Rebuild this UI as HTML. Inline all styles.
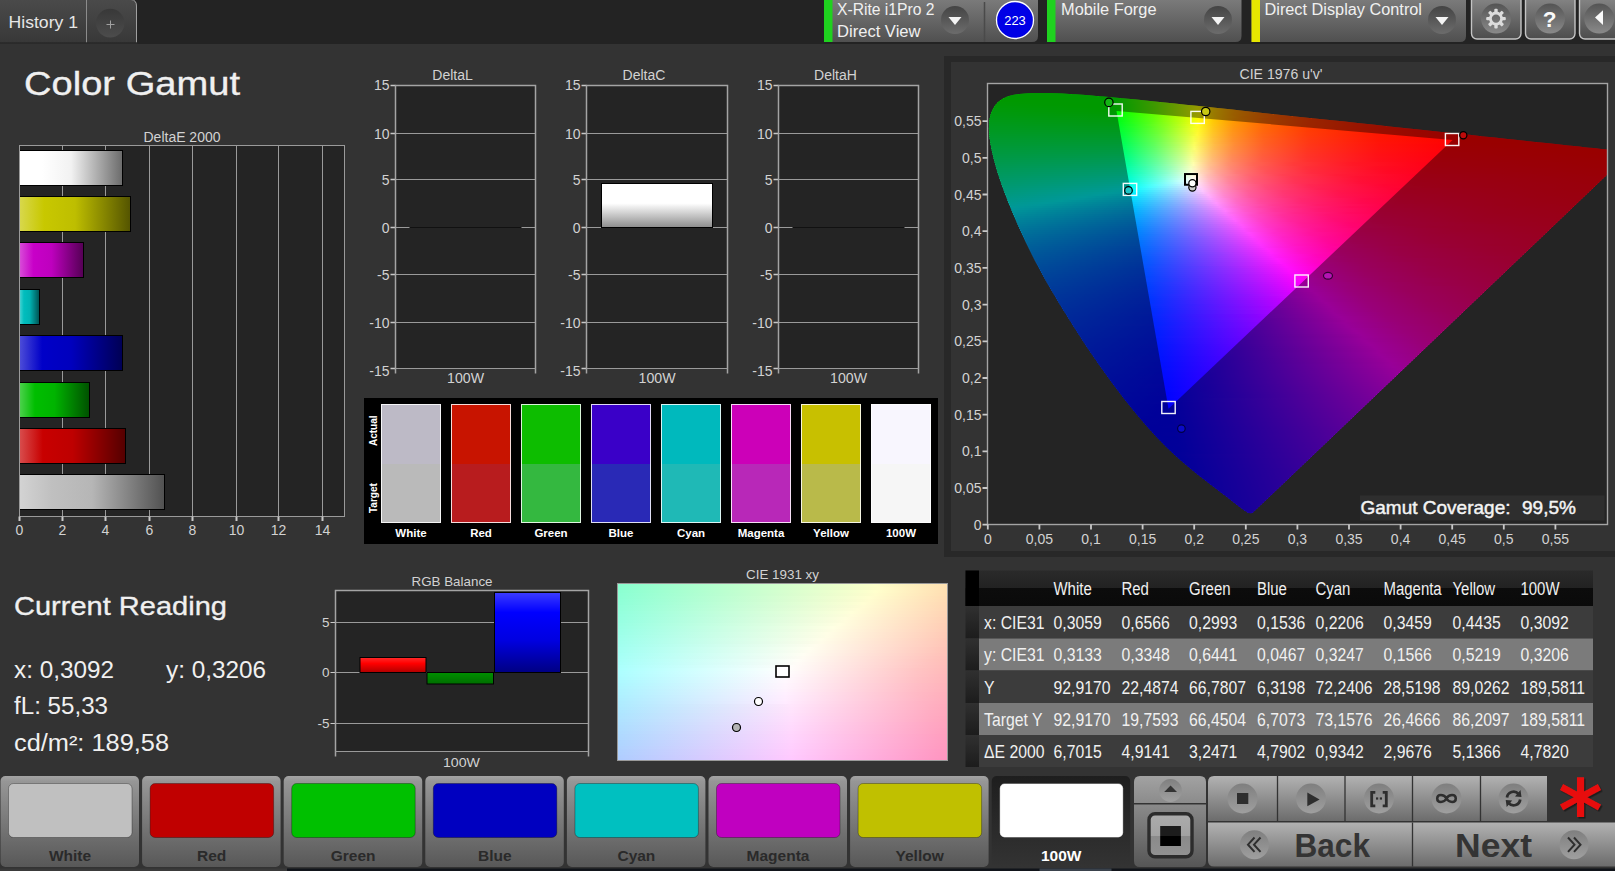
<!DOCTYPE html><html><head><meta charset="utf-8"><title>Color Gamut</title><style>html,body{margin:0;padding:0;background:#333;overflow:hidden}svg{display:block}</style></head><body><svg width="1615" height="871" viewBox="0 0 1615 871" font-family="Liberation Sans, sans-serif"><defs><linearGradient id="tab" x1="0" y1="0" x2="0" y2="1"><stop offset="0" stop-color="#4a4a4a"/><stop offset="1" stop-color="#383838"/></linearGradient><linearGradient id="plus" x1="0" y1="0" x2="0" y2="1"><stop offset="0" stop-color="#383838"/><stop offset="1" stop-color="#4c4c4c"/></linearGradient><linearGradient id="pan" x1="0" y1="0" x2="0" y2="1"><stop offset="0" stop-color="#7a7a7a"/><stop offset="1" stop-color="#505050"/></linearGradient><linearGradient id="btn" x1="0" y1="0" x2="0" y2="1"><stop offset="0" stop-color="#8a8a8a"/><stop offset="1" stop-color="#4c4c4c"/></linearGradient><linearGradient id="dd" x1="0" y1="0" x2="0" y2="1"><stop offset="0" stop-color="#444"/><stop offset="1" stop-color="#6c6c6c"/></linearGradient><linearGradient id="dd2" x1="0" y1="0" x2="0" y2="1"><stop offset="0" stop-color="#545454"/><stop offset="1" stop-color="#8a8a8a"/></linearGradient><linearGradient id="hb0" x1="0" y1="0" x2="1" y2="0"><stop offset="0" stop-color="#ffffff"/><stop offset="0.22" stop-color="#ffffff"/><stop offset="0.5" stop-color="#f2f2f2"/><stop offset="1" stop-color="#6b6b6b"/></linearGradient><linearGradient id="hb1" x1="0" y1="0" x2="1" y2="0"><stop offset="0" stop-color="#d8d84d"/><stop offset="0.22" stop-color="#c8c800"/><stop offset="0.5" stop-color="#bebe00"/><stop offset="1" stop-color="#545400"/></linearGradient><linearGradient id="hb2" x1="0" y1="0" x2="1" y2="0"><stop offset="0" stop-color="#d84dd8"/><stop offset="0.22" stop-color="#c800c8"/><stop offset="0.5" stop-color="#be00be"/><stop offset="1" stop-color="#540054"/></linearGradient><linearGradient id="hb3" x1="0" y1="0" x2="1" y2="0"><stop offset="0" stop-color="#4dd2d2"/><stop offset="0.22" stop-color="#00bebe"/><stop offset="0.5" stop-color="#00b4b4"/><stop offset="1" stop-color="#005050"/></linearGradient><linearGradient id="hb4" x1="0" y1="0" x2="1" y2="0"><stop offset="0" stop-color="#4d4dd8"/><stop offset="0.22" stop-color="#0000c8"/><stop offset="0.5" stop-color="#0000be"/><stop offset="1" stop-color="#000054"/></linearGradient><linearGradient id="hb5" x1="0" y1="0" x2="1" y2="0"><stop offset="0" stop-color="#4dd24d"/><stop offset="0.22" stop-color="#00be00"/><stop offset="0.5" stop-color="#00b400"/><stop offset="1" stop-color="#005000"/></linearGradient><linearGradient id="hb6" x1="0" y1="0" x2="1" y2="0"><stop offset="0" stop-color="#d84d4d"/><stop offset="0.22" stop-color="#c80000"/><stop offset="0.5" stop-color="#be0000"/><stop offset="1" stop-color="#540000"/></linearGradient><linearGradient id="hb7" x1="0" y1="0" x2="1" y2="0"><stop offset="0" stop-color="#d3d3d3"/><stop offset="0.22" stop-color="#c0c0c0"/><stop offset="0.5" stop-color="#b6b6b6"/><stop offset="1" stop-color="#515151"/></linearGradient><linearGradient id="wb" x1="0" y1="0" x2="0" y2="1"><stop offset="0" stop-color="#fff"/><stop offset="0.45" stop-color="#fff"/><stop offset="1" stop-color="#8c8c8c"/></linearGradient><clipPath id="loc"><path d="M1252.6 512.8L1252.5 512.8L1252.4 512.7L1252.3 512.8L1252.2 512.9L1252.1 512.9L1251.9 512.8L1251.7 512.8L1251.6 512.9L1251.6 513.1L1251.4 513.2L1251.3 513.2L1251.1 513.2L1250.8 513.2L1250.4 513.2L1250.1 513.2L1249.8 513.2L1249.5 513.1L1249.1 513.1L1248.5 512.9L1247.8 512.5L1246.8 511.9L1245.7 511.2L1244.5 510.4L1243.1 509.4L1241.5 508.2L1239.6 506.9L1237.5 505.3L1235.1 503.5L1232.6 501.5L1229.8 499.2L1226.7 496.8L1223.3 494.2L1219.4 491.3L1215.2 488.0L1210.5 484.4L1205.5 480.6L1200.2 476.5L1194.3 471.8L1188.0 466.6L1181.2 460.8L1174.0 454.3L1166.1 446.8L1157.3 437.8L1147.3 426.7L1136.2 413.8L1124.5 399.3L1112.2 383.1L1099.4 365.3L1086.2 345.9L1073.0 325.6L1059.9 304.6L1047.3 283.3L1035.7 262.1L1025.5 241.5L1016.6 221.9L1008.8 203.6L1002.4 186.8L997.4 171.9L993.7 158.7L991.1 147.3L989.5 137.4L988.9 128.9L989.2 121.6L990.4 115.3L992.3 109.9L995.0 105.4L998.3 101.8L1002.2 98.9L1006.6 96.8L1011.4 95.3L1016.5 94.3L1021.9 93.7L1027.5 93.3L1033.3 93.1L1039.2 93.1L1045.0 93.1L1050.9 93.1L1056.9 93.3L1063.0 93.6L1069.3 93.9L1075.7 94.3L1082.4 94.7L1089.3 95.3L1096.4 95.9L1103.8 96.5L1111.5 97.2L1119.5 98.0L1127.8 98.8L1136.5 99.6L1145.5 100.5L1154.9 101.5L1164.7 102.5L1174.9 103.6L1185.5 104.7L1196.6 105.8L1208.0 107.1L1219.9 108.3L1232.3 109.6L1245.1 111.0L1258.2 112.4L1271.8 113.9L1285.8 115.4L1300.1 116.9L1314.7 118.4L1329.6 120.0L1344.7 121.6L1359.9 123.2L1374.8 124.8L1389.4 126.4L1403.9 127.9L1418.4 129.5L1432.6 131.0L1446.2 132.5L1459.2 133.8L1471.6 135.1L1483.5 136.4L1494.7 137.6L1505.3 138.7L1515.2 139.8L1524.4 140.8L1532.9 141.7L1540.9 142.5L1548.4 143.3L1555.3 144.1L1561.8 144.8L1568.0 145.4L1573.9 146.0L1579.3 146.6L1584.4 147.2L1589.2 147.7L1593.6 148.1L1597.6 148.6L1601.2 149.0L1604.4 149.3L1607.2 149.6L1609.8 149.9L1612.2 150.1L1614.3 150.4L1616.2 150.6L1617.8 150.7L1619.2 150.9L1620.4 151.0L1621.4 151.1L1622.4 151.2L1623.4 151.3L1624.2 151.4L1625.0 151.5L1625.7 151.6L1626.5 151.7L1627.3 151.7L1628.0 151.8L1628.7 151.9L1629.3 152.0L1629.7 152.0L1630.0 152.0L1630.2 152.1L1630.5 152.1L1630.6 152.1L1630.8 152.1L1630.8 152.1L1630.8 152.1Z"/></clipPath><clipPath id="plotc"><rect x="988" y="84" width="619" height="440"/></clipPath><linearGradient id="c0" gradientUnits="userSpaceOnUse" x1="1018" x2="1072" y1="0" y2="0"><stop offset="0" stop-color="#0f0"/><stop offset="1" stop-color="#0f0"/></linearGradient><linearGradient id="c1" gradientUnits="userSpaceOnUse" x1="1008" x2="1099" y1="0" y2="0"><stop offset="0" stop-color="#0f0"/><stop offset="1" stop-color="#0f0"/></linearGradient><linearGradient id="c2" gradientUnits="userSpaceOnUse" x1="1003" x2="1121" y1="0" y2="0"><stop offset="0" stop-color="#0f0"/><stop offset="0.917" stop-color="#0f0"/><stop offset="0.958" stop-color="#05ff00"/><stop offset="1" stop-color="#10ff00"/></linearGradient><linearGradient id="c3" gradientUnits="userSpaceOnUse" x1="1000" x2="1141" y1="0" y2="0"><stop offset="0" stop-color="#0f0"/><stop offset="0.786" stop-color="#0f0"/><stop offset="0.821" stop-color="#03ff00"/><stop offset="1" stop-color="#42ff00"/></linearGradient><linearGradient id="c4" gradientUnits="userSpaceOnUse" x1="997" x2="1161" y1="0" y2="0"><stop offset="0" stop-color="#00ff01"/><stop offset="0.697" stop-color="#0f0"/><stop offset="0.727" stop-color="#04ff00"/><stop offset="0.97" stop-color="#6cff00"/><stop offset="1" stop-color="#7bff00"/></linearGradient><linearGradient id="c5" gradientUnits="userSpaceOnUse" x1="995" x2="1180" y1="0" y2="0"><stop offset="0" stop-color="#00ff05"/><stop offset="0.459" stop-color="#0f0"/><stop offset="0.649" stop-color="#0f0"/><stop offset="0.838" stop-color="#5aff00"/><stop offset="1" stop-color="#b8ff00"/></linearGradient><linearGradient id="c6" gradientUnits="userSpaceOnUse" x1="994" x2="1199" y1="0" y2="0"><stop offset="0" stop-color="#00ff08"/><stop offset="0.415" stop-color="#0f0"/><stop offset="0.585" stop-color="#0f0"/><stop offset="0.659" stop-color="#21ff00"/><stop offset="0.829" stop-color="#84ff00"/><stop offset="0.976" stop-color="#ebff00"/><stop offset="1" stop-color="#feff00"/></linearGradient><linearGradient id="c7" gradientUnits="userSpaceOnUse" x1="992" x2="1218" y1="0" y2="0"><stop offset="0" stop-color="#00ff0c"/><stop offset="0.467" stop-color="#0f0"/><stop offset="0.533" stop-color="#0f0"/><stop offset="0.556" stop-color="#04ff00"/><stop offset="0.711" stop-color="#61ff00"/><stop offset="0.844" stop-color="#c2ff00"/><stop offset="0.911" stop-color="#faff00"/><stop offset="0.956" stop-color="#ffdf00"/><stop offset="1" stop-color="#ffc200"/></linearGradient><linearGradient id="c8" gradientUnits="userSpaceOnUse" x1="991" x2="1237" y1="0" y2="0"><stop offset="0" stop-color="#00ff10"/><stop offset="0.51" stop-color="#01ff00"/><stop offset="0.653" stop-color="#5eff00"/><stop offset="0.776" stop-color="#bfff00"/><stop offset="0.837" stop-color="#f7ff00"/><stop offset="0.857" stop-color="#fff400"/><stop offset="0.918" stop-color="#ffc400"/><stop offset="1" stop-color="#ff9700"/></linearGradient><linearGradient id="c9" gradientUnits="userSpaceOnUse" x1="990" x2="1255" y1="0" y2="0"><stop offset="0" stop-color="#00ff14"/><stop offset="0.472" stop-color="#00ff01"/><stop offset="0.528" stop-color="#2f0"/><stop offset="0.66" stop-color="#87ff00"/><stop offset="0.774" stop-color="#f0ff00"/><stop offset="0.792" stop-color="#fffa00"/><stop offset="0.849" stop-color="#ffc900"/><stop offset="0.925" stop-color="#ff9a00"/><stop offset="1" stop-color="#ff7900"/></linearGradient><linearGradient id="c10" gradientUnits="userSpaceOnUse" x1="990" x2="1274" y1="0" y2="0"><stop offset="0" stop-color="#00ff18"/><stop offset="0.439" stop-color="#00ff05"/><stop offset="0.474" stop-color="#13ff03"/><stop offset="0.596" stop-color="#75ff00"/><stop offset="0.702" stop-color="#dbff00"/><stop offset="0.737" stop-color="#fffc00"/><stop offset="0.789" stop-color="#ffca00"/><stop offset="0.86" stop-color="#ff9b00"/><stop offset="0.965" stop-color="#ff6d00"/><stop offset="1" stop-color="#ff6100"/></linearGradient><linearGradient id="c11" gradientUnits="userSpaceOnUse" x1="989" x2="1293" y1="0" y2="0"><stop offset="0" stop-color="#00ff1b"/><stop offset="0.41" stop-color="#00ff0b"/><stop offset="0.426" stop-color="#03ff0a"/><stop offset="0.541" stop-color="#62ff02"/><stop offset="0.639" stop-color="#c6ff00"/><stop offset="0.689" stop-color="#ff0"/><stop offset="0.738" stop-color="#fc0"/><stop offset="0.803" stop-color="#ff9c00"/><stop offset="0.902" stop-color="#ff6d00"/><stop offset="1" stop-color="#ff4e00"/></linearGradient><linearGradient id="c12" gradientUnits="userSpaceOnUse" x1="989" x2="1312" y1="0" y2="0"><stop offset="0" stop-color="#00ff1f"/><stop offset="0.4" stop-color="#02ff0f"/><stop offset="0.508" stop-color="#61ff08"/><stop offset="0.6" stop-color="#c4ff01"/><stop offset="0.646" stop-color="#feff00"/><stop offset="0.708" stop-color="#ffbf00"/><stop offset="0.785" stop-color="#ff8a00"/><stop offset="0.892" stop-color="#ff5c00"/><stop offset="1" stop-color="#ff3e00"/></linearGradient><linearGradient id="c13" gradientUnits="userSpaceOnUse" x1="988" x2="1330" y1="0" y2="0"><stop offset="0" stop-color="#00ff23"/><stop offset="0.382" stop-color="#02ff14"/><stop offset="0.485" stop-color="#63ff0d"/><stop offset="0.574" stop-color="#c9ff07"/><stop offset="0.603" stop-color="#f0ff04"/><stop offset="0.618" stop-color="#fff903"/><stop offset="0.662" stop-color="#ffc700"/><stop offset="0.721" stop-color="#ff9800"/><stop offset="0.809" stop-color="#ff6900"/><stop offset="0.941" stop-color="#ff3f00"/><stop offset="1" stop-color="#ff3200"/></linearGradient><linearGradient id="c14" gradientUnits="userSpaceOnUse" x1="988" x2="1349" y1="0" y2="0"><stop offset="0" stop-color="#00ff27"/><stop offset="0.361" stop-color="#00ff19"/><stop offset="0.458" stop-color="#61ff13"/><stop offset="0.542" stop-color="#c7ff0d"/><stop offset="0.583" stop-color="#fffb0a"/><stop offset="0.625" stop-color="#ffc805"/><stop offset="0.681" stop-color="#ff9800"/><stop offset="0.764" stop-color="#ff6a00"/><stop offset="0.889" stop-color="#ff3f00"/><stop offset="1" stop-color="#ff2700"/></linearGradient><linearGradient id="c15" gradientUnits="userSpaceOnUse" x1="988" x2="1368" y1="0" y2="0"><stop offset="0" stop-color="#00ff2b"/><stop offset="0.342" stop-color="#00ff1e"/><stop offset="0.421" stop-color="#50ff1a"/><stop offset="0.5" stop-color="#b3ff15"/><stop offset="0.553" stop-color="#fffd10"/><stop offset="0.592" stop-color="#ffc90a"/><stop offset="0.645" stop-color="#ff9904"/><stop offset="0.724" stop-color="#ff6a00"/><stop offset="0.842" stop-color="#ff3f00"/><stop offset="1" stop-color="#ff1e00"/></linearGradient><linearGradient id="c16" gradientUnits="userSpaceOnUse" x1="988" x2="1387" y1="0" y2="0"><stop offset="0" stop-color="#00ff2f"/><stop offset="0.325" stop-color="#00ff23"/><stop offset="0.363" stop-color="#24ff22"/><stop offset="0.45" stop-color="#8fff1d"/><stop offset="0.525" stop-color="#fffe17"/><stop offset="0.562" stop-color="#ffca10"/><stop offset="0.613" stop-color="#ff9909"/><stop offset="0.688" stop-color="#ff6a03"/><stop offset="0.8" stop-color="#ff3f00"/><stop offset="0.975" stop-color="#ff1a00"/><stop offset="1" stop-color="#ff1600"/></linearGradient><linearGradient id="c17" gradientUnits="userSpaceOnUse" x1="988" x2="1405" y1="0" y2="0"><stop offset="0" stop-color="#0f3"/><stop offset="0.313" stop-color="#00ff29"/><stop offset="0.386" stop-color="#52ff25"/><stop offset="0.458" stop-color="#b7ff21"/><stop offset="0.494" stop-color="#f2ff1f"/><stop offset="0.506" stop-color="#fff71d"/><stop offset="0.542" stop-color="#ffc415"/><stop offset="0.59" stop-color="#ff950d"/><stop offset="0.663" stop-color="#ff6706"/><stop offset="0.771" stop-color="#ff3d00"/><stop offset="0.94" stop-color="#ff1800"/><stop offset="1" stop-color="#ff1000"/></linearGradient><linearGradient id="c18" gradientUnits="userSpaceOnUse" x1="988" x2="1424" y1="0" y2="0"><stop offset="0" stop-color="#00ff36"/><stop offset="0.299" stop-color="#00ff2e"/><stop offset="0.333" stop-color="#24ff2d"/><stop offset="0.402" stop-color="#80ff29"/><stop offset="0.471" stop-color="#f1ff25"/><stop offset="0.483" stop-color="#fff824"/><stop offset="0.517" stop-color="#ffc51a"/><stop offset="0.563" stop-color="#ff9512"/><stop offset="0.632" stop-color="#ff6709"/><stop offset="0.736" stop-color="#ff3d02"/><stop offset="0.897" stop-color="#ff1800"/><stop offset="1" stop-color="#ff0a00"/></linearGradient><linearGradient id="c19" gradientUnits="userSpaceOnUse" x1="988" x2="1443" y1="0" y2="0"><stop offset="0" stop-color="#00ff3a"/><stop offset="0.286" stop-color="#0f3"/><stop offset="0.308" stop-color="#15ff33"/><stop offset="0.385" stop-color="#7fff30"/><stop offset="0.451" stop-color="#f0ff2c"/><stop offset="0.462" stop-color="#fff92b"/><stop offset="0.495" stop-color="#ffc520"/><stop offset="0.538" stop-color="#ff9517"/><stop offset="0.604" stop-color="#ff670d"/><stop offset="0.703" stop-color="#ff3c05"/><stop offset="0.857" stop-color="#ff1800"/><stop offset="1" stop-color="#ff0400"/></linearGradient><linearGradient id="c20" gradientUnits="userSpaceOnUse" x1="988" x2="1462" y1="0" y2="0"><stop offset="0" stop-color="#00ff3e"/><stop offset="0.274" stop-color="#00ff39"/><stop offset="0.284" stop-color="#06ff39"/><stop offset="0.358" stop-color="#6dff36"/><stop offset="0.421" stop-color="#daff34"/><stop offset="0.442" stop-color="#fffa32"/><stop offset="0.474" stop-color="#ffc626"/><stop offset="0.516" stop-color="#ff951c"/><stop offset="0.579" stop-color="#f61"/><stop offset="0.674" stop-color="#ff3c08"/><stop offset="0.821" stop-color="#ff1800"/><stop offset="1" stop-color="#f00"/></linearGradient><linearGradient id="c21" gradientUnits="userSpaceOnUse" x1="988" x2="1481" y1="0" y2="0"><stop offset="0" stop-color="#00ff43"/><stop offset="0.263" stop-color="#00ff3f"/><stop offset="0.273" stop-color="#05ff3e"/><stop offset="0.343" stop-color="#6cff3d"/><stop offset="0.404" stop-color="#d9ff3b"/><stop offset="0.424" stop-color="#fffb39"/><stop offset="0.455" stop-color="#ffc62c"/><stop offset="0.495" stop-color="#ff9520"/><stop offset="0.556" stop-color="#ff6615"/><stop offset="0.646" stop-color="#ff3c0a"/><stop offset="0.788" stop-color="#ff1702"/><stop offset="0.97" stop-color="#f00"/><stop offset="1" stop-color="#f00"/></linearGradient><linearGradient id="c22" gradientUnits="userSpaceOnUse" x1="988" x2="1499" y1="0" y2="0"><stop offset="0" stop-color="#00ff47"/><stop offset="0.255" stop-color="#0f4"/><stop offset="0.265" stop-color="#06ff44"/><stop offset="0.333" stop-color="#6fff43"/><stop offset="0.392" stop-color="#deff42"/><stop offset="0.402" stop-color="#f4ff42"/><stop offset="0.412" stop-color="#fff53f"/><stop offset="0.441" stop-color="#ffc131"/><stop offset="0.48" stop-color="#ff9224"/><stop offset="0.539" stop-color="#ff6318"/><stop offset="0.627" stop-color="#ff3a0d"/><stop offset="0.765" stop-color="#ff1603"/><stop offset="0.931" stop-color="#f00"/><stop offset="1" stop-color="#f00"/></linearGradient><linearGradient id="c23" gradientUnits="userSpaceOnUse" x1="989" x2="1518" y1="0" y2="0"><stop offset="0" stop-color="#00ff4b"/><stop offset="0.245" stop-color="#00ff4a"/><stop offset="0.255" stop-color="#06ff4a"/><stop offset="0.321" stop-color="#70ff4a"/><stop offset="0.368" stop-color="#ccff49"/><stop offset="0.387" stop-color="#f5ff49"/><stop offset="0.396" stop-color="#fff346"/><stop offset="0.425" stop-color="#ffc037"/><stop offset="0.462" stop-color="#ff9129"/><stop offset="0.519" stop-color="#ff631c"/><stop offset="0.604" stop-color="#ff3910"/><stop offset="0.736" stop-color="#ff1605"/><stop offset="0.896" stop-color="#f00"/><stop offset="1" stop-color="#f00"/></linearGradient><linearGradient id="c24" gradientUnits="userSpaceOnUse" x1="989" x2="1537" y1="0" y2="0"><stop offset="0" stop-color="#00ff4f"/><stop offset="0.236" stop-color="#00ff50"/><stop offset="0.245" stop-color="#05ff50"/><stop offset="0.309" stop-color="#6eff50"/><stop offset="0.355" stop-color="#cbff50"/><stop offset="0.373" stop-color="#f4ff51"/><stop offset="0.382" stop-color="#fff44d"/><stop offset="0.409" stop-color="#ffc03d"/><stop offset="0.445" stop-color="#ff902e"/><stop offset="0.5" stop-color="#ff6220"/><stop offset="0.582" stop-color="#ff3913"/><stop offset="0.709" stop-color="#ff1507"/><stop offset="0.864" stop-color="#f00"/><stop offset="1" stop-color="#f00"/></linearGradient><linearGradient id="c25" gradientUnits="userSpaceOnUse" x1="989" x2="1556" y1="0" y2="0"><stop offset="0" stop-color="#00ff53"/><stop offset="0.23" stop-color="#00ff56"/><stop offset="0.239" stop-color="#06ff56"/><stop offset="0.292" stop-color="#61ff57"/><stop offset="0.345" stop-color="#d1ff58"/><stop offset="0.363" stop-color="#fcff58"/><stop offset="0.398" stop-color="#ffba41"/><stop offset="0.434" stop-color="#ff8c32"/><stop offset="0.487" stop-color="#ff5f22"/><stop offset="0.566" stop-color="#ff3715"/><stop offset="0.69" stop-color="#ff1409"/><stop offset="0.832" stop-color="#ff0002"/><stop offset="1" stop-color="#f00"/></linearGradient><linearGradient id="c26" gradientUnits="userSpaceOnUse" x1="989" x2="1575" y1="0" y2="0"><stop offset="0" stop-color="#00ff57"/><stop offset="0.222" stop-color="#00ff5c"/><stop offset="0.231" stop-color="#05ff5c"/><stop offset="0.282" stop-color="#60ff5d"/><stop offset="0.325" stop-color="#bbff5f"/><stop offset="0.35" stop-color="#fbff60"/><stop offset="0.385" stop-color="#ffbb47"/><stop offset="0.419" stop-color="#ff8c37"/><stop offset="0.47" stop-color="#ff5f26"/><stop offset="0.547" stop-color="#ff3618"/><stop offset="0.667" stop-color="#ff130b"/><stop offset="0.795" stop-color="#ff0004"/><stop offset="1" stop-color="#f00"/></linearGradient><linearGradient id="c27" gradientUnits="userSpaceOnUse" x1="990" x2="1593" y1="0" y2="0"><stop offset="0" stop-color="#00ff5c"/><stop offset="0.215" stop-color="#00ff62"/><stop offset="0.223" stop-color="#05ff62"/><stop offset="0.273" stop-color="#60ff64"/><stop offset="0.314" stop-color="#bcff66"/><stop offset="0.339" stop-color="#fcff68"/><stop offset="0.372" stop-color="#ffba4d"/><stop offset="0.405" stop-color="#ff8b3c"/><stop offset="0.455" stop-color="#ff5e2a"/><stop offset="0.529" stop-color="#ff361b"/><stop offset="0.645" stop-color="#ff130d"/><stop offset="0.769" stop-color="#ff0005"/><stop offset="1" stop-color="#f00"/></linearGradient><linearGradient id="c28" gradientUnits="userSpaceOnUse" x1="990" x2="1607.5" y1="0" y2="0"><stop offset="0" stop-color="#00ff60"/><stop offset="0.21" stop-color="#00ff68"/><stop offset="0.218" stop-color="#04ff68"/><stop offset="0.266" stop-color="#5fff6b"/><stop offset="0.306" stop-color="#bcff6e"/><stop offset="0.331" stop-color="#fcff70"/><stop offset="0.363" stop-color="#ffb953"/><stop offset="0.395" stop-color="#ff8b40"/><stop offset="0.444" stop-color="#ff5e2e"/><stop offset="0.516" stop-color="#ff351e"/><stop offset="0.629" stop-color="#ff130f"/><stop offset="0.75" stop-color="#ff0007"/><stop offset="1" stop-color="#f00"/></linearGradient><linearGradient id="c29" gradientUnits="userSpaceOnUse" x1="991" x2="1607.5" y1="0" y2="0"><stop offset="0" stop-color="#00ff65"/><stop offset="0.211" stop-color="#00ff6e"/><stop offset="0.22" stop-color="#08ff6f"/><stop offset="0.268" stop-color="#66ff72"/><stop offset="0.309" stop-color="#c5ff76"/><stop offset="0.325" stop-color="#f1ff77"/><stop offset="0.333" stop-color="#fff774"/><stop offset="0.358" stop-color="#ffc05d"/><stop offset="0.39" stop-color="#ff8f47"/><stop offset="0.439" stop-color="#ff6033"/><stop offset="0.512" stop-color="#ff3621"/><stop offset="0.626" stop-color="#ff1312"/><stop offset="0.748" stop-color="#ff0009"/><stop offset="1" stop-color="#f00"/></linearGradient><linearGradient id="c30" gradientUnits="userSpaceOnUse" x1="991" x2="1607.5" y1="0" y2="0"><stop offset="0" stop-color="#00ff69"/><stop offset="0.211" stop-color="#00ff74"/><stop offset="0.22" stop-color="#07ff75"/><stop offset="0.268" stop-color="#66ff79"/><stop offset="0.309" stop-color="#c6ff7e"/><stop offset="0.325" stop-color="#f1ff80"/><stop offset="0.333" stop-color="#fff67c"/><stop offset="0.358" stop-color="#ffbf63"/><stop offset="0.39" stop-color="#ff8e4c"/><stop offset="0.439" stop-color="#ff5f37"/><stop offset="0.512" stop-color="#ff3524"/><stop offset="0.626" stop-color="#ff1214"/><stop offset="0.74" stop-color="#ff000b"/><stop offset="1" stop-color="#f00"/></linearGradient><linearGradient id="c31" gradientUnits="userSpaceOnUse" x1="992" x2="1607.5" y1="0" y2="0"><stop offset="0" stop-color="#00ff6e"/><stop offset="0.211" stop-color="#00ff7b"/><stop offset="0.22" stop-color="#08ff7c"/><stop offset="0.268" stop-color="#68ff81"/><stop offset="0.309" stop-color="#c9ff86"/><stop offset="0.325" stop-color="#f5ff88"/><stop offset="0.333" stop-color="#fff282"/><stop offset="0.358" stop-color="#ffbc68"/><stop offset="0.39" stop-color="#ff8b51"/><stop offset="0.439" stop-color="#ff5d3a"/><stop offset="0.512" stop-color="#ff3427"/><stop offset="0.626" stop-color="#ff1116"/><stop offset="0.74" stop-color="#ff000c"/><stop offset="1" stop-color="#ff0001"/></linearGradient><linearGradient id="c32" gradientUnits="userSpaceOnUse" x1="992" x2="1607.5" y1="0" y2="0"><stop offset="0" stop-color="#00ff72"/><stop offset="0.211" stop-color="#00ff81"/><stop offset="0.22" stop-color="#07ff82"/><stop offset="0.268" stop-color="#68ff88"/><stop offset="0.309" stop-color="#caff8e"/><stop offset="0.325" stop-color="#f6ff91"/><stop offset="0.333" stop-color="#fff18a"/><stop offset="0.358" stop-color="#ffbb6e"/><stop offset="0.39" stop-color="#ff8a56"/><stop offset="0.439" stop-color="#ff5c3e"/><stop offset="0.512" stop-color="#ff3329"/><stop offset="0.626" stop-color="#ff1118"/><stop offset="0.732" stop-color="#ff000e"/><stop offset="1" stop-color="#ff0002"/></linearGradient><linearGradient id="c33" gradientUnits="userSpaceOnUse" x1="992" x2="1607.5" y1="0" y2="0"><stop offset="0" stop-color="#0f7"/><stop offset="0.211" stop-color="#0f8"/><stop offset="0.22" stop-color="#06ff89"/><stop offset="0.268" stop-color="#67ff90"/><stop offset="0.309" stop-color="#caff96"/><stop offset="0.325" stop-color="#f7ff99"/><stop offset="0.333" stop-color="#fff092"/><stop offset="0.358" stop-color="#ffba75"/><stop offset="0.39" stop-color="#ff895b"/><stop offset="0.439" stop-color="#ff5b42"/><stop offset="0.512" stop-color="#ff332c"/><stop offset="0.626" stop-color="#ff101a"/><stop offset="0.732" stop-color="#ff0010"/><stop offset="1" stop-color="#ff0003"/></linearGradient><linearGradient id="c34" gradientUnits="userSpaceOnUse" x1="993" x2="1607.5" y1="0" y2="0"><stop offset="0" stop-color="#00ff7b"/><stop offset="0.211" stop-color="#00ff8f"/><stop offset="0.22" stop-color="#08ff90"/><stop offset="0.268" stop-color="#6aff97"/><stop offset="0.309" stop-color="#cdff9f"/><stop offset="0.325" stop-color="#fbffa2"/><stop offset="0.358" stop-color="#ffb77a"/><stop offset="0.39" stop-color="#ff875f"/><stop offset="0.439" stop-color="#ff5a46"/><stop offset="0.512" stop-color="#ff312f"/><stop offset="0.626" stop-color="#ff0f1c"/><stop offset="0.732" stop-color="#ff0012"/><stop offset="1" stop-color="#ff0004"/></linearGradient><linearGradient id="c35" gradientUnits="userSpaceOnUse" x1="994" x2="1607.5" y1="0" y2="0"><stop offset="0" stop-color="#00ff80"/><stop offset="0.211" stop-color="#00ff96"/><stop offset="0.22" stop-color="#09ff97"/><stop offset="0.268" stop-color="#6cff9f"/><stop offset="0.309" stop-color="#d1ffa8"/><stop offset="0.325" stop-color="#ffffab"/><stop offset="0.35" stop-color="#ffc388"/><stop offset="0.382" stop-color="#ff8f6a"/><stop offset="0.423" stop-color="#ff6551"/><stop offset="0.488" stop-color="#ff3b38"/><stop offset="0.585" stop-color="#ff1824"/><stop offset="0.715" stop-color="#ff0015"/><stop offset="1" stop-color="#ff0005"/></linearGradient><linearGradient id="c36" gradientUnits="userSpaceOnUse" x1="994" x2="1607.5" y1="0" y2="0"><stop offset="0" stop-color="#00ff85"/><stop offset="0.211" stop-color="#00ff9d"/><stop offset="0.22" stop-color="#08ff9e"/><stop offset="0.268" stop-color="#6cffa7"/><stop offset="0.309" stop-color="#d2ffb1"/><stop offset="0.325" stop-color="#fffeb4"/><stop offset="0.35" stop-color="#ffc28f"/><stop offset="0.382" stop-color="#ff8e6f"/><stop offset="0.423" stop-color="#ff6455"/><stop offset="0.488" stop-color="#ff3a3b"/><stop offset="0.585" stop-color="#ff1826"/><stop offset="0.715" stop-color="#ff0016"/><stop offset="1" stop-color="#ff0006"/></linearGradient><linearGradient id="c37" gradientUnits="userSpaceOnUse" x1="995" x2="1607.5" y1="0" y2="0"><stop offset="0" stop-color="#00ff8a"/><stop offset="0.213" stop-color="#00ffa4"/><stop offset="0.246" stop-color="#3dffab"/><stop offset="0.287" stop-color="#9bffb4"/><stop offset="0.32" stop-color="#f4ffbd"/><stop offset="0.328" stop-color="#fff2b5"/><stop offset="0.352" stop-color="#ffba91"/><stop offset="0.385" stop-color="#ff8871"/><stop offset="0.434" stop-color="#ff5953"/><stop offset="0.508" stop-color="#ff3038"/><stop offset="0.623" stop-color="#ff0e22"/><stop offset="0.721" stop-color="#ff0017"/><stop offset="1" stop-color="#ff0007"/></linearGradient><linearGradient id="c38" gradientUnits="userSpaceOnUse" x1="995" x2="1607.5" y1="0" y2="0"><stop offset="0" stop-color="#00ff8f"/><stop offset="0.213" stop-color="#00ffac"/><stop offset="0.238" stop-color="#2cffb1"/><stop offset="0.279" stop-color="#87ffba"/><stop offset="0.32" stop-color="#f5ffc6"/><stop offset="0.328" stop-color="#fff1be"/><stop offset="0.352" stop-color="#ffb898"/><stop offset="0.385" stop-color="#ff8776"/><stop offset="0.434" stop-color="#ff5857"/><stop offset="0.508" stop-color="#ff2f3b"/><stop offset="0.623" stop-color="#ff0d24"/><stop offset="0.713" stop-color="#ff001a"/><stop offset="1" stop-color="#ff0008"/></linearGradient><linearGradient id="c39" gradientUnits="userSpaceOnUse" x1="996" x2="1607.5" y1="0" y2="0"><stop offset="0" stop-color="#00ff94"/><stop offset="0.213" stop-color="#00ffb3"/><stop offset="0.254" stop-color="#50ffbd"/><stop offset="0.295" stop-color="#b3ffc8"/><stop offset="0.32" stop-color="#f9ffd0"/><stop offset="0.336" stop-color="#ffd8b5"/><stop offset="0.361" stop-color="#ffa793"/><stop offset="0.393" stop-color="#ff7b74"/><stop offset="0.443" stop-color="#ff5156"/><stop offset="0.516" stop-color="#ff2b3c"/><stop offset="0.639" stop-color="#ff0924"/><stop offset="0.713" stop-color="#ff001b"/><stop offset="1" stop-color="#ff0009"/></linearGradient><linearGradient id="c40" gradientUnits="userSpaceOnUse" x1="996" x2="1607.5" y1="0" y2="0"><stop offset="0" stop-color="#0f9"/><stop offset="0.205" stop-color="#00ffb9"/><stop offset="0.213" stop-color="#00ffba"/><stop offset="0.238" stop-color="#2dffc0"/><stop offset="0.279" stop-color="#89ffcc"/><stop offset="0.32" stop-color="#faffda"/><stop offset="0.336" stop-color="#ffd7bd"/><stop offset="0.361" stop-color="#ffa699"/><stop offset="0.393" stop-color="#ff7a79"/><stop offset="0.443" stop-color="#ff505a"/><stop offset="0.516" stop-color="#ff2a3f"/><stop offset="0.639" stop-color="#ff0926"/><stop offset="0.713" stop-color="#ff001d"/><stop offset="1" stop-color="#ff000a"/></linearGradient><linearGradient id="c41" gradientUnits="userSpaceOnUse" x1="997" x2="1607.5" y1="0" y2="0"><stop offset="0" stop-color="#00ff9e"/><stop offset="0.197" stop-color="#00ffbe"/><stop offset="0.213" stop-color="#00ffc2"/><stop offset="0.254" stop-color="#52ffcd"/><stop offset="0.295" stop-color="#b7ffdb"/><stop offset="0.32" stop-color="#ffffe4"/><stop offset="0.344" stop-color="#ffc1b5"/><stop offset="0.369" stop-color="#ff9795"/><stop offset="0.41" stop-color="#ff6871"/><stop offset="0.467" stop-color="#ff4052"/><stop offset="0.557" stop-color="#ff1c37"/><stop offset="0.689" stop-color="#f02"/><stop offset="1" stop-color="#ff000b"/></linearGradient><linearGradient id="c42" gradientUnits="userSpaceOnUse" x1="998" x2="1607" y1="0" y2="0"><stop offset="0" stop-color="#00ffa3"/><stop offset="0.197" stop-color="#00ffc6"/><stop offset="0.213" stop-color="#00ffca"/><stop offset="0.254" stop-color="#54ffd6"/><stop offset="0.295" stop-color="#baffe5"/><stop offset="0.32" stop-color="#fffcec"/><stop offset="0.344" stop-color="#ffbebb"/><stop offset="0.377" stop-color="#ff8991"/><stop offset="0.418" stop-color="#ff5f70"/><stop offset="0.484" stop-color="#ff364f"/><stop offset="0.59" stop-color="#ff1232"/><stop offset="0.697" stop-color="#f02"/><stop offset="1" stop-color="#ff000d"/></linearGradient><linearGradient id="c43" gradientUnits="userSpaceOnUse" x1="998" x2="1605" y1="0" y2="0"><stop offset="0" stop-color="#00ffa8"/><stop offset="0.19" stop-color="#0fc"/><stop offset="0.215" stop-color="#00ffd2"/><stop offset="0.264" stop-color="#69ffe2"/><stop offset="0.306" stop-color="#d6fff3"/><stop offset="0.314" stop-color="#effff6"/><stop offset="0.322" stop-color="#fff6f1"/><stop offset="0.347" stop-color="#ffbac0"/><stop offset="0.38" stop-color="#ff8695"/><stop offset="0.421" stop-color="#ff5c73"/><stop offset="0.488" stop-color="#ff3452"/><stop offset="0.595" stop-color="#ff1134"/><stop offset="0.694" stop-color="#ff0025"/><stop offset="1" stop-color="#ff000e"/></linearGradient><linearGradient id="c44" gradientUnits="userSpaceOnUse" x1="999" x2="1603" y1="0" y2="0"><stop offset="0" stop-color="#00ffae"/><stop offset="0.182" stop-color="#00ffd1"/><stop offset="0.215" stop-color="#00ffda"/><stop offset="0.264" stop-color="#6affeb"/><stop offset="0.306" stop-color="#d7fffd"/><stop offset="0.314" stop-color="#eefdff"/><stop offset="0.322" stop-color="#fff4fa"/><stop offset="0.347" stop-color="#ffb9c7"/><stop offset="0.38" stop-color="#ff859b"/><stop offset="0.421" stop-color="#ff5c77"/><stop offset="0.488" stop-color="#ff3455"/><stop offset="0.595" stop-color="#ff1037"/><stop offset="0.694" stop-color="#ff0027"/><stop offset="1" stop-color="#ff000f"/></linearGradient><linearGradient id="c45" gradientUnits="userSpaceOnUse" x1="1000" x2="1600" y1="0" y2="0"><stop offset="0" stop-color="#00ffb3"/><stop offset="0.183" stop-color="#00ffd9"/><stop offset="0.217" stop-color="#03ffe3"/><stop offset="0.258" stop-color="#5bfff2"/><stop offset="0.3" stop-color="#c2faff"/><stop offset="0.325" stop-color="#ffedfe"/><stop offset="0.35" stop-color="#ffb3cb"/><stop offset="0.383" stop-color="#ff819e"/><stop offset="0.425" stop-color="#ff597a"/><stop offset="0.492" stop-color="#ff3257"/><stop offset="0.6" stop-color="#ff0f39"/><stop offset="0.692" stop-color="#ff0029"/><stop offset="0.992" stop-color="#f01"/><stop offset="1" stop-color="#ff0010"/></linearGradient><linearGradient id="c46" gradientUnits="userSpaceOnUse" x1="1000" x2="1598" y1="0" y2="0"><stop offset="0" stop-color="#00ffb8"/><stop offset="0.175" stop-color="#00ffde"/><stop offset="0.217" stop-color="#00ffeb"/><stop offset="0.258" stop-color="#58fffb"/><stop offset="0.3" stop-color="#b9f1ff"/><stop offset="0.325" stop-color="#f5e5ff"/><stop offset="0.333" stop-color="#ffd9f5"/><stop offset="0.358" stop-color="#ffa6c6"/><stop offset="0.392" stop-color="#ff789c"/><stop offset="0.442" stop-color="#ff4d75"/><stop offset="0.517" stop-color="#ff2752"/><stop offset="0.642" stop-color="#ff0633"/><stop offset="0.708" stop-color="#ff0029"/><stop offset="1" stop-color="#ff0012"/></linearGradient><linearGradient id="c47" gradientUnits="userSpaceOnUse" x1="1001" x2="1596" y1="0" y2="0"><stop offset="0" stop-color="#00ffbe"/><stop offset="0.168" stop-color="#00ffe4"/><stop offset="0.21" stop-color="#00fff1"/><stop offset="0.218" stop-color="#04fff4"/><stop offset="0.252" stop-color="#4afdff"/><stop offset="0.328" stop-color="#f3dbff"/><stop offset="0.336" stop-color="#ffd1f7"/><stop offset="0.361" stop-color="#ffa0c8"/><stop offset="0.395" stop-color="#ff749f"/><stop offset="0.445" stop-color="#ff4a77"/><stop offset="0.521" stop-color="#ff2554"/><stop offset="0.647" stop-color="#ff0535"/><stop offset="0.731" stop-color="#ff0028"/><stop offset="1" stop-color="#ff0013"/></linearGradient><linearGradient id="c48" gradientUnits="userSpaceOnUse" x1="1002" x2="1594" y1="0" y2="0"><stop offset="0" stop-color="#00ffc4"/><stop offset="0.169" stop-color="#00ffec"/><stop offset="0.212" stop-color="#00fffa"/><stop offset="0.22" stop-color="#08fffe"/><stop offset="0.305" stop-color="#b8ddff"/><stop offset="0.331" stop-color="#f1d2ff"/><stop offset="0.339" stop-color="#ffc9f9"/><stop offset="0.364" stop-color="#ff9acb"/><stop offset="0.398" stop-color="#ff6fa1"/><stop offset="0.449" stop-color="#ff4779"/><stop offset="0.534" stop-color="#ff2053"/><stop offset="0.669" stop-color="#ff0133"/><stop offset="0.924" stop-color="#ff0019"/><stop offset="1" stop-color="#ff0014"/></linearGradient><linearGradient id="c49" gradientUnits="userSpaceOnUse" x1="1003" x2="1592" y1="0" y2="0"><stop offset="0" stop-color="#00ffca"/><stop offset="0.161" stop-color="#00fff1"/><stop offset="0.212" stop-color="#00fbff"/><stop offset="0.22" stop-color="#07f8ff"/><stop offset="0.314" stop-color="#c4d1ff"/><stop offset="0.339" stop-color="#fcc6ff"/><stop offset="0.373" stop-color="#ff8dc5"/><stop offset="0.415" stop-color="#ff5f96"/><stop offset="0.475" stop-color="#ff386f"/><stop offset="0.568" stop-color="#ff164b"/><stop offset="0.686" stop-color="#f03"/><stop offset="0.949" stop-color="#ff0019"/><stop offset="1" stop-color="#ff0016"/></linearGradient><linearGradient id="c50" gradientUnits="userSpaceOnUse" x1="1003" x2="1590" y1="0" y2="0"><stop offset="0" stop-color="#00ffcf"/><stop offset="0.162" stop-color="#00fff9"/><stop offset="0.188" stop-color="#00fcff"/><stop offset="0.214" stop-color="#00f2ff"/><stop offset="0.222" stop-color="#08efff"/><stop offset="0.316" stop-color="#c1c9ff"/><stop offset="0.342" stop-color="#f8beff"/><stop offset="0.35" stop-color="#ffb2f4"/><stop offset="0.376" stop-color="#ff89c9"/><stop offset="0.419" stop-color="#ff5c99"/><stop offset="0.479" stop-color="#ff3671"/><stop offset="0.573" stop-color="#ff144d"/><stop offset="0.684" stop-color="#ff0035"/><stop offset="0.94" stop-color="#ff001b"/><stop offset="1" stop-color="#ff0017"/></linearGradient><linearGradient id="c51" gradientUnits="userSpaceOnUse" x1="1004" x2="1588" y1="0" y2="0"><stop offset="0" stop-color="#00ffd5"/><stop offset="0.162" stop-color="#00fdff"/><stop offset="0.214" stop-color="#00eaff"/><stop offset="0.222" stop-color="#08e7ff"/><stop offset="0.316" stop-color="#bcc2ff"/><stop offset="0.35" stop-color="#ffb1fc"/><stop offset="0.376" stop-color="#ff88cf"/><stop offset="0.419" stop-color="#ff5b9e"/><stop offset="0.479" stop-color="#ff3675"/><stop offset="0.573" stop-color="#ff1450"/><stop offset="0.684" stop-color="#ff0038"/><stop offset="0.932" stop-color="#ff001d"/><stop offset="1" stop-color="#ff0018"/></linearGradient><linearGradient id="c52" gradientUnits="userSpaceOnUse" x1="1005" x2="1586" y1="0" y2="0"><stop offset="0" stop-color="#00ffdb"/><stop offset="0.138" stop-color="#00fdff"/><stop offset="0.216" stop-color="#00e2ff"/><stop offset="0.241" stop-color="#2ad9ff"/><stop offset="0.336" stop-color="#deb3ff"/><stop offset="0.353" stop-color="#ffaafd"/><stop offset="0.379" stop-color="#ff83d1"/><stop offset="0.422" stop-color="#ff58a0"/><stop offset="0.483" stop-color="#f37"/><stop offset="0.578" stop-color="#ff1252"/><stop offset="0.681" stop-color="#ff003a"/><stop offset="0.922" stop-color="#ff001f"/><stop offset="1" stop-color="#ff001a"/></linearGradient><linearGradient id="c53" gradientUnits="userSpaceOnUse" x1="1006" x2="1584" y1="0" y2="0"><stop offset="0" stop-color="#00ffe2"/><stop offset="0.121" stop-color="#00fcff"/><stop offset="0.216" stop-color="#00dbff"/><stop offset="0.241" stop-color="#28d2ff"/><stop offset="0.345" stop-color="#e8a9ff"/><stop offset="0.353" stop-color="#f9a5ff"/><stop offset="0.362" stop-color="#ff9af4"/><stop offset="0.397" stop-color="#ff6ec1"/><stop offset="0.44" stop-color="#ff4b97"/><stop offset="0.509" stop-color="#ff286e"/><stop offset="0.621" stop-color="#ff0849"/><stop offset="0.69" stop-color="#ff003b"/><stop offset="0.94" stop-color="#ff001f"/><stop offset="1" stop-color="#ff001b"/></linearGradient><linearGradient id="c54" gradientUnits="userSpaceOnUse" x1="1006" x2="1582" y1="0" y2="0"><stop offset="0" stop-color="#00ffe7"/><stop offset="0.096" stop-color="#00fdff"/><stop offset="0.217" stop-color="#00d4ff"/><stop offset="0.278" stop-color="#65beff"/><stop offset="0.357" stop-color="#f59eff"/><stop offset="0.365" stop-color="#ff96f8"/><stop offset="0.4" stop-color="#ff6bc4"/><stop offset="0.443" stop-color="#ff489a"/><stop offset="0.513" stop-color="#ff2670"/><stop offset="0.617" stop-color="#ff094d"/><stop offset="0.687" stop-color="#ff003e"/><stop offset="0.922" stop-color="#f02"/><stop offset="1" stop-color="#ff001c"/></linearGradient><linearGradient id="c55" gradientUnits="userSpaceOnUse" x1="1007" x2="1580" y1="0" y2="0"><stop offset="0" stop-color="#0fe"/><stop offset="0.07" stop-color="#00fdff"/><stop offset="0.217" stop-color="#00cdff"/><stop offset="0.278" stop-color="#62b7ff"/><stop offset="0.365" stop-color="#ff95ff"/><stop offset="0.4" stop-color="#ff6aca"/><stop offset="0.443" stop-color="#ff489f"/><stop offset="0.513" stop-color="#ff2574"/><stop offset="0.617" stop-color="#ff0850"/><stop offset="0.687" stop-color="#ff0040"/><stop offset="0.922" stop-color="#ff0023"/><stop offset="1" stop-color="#ff001e"/></linearGradient><linearGradient id="c56" gradientUnits="userSpaceOnUse" x1="1008" x2="1577" y1="0" y2="0"><stop offset="0" stop-color="#00fff4"/><stop offset="0.053" stop-color="#00fbff"/><stop offset="0.219" stop-color="#00c7ff"/><stop offset="0.325" stop-color="#ada0ff"/><stop offset="0.368" stop-color="#fc8fff"/><stop offset="0.412" stop-color="#ff5fc2"/><stop offset="0.465" stop-color="#ff3b94"/><stop offset="0.544" stop-color="#ff1b6a"/><stop offset="0.667" stop-color="#ff0047"/><stop offset="0.877" stop-color="#ff0029"/><stop offset="1" stop-color="#ff001f"/></linearGradient><linearGradient id="c57" gradientUnits="userSpaceOnUse" x1="1009" x2="1575" y1="0" y2="0"><stop offset="0" stop-color="#00fffb"/><stop offset="0.053" stop-color="#00f4ff"/><stop offset="0.221" stop-color="#02c0ff"/><stop offset="0.336" stop-color="#bd96ff"/><stop offset="0.372" stop-color="#fb89ff"/><stop offset="0.398" stop-color="#ff6bda"/><stop offset="0.442" stop-color="#ff47aa"/><stop offset="0.504" stop-color="#ff2880"/><stop offset="0.602" stop-color="#ff0b5a"/><stop offset="0.673" stop-color="#ff0048"/><stop offset="0.885" stop-color="#ff002a"/><stop offset="1" stop-color="#ff0021"/></linearGradient><linearGradient id="c58" gradientUnits="userSpaceOnUse" x1="1010" x2="1573" y1="0" y2="0"><stop offset="0" stop-color="#00fcff"/><stop offset="0.221" stop-color="#02baff"/><stop offset="0.336" stop-color="#b791ff"/><stop offset="0.372" stop-color="#f484ff"/><stop offset="0.381" stop-color="#ff7efb"/><stop offset="0.416" stop-color="#ff5aca"/><stop offset="0.469" stop-color="#ff379a"/><stop offset="0.549" stop-color="#ff186f"/><stop offset="0.664" stop-color="#ff004d"/><stop offset="0.867" stop-color="#ff002e"/><stop offset="1" stop-color="#f02"/></linearGradient><linearGradient id="c59" gradientUnits="userSpaceOnUse" x1="1010" x2="1571" y1="0" y2="0"><stop offset="0" stop-color="#00f6ff"/><stop offset="0.214" stop-color="#00b7ff"/><stop offset="0.223" stop-color="#03b4ff"/><stop offset="0.339" stop-color="#b58cff"/><stop offset="0.384" stop-color="#ff7bfe"/><stop offset="0.42" stop-color="#ff57cc"/><stop offset="0.473" stop-color="#ff359c"/><stop offset="0.554" stop-color="#ff1771"/><stop offset="0.661" stop-color="#ff0050"/><stop offset="0.857" stop-color="#ff0031"/><stop offset="1" stop-color="#ff0024"/></linearGradient><linearGradient id="c60" gradientUnits="userSpaceOnUse" x1="1011" x2="1569" y1="0" y2="0"><stop offset="0" stop-color="#00f0ff"/><stop offset="0.223" stop-color="#03afff"/><stop offset="0.348" stop-color="#bf84ff"/><stop offset="0.384" stop-color="#f977ff"/><stop offset="0.402" stop-color="#ff66e9"/><stop offset="0.446" stop-color="#ff44b7"/><stop offset="0.509" stop-color="#ff258a"/><stop offset="0.607" stop-color="#ff0961"/><stop offset="0.67" stop-color="#ff0051"/><stop offset="0.866" stop-color="#ff0031"/><stop offset="1" stop-color="#ff0025"/></linearGradient><linearGradient id="c61" gradientUnits="userSpaceOnUse" x1="1012" x2="1567" y1="0" y2="0"><stop offset="0" stop-color="#00eaff"/><stop offset="0.216" stop-color="#00acff"/><stop offset="0.225" stop-color="#06a9ff"/><stop offset="0.351" stop-color="#bf7fff"/><stop offset="0.387" stop-color="#f871ff"/><stop offset="0.396" stop-color="#ff6bf8"/><stop offset="0.432" stop-color="#ff4cca"/><stop offset="0.486" stop-color="#ff2e9c"/><stop offset="0.568" stop-color="#ff1272"/><stop offset="0.667" stop-color="#ff0054"/><stop offset="0.865" stop-color="#f03"/><stop offset="1" stop-color="#ff0027"/></linearGradient><linearGradient id="c62" gradientUnits="userSpaceOnUse" x1="1013" x2="1565" y1="0" y2="0"><stop offset="0" stop-color="#00e4ff"/><stop offset="0.218" stop-color="#00a7ff"/><stop offset="0.245" stop-color="#219eff"/><stop offset="0.373" stop-color="#db73ff"/><stop offset="0.391" stop-color="#f76cff"/><stop offset="0.4" stop-color="#ff66f9"/><stop offset="0.436" stop-color="#ff49cb"/><stop offset="0.491" stop-color="#ff2b9d"/><stop offset="0.573" stop-color="#ff1074"/><stop offset="0.664" stop-color="#ff0057"/><stop offset="0.855" stop-color="#ff0036"/><stop offset="1" stop-color="#ff0028"/></linearGradient><linearGradient id="c63" gradientUnits="userSpaceOnUse" x1="1014" x2="1563" y1="0" y2="0"><stop offset="0" stop-color="#00deff"/><stop offset="0.218" stop-color="#00a2ff"/><stop offset="0.245" stop-color="#2099ff"/><stop offset="0.373" stop-color="#d56fff"/><stop offset="0.4" stop-color="#ff65ff"/><stop offset="0.445" stop-color="#ff42c7"/><stop offset="0.5" stop-color="#ff279c"/><stop offset="0.582" stop-color="#ff0d73"/><stop offset="0.664" stop-color="#ff005a"/><stop offset="0.845" stop-color="#ff0039"/><stop offset="1" stop-color="#ff002a"/></linearGradient><linearGradient id="c64" gradientUnits="userSpaceOnUse" x1="1015" x2="1561" y1="0" y2="0"><stop offset="0" stop-color="#00d9ff"/><stop offset="0.22" stop-color="#009dff"/><stop offset="0.339" stop-color="#9f77ff"/><stop offset="0.404" stop-color="#fe61ff"/><stop offset="0.45" stop-color="#ff3fc8"/><stop offset="0.505" stop-color="#ff249d"/><stop offset="0.587" stop-color="#ff0c75"/><stop offset="0.661" stop-color="#ff005e"/><stop offset="0.844" stop-color="#ff003b"/><stop offset="1" stop-color="#ff002b"/></linearGradient><linearGradient id="c65" gradientUnits="userSpaceOnUse" x1="1016" x2="1559" y1="0" y2="0"><stop offset="0" stop-color="#00d4ff"/><stop offset="0.22" stop-color="#0098ff"/><stop offset="0.339" stop-color="#9c73ff"/><stop offset="0.404" stop-color="#f75dff"/><stop offset="0.413" stop-color="#ff58f9"/><stop offset="0.459" stop-color="#ff39c5"/><stop offset="0.523" stop-color="#ff1d96"/><stop offset="0.615" stop-color="#ff056e"/><stop offset="0.679" stop-color="#ff005c"/><stop offset="0.872" stop-color="#ff003a"/><stop offset="1" stop-color="#ff002d"/></linearGradient><linearGradient id="c66" gradientUnits="userSpaceOnUse" x1="1016" x2="1556" y1="0" y2="0"><stop offset="0" stop-color="#00cfff"/><stop offset="0.222" stop-color="#0094ff"/><stop offset="0.352" stop-color="#a66cff"/><stop offset="0.417" stop-color="#ff56fd"/><stop offset="0.463" stop-color="#ff37c8"/><stop offset="0.528" stop-color="#ff1c99"/><stop offset="0.62" stop-color="#ff0470"/><stop offset="0.722" stop-color="#f05"/><stop offset="0.935" stop-color="#ff0035"/><stop offset="1" stop-color="#ff002e"/></linearGradient><linearGradient id="c67" gradientUnits="userSpaceOnUse" x1="1017" x2="1554" y1="0" y2="0"><stop offset="0" stop-color="#00caff"/><stop offset="0.224" stop-color="#018fff"/><stop offset="0.374" stop-color="#c062ff"/><stop offset="0.421" stop-color="#ff52fe"/><stop offset="0.467" stop-color="#ff34c9"/><stop offset="0.533" stop-color="#ff1a9a"/><stop offset="0.626" stop-color="#ff0371"/><stop offset="0.776" stop-color="#ff004c"/><stop offset="1" stop-color="#ff0030"/></linearGradient><linearGradient id="c68" gradientUnits="userSpaceOnUse" x1="1018" x2="1552" y1="0" y2="0"><stop offset="0" stop-color="#00c5ff"/><stop offset="0.224" stop-color="#018bff"/><stop offset="0.374" stop-color="#bb5eff"/><stop offset="0.421" stop-color="#fa4fff"/><stop offset="0.439" stop-color="#ff44ec"/><stop offset="0.486" stop-color="#ff2abe"/><stop offset="0.561" stop-color="#ff118f"/><stop offset="0.654" stop-color="#ff006b"/><stop offset="0.822" stop-color="#ff0047"/><stop offset="1" stop-color="#ff0032"/></linearGradient><linearGradient id="c69" gradientUnits="userSpaceOnUse" x1="1019" x2="1550" y1="0" y2="0"><stop offset="0" stop-color="#00c0ff"/><stop offset="0.217" stop-color="#0089ff"/><stop offset="0.226" stop-color="#0487ff"/><stop offset="0.377" stop-color="#bb5aff"/><stop offset="0.425" stop-color="#f94bff"/><stop offset="0.443" stop-color="#ff40ed"/><stop offset="0.491" stop-color="#ff28bf"/><stop offset="0.566" stop-color="#ff0f90"/><stop offset="0.651" stop-color="#ff006f"/><stop offset="0.811" stop-color="#ff004b"/><stop offset="1" stop-color="#f03"/></linearGradient><linearGradient id="c70" gradientUnits="userSpaceOnUse" x1="1020" x2="1548" y1="0" y2="0"><stop offset="0" stop-color="#00bcff"/><stop offset="0.217" stop-color="#0086ff"/><stop offset="0.226" stop-color="#0483ff"/><stop offset="0.377" stop-color="#b757ff"/><stop offset="0.434" stop-color="#ff46ff"/><stop offset="0.481" stop-color="#ff2bcc"/><stop offset="0.547" stop-color="#ff149e"/><stop offset="0.642" stop-color="#ff0075"/><stop offset="0.792" stop-color="#ff0050"/><stop offset="1" stop-color="#ff0035"/></linearGradient><linearGradient id="c71" gradientUnits="userSpaceOnUse" x1="1021" x2="1546" y1="0" y2="0"><stop offset="0" stop-color="#00b7ff"/><stop offset="0.219" stop-color="#0081ff"/><stop offset="0.238" stop-color="#107cff"/><stop offset="0.4" stop-color="#ce4eff"/><stop offset="0.438" stop-color="#ff42ff"/><stop offset="0.486" stop-color="#ff29cd"/><stop offset="0.552" stop-color="#ff129f"/><stop offset="0.638" stop-color="#ff0079"/><stop offset="0.781" stop-color="#f05"/><stop offset="1" stop-color="#ff0037"/></linearGradient><linearGradient id="c72" gradientUnits="userSpaceOnUse" x1="1022" x2="1544" y1="0" y2="0"><stop offset="0" stop-color="#00b3ff"/><stop offset="0.221" stop-color="#007dff"/><stop offset="0.346" stop-color="#895bff"/><stop offset="0.442" stop-color="#fe3eff"/><stop offset="0.5" stop-color="#ff22c6"/><stop offset="0.577" stop-color="#ff0b96"/><stop offset="0.644" stop-color="#ff007b"/><stop offset="0.788" stop-color="#ff0056"/><stop offset="1" stop-color="#ff0038"/></linearGradient><linearGradient id="c73" gradientUnits="userSpaceOnUse" x1="1023" x2="1542" y1="0" y2="0"><stop offset="0" stop-color="#00afff"/><stop offset="0.221" stop-color="#007aff"/><stop offset="0.346" stop-color="#8658ff"/><stop offset="0.442" stop-color="#f83cff"/><stop offset="0.452" stop-color="#ff38fa"/><stop offset="0.5" stop-color="#ff22cb"/><stop offset="0.577" stop-color="#ff0a9a"/><stop offset="0.644" stop-color="#ff007e"/><stop offset="0.788" stop-color="#ff0058"/><stop offset="1" stop-color="#ff003a"/></linearGradient><linearGradient id="c74" gradientUnits="userSpaceOnUse" x1="1024" x2="1540" y1="0" y2="0"><stop offset="0" stop-color="#00abff"/><stop offset="0.223" stop-color="#0076ff"/><stop offset="0.388" stop-color="#b34aff"/><stop offset="0.447" stop-color="#f839ff"/><stop offset="0.456" stop-color="#ff35fb"/><stop offset="0.505" stop-color="#ff1fcc"/><stop offset="0.583" stop-color="#ff089b"/><stop offset="0.641" stop-color="#ff0082"/><stop offset="0.786" stop-color="#ff005b"/><stop offset="1" stop-color="#ff003c"/></linearGradient><linearGradient id="c75" gradientUnits="userSpaceOnUse" x1="1025" x2="1538" y1="0" y2="0"><stop offset="0" stop-color="#00a7ff"/><stop offset="0.223" stop-color="#0073ff"/><stop offset="0.398" stop-color="#ba45ff"/><stop offset="0.456" stop-color="#fd34ff"/><stop offset="0.515" stop-color="#ff1bc9"/><stop offset="0.592" stop-color="#ff069a"/><stop offset="0.65" stop-color="#ff0082"/><stop offset="0.796" stop-color="#ff005b"/><stop offset="1" stop-color="#ff003d"/></linearGradient><linearGradient id="c76" gradientUnits="userSpaceOnUse" x1="1026" x2="1535" y1="0" y2="0"><stop offset="0" stop-color="#00a3ff"/><stop offset="0.225" stop-color="#0270ff"/><stop offset="0.402" stop-color="#b942ff"/><stop offset="0.461" stop-color="#fc31ff"/><stop offset="0.529" stop-color="#ff16c3"/><stop offset="0.608" stop-color="#ff0297"/><stop offset="0.725" stop-color="#ff006e"/><stop offset="0.912" stop-color="#ff004a"/><stop offset="1" stop-color="#ff003f"/></linearGradient><linearGradient id="c77" gradientUnits="userSpaceOnUse" x1="1027" x2="1533" y1="0" y2="0"><stop offset="0" stop-color="#009fff"/><stop offset="0.218" stop-color="#006eff"/><stop offset="0.238" stop-color="#0d6aff"/><stop offset="0.416" stop-color="#c43cff"/><stop offset="0.465" stop-color="#fb2eff"/><stop offset="0.515" stop-color="#ff1ad3"/><stop offset="0.594" stop-color="#ff05a1"/><stop offset="0.673" stop-color="#ff0081"/><stop offset="0.832" stop-color="#ff0059"/><stop offset="1" stop-color="#ff0041"/></linearGradient><linearGradient id="c78" gradientUnits="userSpaceOnUse" x1="1028" x2="1531" y1="0" y2="0"><stop offset="0" stop-color="#009cff"/><stop offset="0.218" stop-color="#006bff"/><stop offset="0.238" stop-color="#0d67ff"/><stop offset="0.426" stop-color="#cb37ff"/><stop offset="0.475" stop-color="#ff29fd"/><stop offset="0.535" stop-color="#ff13c9"/><stop offset="0.614" stop-color="#ff009b"/><stop offset="0.733" stop-color="#ff0072"/><stop offset="0.921" stop-color="#ff004d"/><stop offset="1" stop-color="#ff0043"/></linearGradient><linearGradient id="c79" gradientUnits="userSpaceOnUse" x1="1029" x2="1529" y1="0" y2="0"><stop offset="0" stop-color="#0098ff"/><stop offset="0.22" stop-color="#0068ff"/><stop offset="0.26" stop-color="#225fff"/><stop offset="0.45" stop-color="#e02eff"/><stop offset="0.48" stop-color="#ff26fe"/><stop offset="0.54" stop-color="#ff11c9"/><stop offset="0.62" stop-color="#ff009c"/><stop offset="0.74" stop-color="#ff0073"/><stop offset="0.93" stop-color="#ff004e"/><stop offset="1" stop-color="#ff0045"/></linearGradient><linearGradient id="c80" gradientUnits="userSpaceOnUse" x1="1030" x2="1527" y1="0" y2="0"><stop offset="0" stop-color="#0094ff"/><stop offset="0.222" stop-color="#0065ff"/><stop offset="0.384" stop-color="#983eff"/><stop offset="0.485" stop-color="#ff23fe"/><stop offset="0.545" stop-color="#ff0fca"/><stop offset="0.626" stop-color="#ff009d"/><stop offset="0.747" stop-color="#ff0074"/><stop offset="0.939" stop-color="#ff004f"/><stop offset="1" stop-color="#ff0047"/></linearGradient><linearGradient id="c81" gradientUnits="userSpaceOnUse" x1="1031" x2="1525" y1="0" y2="0"><stop offset="0" stop-color="#0091ff"/><stop offset="0.222" stop-color="#0062ff"/><stop offset="0.384" stop-color="#943cff"/><stop offset="0.485" stop-color="#fa22ff"/><stop offset="0.505" stop-color="#ff1bf0"/><stop offset="0.576" stop-color="#ff07bb"/><stop offset="0.626" stop-color="#ff00a1"/><stop offset="0.747" stop-color="#ff0076"/><stop offset="0.939" stop-color="#ff0051"/><stop offset="1" stop-color="#ff0049"/></linearGradient><linearGradient id="c82" gradientUnits="userSpaceOnUse" x1="1032" x2="1523" y1="0" y2="0"><stop offset="0" stop-color="#008eff"/><stop offset="0.224" stop-color="#005fff"/><stop offset="0.429" stop-color="#bd2fff"/><stop offset="0.49" stop-color="#fa1fff"/><stop offset="0.51" stop-color="#ff18f0"/><stop offset="0.582" stop-color="#ff05bc"/><stop offset="0.653" stop-color="#f09"/><stop offset="0.786" stop-color="#ff006f"/><stop offset="1" stop-color="#ff004b"/></linearGradient><linearGradient id="c83" gradientUnits="userSpaceOnUse" x1="1033" x2="1521" y1="0" y2="0"><stop offset="0" stop-color="#008bff"/><stop offset="0.224" stop-color="#005dff"/><stop offset="0.429" stop-color="#b92dff"/><stop offset="0.5" stop-color="#ff1bff"/><stop offset="0.561" stop-color="#ff09cd"/><stop offset="0.622" stop-color="#f0a"/><stop offset="0.735" stop-color="#ff0080"/><stop offset="0.908" stop-color="#ff005a"/><stop offset="1" stop-color="#ff004c"/></linearGradient><linearGradient id="c84" gradientUnits="userSpaceOnUse" x1="1034" x2="1519" y1="0" y2="0"><stop offset="0" stop-color="#0087ff"/><stop offset="0.227" stop-color="#025aff"/><stop offset="0.433" stop-color="#b92bff"/><stop offset="0.505" stop-color="#fe19ff"/><stop offset="0.577" stop-color="#ff05c7"/><stop offset="0.649" stop-color="#ff00a1"/><stop offset="0.773" stop-color="#ff0078"/><stop offset="0.969" stop-color="#ff0053"/><stop offset="1" stop-color="#ff004e"/></linearGradient><linearGradient id="c85" gradientUnits="userSpaceOnUse" x1="1035" x2="1517" y1="0" y2="0"><stop offset="0" stop-color="#0084ff"/><stop offset="0.219" stop-color="#0059ff"/><stop offset="0.24" stop-color="#0d55ff"/><stop offset="0.448" stop-color="#c325ff"/><stop offset="0.51" stop-color="#fe16ff"/><stop offset="0.583" stop-color="#ff03c7"/><stop offset="0.677" stop-color="#ff009a"/><stop offset="0.823" stop-color="#ff006f"/><stop offset="1" stop-color="#ff0050"/></linearGradient><linearGradient id="c86" gradientUnits="userSpaceOnUse" x1="1036" x2="1514" y1="0" y2="0"><stop offset="0" stop-color="#0081ff"/><stop offset="0.219" stop-color="#0057ff"/><stop offset="0.24" stop-color="#0c52ff"/><stop offset="0.458" stop-color="#c822ff"/><stop offset="0.521" stop-color="#ff12fc"/><stop offset="0.594" stop-color="#ff00c6"/><stop offset="0.688" stop-color="#ff009a"/><stop offset="0.833" stop-color="#ff006f"/><stop offset="1" stop-color="#ff0053"/></linearGradient><linearGradient id="c87" gradientUnits="userSpaceOnUse" x1="1037" x2="1512" y1="0" y2="0"><stop offset="0" stop-color="#007eff"/><stop offset="0.221" stop-color="#0054ff"/><stop offset="0.347" stop-color="#6339ff"/><stop offset="0.526" stop-color="#ff10fd"/><stop offset="0.6" stop-color="#ff00c7"/><stop offset="0.705" stop-color="#ff0096"/><stop offset="0.853" stop-color="#ff006e"/><stop offset="1" stop-color="#f05"/></linearGradient><linearGradient id="c88" gradientUnits="userSpaceOnUse" x1="1038" x2="1510" y1="0" y2="0"><stop offset="0" stop-color="#007cff"/><stop offset="0.223" stop-color="#0051ff"/><stop offset="0.426" stop-color="#a326ff"/><stop offset="0.532" stop-color="#ff0efd"/><stop offset="0.596" stop-color="#ff00ce"/><stop offset="0.691" stop-color="#ff009f"/><stop offset="0.83" stop-color="#ff0075"/><stop offset="1" stop-color="#ff0057"/></linearGradient><linearGradient id="c89" gradientUnits="userSpaceOnUse" x1="1039" x2="1508" y1="0" y2="0"><stop offset="0" stop-color="#0079ff"/><stop offset="0.223" stop-color="#004fff"/><stop offset="0.436" stop-color="#a923ff"/><stop offset="0.532" stop-color="#fc0dff"/><stop offset="0.596" stop-color="#ff00d2"/><stop offset="0.691" stop-color="#ff00a2"/><stop offset="0.83" stop-color="#ff0078"/><stop offset="1" stop-color="#ff0059"/></linearGradient><linearGradient id="c90" gradientUnits="userSpaceOnUse" x1="1040" x2="1506" y1="0" y2="0"><stop offset="0" stop-color="#0076ff"/><stop offset="0.226" stop-color="#014dff"/><stop offset="0.462" stop-color="#bb1cff"/><stop offset="0.538" stop-color="#fc0bff"/><stop offset="0.602" stop-color="#ff00d2"/><stop offset="0.699" stop-color="#ff00a3"/><stop offset="0.839" stop-color="#ff0079"/><stop offset="1" stop-color="#ff005b"/></linearGradient><linearGradient id="c91" gradientUnits="userSpaceOnUse" x1="1041" x2="1504" y1="0" y2="0"><stop offset="0" stop-color="#0073ff"/><stop offset="0.226" stop-color="#014bff"/><stop offset="0.462" stop-color="#b71aff"/><stop offset="0.548" stop-color="#ff07fe"/><stop offset="0.602" stop-color="#ff00d7"/><stop offset="0.699" stop-color="#ff00a6"/><stop offset="0.839" stop-color="#ff007b"/><stop offset="1" stop-color="#ff005d"/></linearGradient><linearGradient id="c92" gradientUnits="userSpaceOnUse" x1="1042" x2="1502" y1="0" y2="0"><stop offset="0" stop-color="#0071ff"/><stop offset="0.228" stop-color="#0248ff"/><stop offset="0.478" stop-color="#c116ff"/><stop offset="0.554" stop-color="#ff05fe"/><stop offset="0.609" stop-color="#ff00d7"/><stop offset="0.707" stop-color="#ff00a7"/><stop offset="0.848" stop-color="#ff007c"/><stop offset="1" stop-color="#ff005f"/></linearGradient><linearGradient id="c93" gradientUnits="userSpaceOnUse" x1="1043" x2="1500" y1="0" y2="0"><stop offset="0" stop-color="#006eff"/><stop offset="0.22" stop-color="#0048ff"/><stop offset="0.264" stop-color="#1b40ff"/><stop offset="0.505" stop-color="#d30fff"/><stop offset="0.56" stop-color="#ff03fe"/><stop offset="0.637" stop-color="#ff00cb"/><stop offset="0.747" stop-color="#ff009b"/><stop offset="0.912" stop-color="#ff0071"/><stop offset="1" stop-color="#ff0062"/></linearGradient><linearGradient id="c94" gradientUnits="userSpaceOnUse" x1="1044" x2="1498" y1="0" y2="0"><stop offset="0" stop-color="#006cff"/><stop offset="0.22" stop-color="#0046ff"/><stop offset="0.264" stop-color="#1b3eff"/><stop offset="0.516" stop-color="#d70cff"/><stop offset="0.56" stop-color="#fa02ff"/><stop offset="0.582" stop-color="#ff00f2"/><stop offset="0.67" stop-color="#ff00be"/><stop offset="0.791" stop-color="#ff0091"/><stop offset="0.978" stop-color="#ff0067"/><stop offset="1" stop-color="#ff0064"/></linearGradient><linearGradient id="c95" gradientUnits="userSpaceOnUse" x1="1046" x2="1496" y1="0" y2="0"><stop offset="0" stop-color="#0069ff"/><stop offset="0.222" stop-color="#0043ff"/><stop offset="0.467" stop-color="#ae15ff"/><stop offset="0.567" stop-color="#fb00ff"/><stop offset="0.611" stop-color="#ff00e3"/><stop offset="0.711" stop-color="#ff00b0"/><stop offset="0.856" stop-color="#ff0082"/><stop offset="1" stop-color="#f06"/></linearGradient><linearGradient id="c96" gradientUnits="userSpaceOnUse" x1="1047" x2="1494" y1="0" y2="0"><stop offset="0" stop-color="#0067ff"/><stop offset="0.225" stop-color="#0141ff"/><stop offset="0.494" stop-color="#bf0eff"/><stop offset="0.573" stop-color="#fb00ff"/><stop offset="0.618" stop-color="#ff00e3"/><stop offset="0.719" stop-color="#ff00b0"/><stop offset="0.865" stop-color="#ff0083"/><stop offset="1" stop-color="#ff0068"/></linearGradient><linearGradient id="c97" gradientUnits="userSpaceOnUse" x1="1048" x2="1491" y1="0" y2="0"><stop offset="0" stop-color="#0064ff"/><stop offset="0.225" stop-color="#003fff"/><stop offset="0.494" stop-color="#ba0eff"/><stop offset="0.573" stop-color="#f500ff"/><stop offset="0.584" stop-color="#fe00ff"/><stop offset="0.674" stop-color="#ff00c9"/><stop offset="0.798" stop-color="#f09"/><stop offset="0.978" stop-color="#ff006f"/><stop offset="1" stop-color="#ff006b"/></linearGradient><linearGradient id="c98" gradientUnits="userSpaceOnUse" x1="1049" x2="1489" y1="0" y2="0"><stop offset="0" stop-color="#0062ff"/><stop offset="0.227" stop-color="#023dff"/><stop offset="0.5" stop-color="#bb0cff"/><stop offset="0.58" stop-color="#f500ff"/><stop offset="0.591" stop-color="#fe00ff"/><stop offset="0.682" stop-color="#ff00c9"/><stop offset="0.807" stop-color="#f09"/><stop offset="0.989" stop-color="#ff006f"/><stop offset="1" stop-color="#ff006d"/></linearGradient><linearGradient id="c99" gradientUnits="userSpaceOnUse" x1="1050" x2="1487" y1="0" y2="0"><stop offset="0" stop-color="#0060ff"/><stop offset="0.218" stop-color="#003dff"/><stop offset="0.276" stop-color="#2133ff"/><stop offset="0.552" stop-color="#dc01ff"/><stop offset="0.598" stop-color="#fe00ff"/><stop offset="0.69" stop-color="#ff00c9"/><stop offset="0.816" stop-color="#f09"/><stop offset="1" stop-color="#ff0070"/></linearGradient><linearGradient id="c100" gradientUnits="userSpaceOnUse" x1="1051" x2="1485" y1="0" y2="0"><stop offset="0" stop-color="#005eff"/><stop offset="0.218" stop-color="#003bff"/><stop offset="0.276" stop-color="#2032ff"/><stop offset="0.552" stop-color="#d800ff"/><stop offset="0.609" stop-color="#ff00fd"/><stop offset="0.701" stop-color="#ff00c8"/><stop offset="0.828" stop-color="#f09"/><stop offset="1" stop-color="#ff0072"/></linearGradient><linearGradient id="c101" gradientUnits="userSpaceOnUse" x1="1052" x2="1483" y1="0" y2="0"><stop offset="0" stop-color="#005bff"/><stop offset="0.221" stop-color="#0039ff"/><stop offset="0.453" stop-color="#9112ff"/><stop offset="0.57" stop-color="#e000ff"/><stop offset="0.616" stop-color="#ff00fd"/><stop offset="0.709" stop-color="#ff00c8"/><stop offset="0.837" stop-color="#ff009a"/><stop offset="1" stop-color="#ff0075"/></linearGradient><linearGradient id="c102" gradientUnits="userSpaceOnUse" x1="1054" x2="1481" y1="0" y2="0"><stop offset="0" stop-color="#0059ff"/><stop offset="0.224" stop-color="#0137ff"/><stop offset="0.518" stop-color="#ba05ff"/><stop offset="0.6" stop-color="#f200ff"/><stop offset="0.624" stop-color="#ff00fc"/><stop offset="0.718" stop-color="#ff00c8"/><stop offset="0.847" stop-color="#ff009a"/><stop offset="1" stop-color="#f07"/></linearGradient><linearGradient id="c103" gradientUnits="userSpaceOnUse" x1="1055" x2="1479" y1="0" y2="0"><stop offset="0" stop-color="#0057ff"/><stop offset="0.224" stop-color="#0135ff"/><stop offset="0.529" stop-color="#be02ff"/><stop offset="0.624" stop-color="#fd00ff"/><stop offset="0.729" stop-color="#ff00c7"/><stop offset="0.871" stop-color="#ff0096"/><stop offset="1" stop-color="#ff007a"/></linearGradient><linearGradient id="c104" gradientUnits="userSpaceOnUse" x1="1056" x2="1477" y1="0" y2="0"><stop offset="0" stop-color="#05f"/><stop offset="0.226" stop-color="#0233ff"/><stop offset="0.536" stop-color="#be00ff"/><stop offset="0.631" stop-color="#fd00ff"/><stop offset="0.738" stop-color="#ff00c7"/><stop offset="0.881" stop-color="#ff0097"/><stop offset="1" stop-color="#ff007c"/></linearGradient><linearGradient id="c105" gradientUnits="userSpaceOnUse" x1="1057" x2="1475" y1="0" y2="0"><stop offset="0" stop-color="#0053ff"/><stop offset="0.226" stop-color="#0232ff"/><stop offset="0.536" stop-color="#b0f"/><stop offset="0.643" stop-color="#ff00fe"/><stop offset="0.738" stop-color="#ff00cb"/><stop offset="0.881" stop-color="#ff009a"/><stop offset="1" stop-color="#ff007f"/></linearGradient><linearGradient id="c106" gradientUnits="userSpaceOnUse" x1="1058" x2="1473" y1="0" y2="0"><stop offset="0" stop-color="#0051ff"/><stop offset="0.217" stop-color="#0032ff"/><stop offset="0.325" stop-color="#3a21ff"/><stop offset="0.542" stop-color="#b0f"/><stop offset="0.651" stop-color="#ff00fd"/><stop offset="0.747" stop-color="#ff00cb"/><stop offset="0.892" stop-color="#ff009a"/><stop offset="1" stop-color="#ff0082"/></linearGradient><linearGradient id="c107" gradientUnits="userSpaceOnUse" x1="1060" x2="1470" y1="0" y2="0"><stop offset="0" stop-color="#004fff"/><stop offset="0.22" stop-color="#0030ff"/><stop offset="0.512" stop-color="#a602ff"/><stop offset="0.659" stop-color="#ff00fe"/><stop offset="0.756" stop-color="#ff00cb"/><stop offset="0.902" stop-color="#ff009b"/><stop offset="1" stop-color="#ff0085"/></linearGradient><linearGradient id="c108" gradientUnits="userSpaceOnUse" x1="1061" x2="1468" y1="0" y2="0"><stop offset="0" stop-color="#004dff"/><stop offset="0.222" stop-color="#002eff"/><stop offset="0.543" stop-color="#b500ff"/><stop offset="0.667" stop-color="#ff00fe"/><stop offset="0.765" stop-color="#ff00cb"/><stop offset="0.914" stop-color="#ff009b"/><stop offset="1" stop-color="#ff0087"/></linearGradient><linearGradient id="c109" gradientUnits="userSpaceOnUse" x1="1062" x2="1466" y1="0" y2="0"><stop offset="0" stop-color="#004bff"/><stop offset="0.222" stop-color="#002dff"/><stop offset="0.531" stop-color="#a0f"/><stop offset="0.667" stop-color="#fc00ff"/><stop offset="0.778" stop-color="#ff00ca"/><stop offset="0.926" stop-color="#ff009b"/><stop offset="1" stop-color="#ff008a"/></linearGradient><linearGradient id="c110" gradientUnits="userSpaceOnUse" x1="1063" x2="1464" y1="0" y2="0"><stop offset="0" stop-color="#0049ff"/><stop offset="0.225" stop-color="#022bff"/><stop offset="0.537" stop-color="#ab00ff"/><stop offset="0.675" stop-color="#fc00ff"/><stop offset="0.812" stop-color="#ff00c1"/><stop offset="0.975" stop-color="#ff0092"/><stop offset="1" stop-color="#ff008d"/></linearGradient><linearGradient id="c111" gradientUnits="userSpaceOnUse" x1="1065" x2="1462" y1="0" y2="0"><stop offset="0" stop-color="#0047ff"/><stop offset="0.215" stop-color="#002bff"/><stop offset="0.481" stop-color="#8904ff"/><stop offset="0.595" stop-color="#c900ff"/><stop offset="0.684" stop-color="#fd00ff"/><stop offset="0.81" stop-color="#ff00c5"/><stop offset="0.975" stop-color="#ff0096"/><stop offset="1" stop-color="#ff0090"/></linearGradient><linearGradient id="c112" gradientUnits="userSpaceOnUse" x1="1066" x2="1460" y1="0" y2="0"><stop offset="0" stop-color="#0045ff"/><stop offset="0.215" stop-color="#0029ff"/><stop offset="0.494" stop-color="#8e02ff"/><stop offset="0.696" stop-color="#f0f"/><stop offset="0.81" stop-color="#ff00c9"/><stop offset="0.975" stop-color="#f09"/><stop offset="1" stop-color="#ff0093"/></linearGradient><linearGradient id="c113" gradientUnits="userSpaceOnUse" x1="1067" x2="1458" y1="0" y2="0"><stop offset="0" stop-color="#04f"/><stop offset="0.218" stop-color="#0028ff"/><stop offset="0.526" stop-color="#9c00ff"/><stop offset="0.705" stop-color="#ff00fe"/><stop offset="0.821" stop-color="#ff00c9"/><stop offset="0.987" stop-color="#f09"/><stop offset="1" stop-color="#ff0096"/></linearGradient><linearGradient id="c114" gradientUnits="userSpaceOnUse" x1="1068" x2="1456" y1="0" y2="0"><stop offset="0" stop-color="#0042ff"/><stop offset="0.218" stop-color="#0026ff"/><stop offset="0.513" stop-color="#9300ff"/><stop offset="0.718" stop-color="#ff00fc"/><stop offset="0.833" stop-color="#ff00c8"/><stop offset="1" stop-color="#f09"/></linearGradient><linearGradient id="c115" gradientUnits="userSpaceOnUse" x1="1070" x2="1454" y1="0" y2="0"><stop offset="0" stop-color="#0040ff"/><stop offset="0.221" stop-color="#0125ff"/><stop offset="0.506" stop-color="#8d00ff"/><stop offset="0.714" stop-color="#fc00ff"/><stop offset="0.87" stop-color="#ff00bf"/><stop offset="1" stop-color="#ff009c"/></linearGradient><linearGradient id="c116" gradientUnits="userSpaceOnUse" x1="1071" x2="1452" y1="0" y2="0"><stop offset="0" stop-color="#003fff"/><stop offset="0.224" stop-color="#0323ff"/><stop offset="0.513" stop-color="#8e00ff"/><stop offset="0.724" stop-color="#fc00ff"/><stop offset="0.868" stop-color="#ff00c4"/><stop offset="1" stop-color="#ff009f"/></linearGradient><linearGradient id="c117" gradientUnits="userSpaceOnUse" x1="1072" x2="1449" y1="0" y2="0"><stop offset="0" stop-color="#003dff"/><stop offset="0.213" stop-color="#0023ff"/><stop offset="0.507" stop-color="#80f"/><stop offset="0.733" stop-color="#fc00ff"/><stop offset="0.84" stop-color="#ff00d2"/><stop offset="1" stop-color="#ff00a3"/></linearGradient><linearGradient id="c118" gradientUnits="userSpaceOnUse" x1="1074" x2="1447" y1="0" y2="0"><stop offset="0" stop-color="#003bff"/><stop offset="0.213" stop-color="#02f"/><stop offset="0.493" stop-color="#8000ff"/><stop offset="0.747" stop-color="#fe00ff"/><stop offset="0.88" stop-color="#ff00c8"/><stop offset="1" stop-color="#ff00a6"/></linearGradient><linearGradient id="c119" gradientUnits="userSpaceOnUse" x1="1075" x2="1445" y1="0" y2="0"><stop offset="0" stop-color="#003aff"/><stop offset="0.216" stop-color="#0020ff"/><stop offset="0.5" stop-color="#8000ff"/><stop offset="0.757" stop-color="#f0f"/><stop offset="0.892" stop-color="#ff00c8"/><stop offset="1" stop-color="#ff00a9"/></linearGradient><linearGradient id="c120" gradientUnits="userSpaceOnUse" x1="1076" x2="1443" y1="0" y2="0"><stop offset="0" stop-color="#0038ff"/><stop offset="0.219" stop-color="#011fff"/><stop offset="0.493" stop-color="#7b00ff"/><stop offset="0.767" stop-color="#f0f"/><stop offset="0.89" stop-color="#f0c"/><stop offset="1" stop-color="#ff00ad"/></linearGradient><linearGradient id="c121" gradientUnits="userSpaceOnUse" x1="1077" x2="1441" y1="0" y2="0"><stop offset="0" stop-color="#0037ff"/><stop offset="0.219" stop-color="#011eff"/><stop offset="0.493" stop-color="#7900ff"/><stop offset="0.781" stop-color="#ff00fd"/><stop offset="0.918" stop-color="#ff00c7"/><stop offset="1" stop-color="#ff00b0"/></linearGradient><linearGradient id="c122" gradientUnits="userSpaceOnUse" x1="1079" x2="1439" y1="0" y2="0"><stop offset="0" stop-color="#0035ff"/><stop offset="0.208" stop-color="#001eff"/><stop offset="0.486" stop-color="#7400ff"/><stop offset="0.792" stop-color="#ff00fc"/><stop offset="0.931" stop-color="#ff00c7"/><stop offset="1" stop-color="#ff00b3"/></linearGradient><linearGradient id="c123" gradientUnits="userSpaceOnUse" x1="1080" x2="1437" y1="0" y2="0"><stop offset="0" stop-color="#03f"/><stop offset="0.211" stop-color="#001cff"/><stop offset="0.479" stop-color="#6f00ff"/><stop offset="0.789" stop-color="#fc00ff"/><stop offset="0.958" stop-color="#ff00c2"/><stop offset="1" stop-color="#ff00b7"/></linearGradient><linearGradient id="c124" gradientUnits="userSpaceOnUse" x1="1081" x2="1435" y1="0" y2="0"><stop offset="0" stop-color="#0032ff"/><stop offset="0.211" stop-color="#001bff"/><stop offset="0.479" stop-color="#6d00ff"/><stop offset="0.803" stop-color="#fe00ff"/><stop offset="0.958" stop-color="#ff00c6"/><stop offset="1" stop-color="#ff00ba"/></linearGradient><linearGradient id="c125" gradientUnits="userSpaceOnUse" x1="1083" x2="1433" y1="0" y2="0"><stop offset="0" stop-color="#0030ff"/><stop offset="0.214" stop-color="#011aff"/><stop offset="0.471" stop-color="#6900ff"/><stop offset="0.814" stop-color="#f0f"/><stop offset="0.957" stop-color="#ff00ca"/><stop offset="1" stop-color="#ff00be"/></linearGradient><linearGradient id="c126" gradientUnits="userSpaceOnUse" x1="1084" x2="1431" y1="0" y2="0"><stop offset="0" stop-color="#002fff"/><stop offset="0.217" stop-color="#0218ff"/><stop offset="0.464" stop-color="#6400ff"/><stop offset="0.826" stop-color="#f0f"/><stop offset="0.971" stop-color="#ff00ca"/><stop offset="1" stop-color="#ff00c2"/></linearGradient><linearGradient id="c127" gradientUnits="userSpaceOnUse" x1="1085" x2="1428" y1="0" y2="0"><stop offset="0" stop-color="#002eff"/><stop offset="0.217" stop-color="#0217ff"/><stop offset="0.464" stop-color="#6100ff"/><stop offset="0.841" stop-color="#ff00fe"/><stop offset="0.986" stop-color="#ff00ca"/><stop offset="1" stop-color="#ff00c6"/></linearGradient><linearGradient id="c128" gradientUnits="userSpaceOnUse" x1="1087" x2="1426" y1="0" y2="0"><stop offset="0" stop-color="#002cff"/><stop offset="0.206" stop-color="#0017ff"/><stop offset="0.456" stop-color="#5d00ff"/><stop offset="0.853" stop-color="#ff00fd"/><stop offset="1" stop-color="#ff00ca"/></linearGradient><linearGradient id="c129" gradientUnits="userSpaceOnUse" x1="1088" x2="1424" y1="0" y2="0"><stop offset="0" stop-color="#002bff"/><stop offset="0.209" stop-color="#0016ff"/><stop offset="0.448" stop-color="#5800ff"/><stop offset="0.866" stop-color="#ff00fd"/><stop offset="1" stop-color="#ff00ce"/></linearGradient><linearGradient id="c130" gradientUnits="userSpaceOnUse" x1="1089" x2="1422" y1="0" y2="0"><stop offset="0" stop-color="#0029ff"/><stop offset="0.209" stop-color="#0015ff"/><stop offset="0.448" stop-color="#5700ff"/><stop offset="0.866" stop-color="#fd00ff"/><stop offset="1" stop-color="#ff00d2"/></linearGradient><linearGradient id="c131" gradientUnits="userSpaceOnUse" x1="1091" x2="1420" y1="0" y2="0"><stop offset="0" stop-color="#0028ff"/><stop offset="0.212" stop-color="#0214ff"/><stop offset="0.439" stop-color="#5300ff"/><stop offset="0.879" stop-color="#fe00ff"/><stop offset="1" stop-color="#ff00d6"/></linearGradient><linearGradient id="c132" gradientUnits="userSpaceOnUse" x1="1092" x2="1418" y1="0" y2="0"><stop offset="0" stop-color="#0027ff"/><stop offset="0.215" stop-color="#0312ff"/><stop offset="0.431" stop-color="#4e00ff"/><stop offset="0.892" stop-color="#fe00ff"/><stop offset="1" stop-color="#ff00da"/></linearGradient><linearGradient id="c133" gradientUnits="userSpaceOnUse" x1="1093" x2="1416" y1="0" y2="0"><stop offset="0" stop-color="#0026ff"/><stop offset="0.215" stop-color="#0312ff"/><stop offset="0.431" stop-color="#4d00ff"/><stop offset="0.908" stop-color="#ff00fe"/><stop offset="1" stop-color="#ff00de"/></linearGradient><linearGradient id="c134" gradientUnits="userSpaceOnUse" x1="1095" x2="1414" y1="0" y2="0"><stop offset="0" stop-color="#0024ff"/><stop offset="0.203" stop-color="#0012ff"/><stop offset="0.422" stop-color="#4900ff"/><stop offset="0.922" stop-color="#ff00fd"/><stop offset="1" stop-color="#ff00e2"/></linearGradient><linearGradient id="c135" gradientUnits="userSpaceOnUse" x1="1096" x2="1412" y1="0" y2="0"><stop offset="0" stop-color="#0023ff"/><stop offset="0.206" stop-color="#0110ff"/><stop offset="0.413" stop-color="#4500ff"/><stop offset="0.937" stop-color="#ff00fd"/><stop offset="1" stop-color="#ff00e7"/></linearGradient><linearGradient id="c136" gradientUnits="userSpaceOnUse" x1="1097" x2="1410" y1="0" y2="0"><stop offset="0" stop-color="#02f"/><stop offset="0.206" stop-color="#0110ff"/><stop offset="0.413" stop-color="#40f"/><stop offset="0.937" stop-color="#fd00ff"/><stop offset="1" stop-color="#ff00eb"/></linearGradient><linearGradient id="c137" gradientUnits="userSpaceOnUse" x1="1099" x2="1408" y1="0" y2="0"><stop offset="0" stop-color="#0020ff"/><stop offset="0.21" stop-color="#030eff"/><stop offset="0.403" stop-color="#4000ff"/><stop offset="0.952" stop-color="#fe00ff"/><stop offset="1" stop-color="#ff00f0"/></linearGradient><linearGradient id="c138" gradientUnits="userSpaceOnUse" x1="1100" x2="1405" y1="0" y2="0"><stop offset="0" stop-color="#001fff"/><stop offset="0.197" stop-color="#000fff"/><stop offset="0.393" stop-color="#3c00ff"/><stop offset="0.951" stop-color="#f700ff"/><stop offset="0.984" stop-color="#ff00fb"/><stop offset="1" stop-color="#ff00f5"/></linearGradient><linearGradient id="c139" gradientUnits="userSpaceOnUse" x1="1102" x2="1403" y1="0" y2="0"><stop offset="0" stop-color="#001eff"/><stop offset="0.2" stop-color="#000dff"/><stop offset="0.4" stop-color="#3d00ff"/><stop offset="0.967" stop-color="#f800ff"/><stop offset="1" stop-color="#ff00fa"/></linearGradient><linearGradient id="c140" gradientUnits="userSpaceOnUse" x1="1103" x2="1401" y1="0" y2="0"><stop offset="0" stop-color="#001dff"/><stop offset="0.2" stop-color="#000cff"/><stop offset="0.383" stop-color="#3700ff"/><stop offset="0.967" stop-color="#f400ff"/><stop offset="1" stop-color="#f0f"/></linearGradient><linearGradient id="c141" gradientUnits="userSpaceOnUse" x1="1105" x2="1399" y1="0" y2="0"><stop offset="0" stop-color="#001bff"/><stop offset="0.203" stop-color="#020bff"/><stop offset="0.373" stop-color="#3400ff"/><stop offset="0.966" stop-color="#ef00ff"/><stop offset="1" stop-color="#fa00ff"/></linearGradient><linearGradient id="c142" gradientUnits="userSpaceOnUse" x1="1106" x2="1397" y1="0" y2="0"><stop offset="0" stop-color="#001aff"/><stop offset="0.207" stop-color="#030aff"/><stop offset="0.379" stop-color="#3500ff"/><stop offset="0.983" stop-color="#f000ff"/><stop offset="1" stop-color="#f600ff"/></linearGradient><linearGradient id="c143" gradientUnits="userSpaceOnUse" x1="1107" x2="1395" y1="0" y2="0"><stop offset="0" stop-color="#0019ff"/><stop offset="0.207" stop-color="#0309ff"/><stop offset="0.379" stop-color="#3400ff"/><stop offset="1" stop-color="#f100ff"/></linearGradient><linearGradient id="c144" gradientUnits="userSpaceOnUse" x1="1109" x2="1393" y1="0" y2="0"><stop offset="0" stop-color="#0018ff"/><stop offset="0.193" stop-color="#0009ff"/><stop offset="0.368" stop-color="#3000ff"/><stop offset="1" stop-color="#ed00ff"/></linearGradient><linearGradient id="c145" gradientUnits="userSpaceOnUse" x1="1110" x2="1391" y1="0" y2="0"><stop offset="0" stop-color="#0017ff"/><stop offset="0.196" stop-color="#0108ff"/><stop offset="0.357" stop-color="#2d00ff"/><stop offset="1" stop-color="#e800ff"/></linearGradient><linearGradient id="c146" gradientUnits="userSpaceOnUse" x1="1112" x2="1389" y1="0" y2="0"><stop offset="0" stop-color="#0016ff"/><stop offset="0.2" stop-color="#0307ff"/><stop offset="0.364" stop-color="#2e00ff"/><stop offset="1" stop-color="#e400ff"/></linearGradient><linearGradient id="c147" gradientUnits="userSpaceOnUse" x1="1113" x2="1387" y1="0" y2="0"><stop offset="0" stop-color="#0015ff"/><stop offset="0.2" stop-color="#0306ff"/><stop offset="0.364" stop-color="#2d00ff"/><stop offset="1" stop-color="#df00ff"/></linearGradient><linearGradient id="c148" gradientUnits="userSpaceOnUse" x1="1115" x2="1384" y1="0" y2="0"><stop offset="0" stop-color="#0014ff"/><stop offset="0.185" stop-color="#0007ff"/><stop offset="0.352" stop-color="#2a00ff"/><stop offset="1" stop-color="#da00ff"/></linearGradient><linearGradient id="c149" gradientUnits="userSpaceOnUse" x1="1116" x2="1382" y1="0" y2="0"><stop offset="0" stop-color="#0013ff"/><stop offset="0.189" stop-color="#0106ff"/><stop offset="0.358" stop-color="#2b00ff"/><stop offset="1" stop-color="#d600ff"/></linearGradient><linearGradient id="c150" gradientUnits="userSpaceOnUse" x1="1118" x2="1380" y1="0" y2="0"><stop offset="0" stop-color="#01f"/><stop offset="0.192" stop-color="#0204ff"/><stop offset="0.423" stop-color="#3b00ff"/><stop offset="1" stop-color="#d200ff"/></linearGradient><linearGradient id="c151" gradientUnits="userSpaceOnUse" x1="1119" x2="1378" y1="0" y2="0"><stop offset="0" stop-color="#01f"/><stop offset="0.192" stop-color="#0204ff"/><stop offset="0.481" stop-color="#4800ff"/><stop offset="1" stop-color="#ce00ff"/></linearGradient><linearGradient id="c152" gradientUnits="userSpaceOnUse" x1="1121" x2="1376" y1="0" y2="0"><stop offset="0" stop-color="#000fff"/><stop offset="0.176" stop-color="#0004ff"/><stop offset="0.431" stop-color="#3b00ff"/><stop offset="1" stop-color="#ca00ff"/></linearGradient><linearGradient id="c153" gradientUnits="userSpaceOnUse" x1="1123" x2="1374" y1="0" y2="0"><stop offset="0" stop-color="#000eff"/><stop offset="0.18" stop-color="#0103ff"/><stop offset="0.96" stop-color="#bc00ff"/><stop offset="1" stop-color="#c600ff"/></linearGradient><linearGradient id="c154" gradientUnits="userSpaceOnUse" x1="1124" x2="1372" y1="0" y2="0"><stop offset="0" stop-color="#000dff"/><stop offset="0.18" stop-color="#0102ff"/><stop offset="0.98" stop-color="#bd00ff"/><stop offset="1" stop-color="#c200ff"/></linearGradient><linearGradient id="c155" gradientUnits="userSpaceOnUse" x1="1126" x2="1370" y1="0" y2="0"><stop offset="0" stop-color="#000cff"/><stop offset="0.184" stop-color="#0301ff"/><stop offset="1" stop-color="#be00ff"/></linearGradient><linearGradient id="c156" gradientUnits="userSpaceOnUse" x1="1127" x2="1368" y1="0" y2="0"><stop offset="0" stop-color="#000bff"/><stop offset="0.167" stop-color="#0001ff"/><stop offset="0.958" stop-color="#b100ff"/><stop offset="1" stop-color="#b0f"/></linearGradient><linearGradient id="c157" gradientUnits="userSpaceOnUse" x1="1129" x2="1366" y1="0" y2="0"><stop offset="0" stop-color="#000aff"/><stop offset="0.17" stop-color="#0100ff"/><stop offset="1" stop-color="#b700ff"/></linearGradient><linearGradient id="c158" gradientUnits="userSpaceOnUse" x1="1130" x2="1363" y1="0" y2="0"><stop offset="0" stop-color="#0009ff"/><stop offset="0.17" stop-color="#0100ff"/><stop offset="1" stop-color="#b200ff"/></linearGradient><linearGradient id="c159" gradientUnits="userSpaceOnUse" x1="1132" x2="1361" y1="0" y2="0"><stop offset="0" stop-color="#0008ff"/><stop offset="0.174" stop-color="#0200ff"/><stop offset="1" stop-color="#af00ff"/></linearGradient><linearGradient id="c160" gradientUnits="userSpaceOnUse" x1="1134" x2="1359" y1="0" y2="0"><stop offset="0" stop-color="#0007ff"/><stop offset="0.156" stop-color="#00f"/><stop offset="1" stop-color="#ab00ff"/></linearGradient><linearGradient id="c161" gradientUnits="userSpaceOnUse" x1="1135" x2="1357" y1="0" y2="0"><stop offset="0" stop-color="#0007ff"/><stop offset="0.159" stop-color="#0100ff"/><stop offset="1" stop-color="#a800ff"/></linearGradient><linearGradient id="c162" gradientUnits="userSpaceOnUse" x1="1137" x2="1355" y1="0" y2="0"><stop offset="0" stop-color="#0005ff"/><stop offset="0.159" stop-color="#0100ff"/><stop offset="1" stop-color="#a500ff"/></linearGradient><linearGradient id="c163" gradientUnits="userSpaceOnUse" x1="1139" x2="1353" y1="0" y2="0"><stop offset="0" stop-color="#0004ff"/><stop offset="0.163" stop-color="#0300ff"/><stop offset="1" stop-color="#a100ff"/></linearGradient><linearGradient id="c164" gradientUnits="userSpaceOnUse" x1="1140" x2="1351" y1="0" y2="0"><stop offset="0" stop-color="#0004ff"/><stop offset="0.143" stop-color="#00f"/><stop offset="1" stop-color="#9e00ff"/></linearGradient><linearGradient id="c165" gradientUnits="userSpaceOnUse" x1="1142" x2="1349" y1="0" y2="0"><stop offset="0" stop-color="#0003ff"/><stop offset="0.146" stop-color="#0100ff"/><stop offset="1" stop-color="#9b00ff"/></linearGradient><linearGradient id="c166" gradientUnits="userSpaceOnUse" x1="1144" x2="1347" y1="0" y2="0"><stop offset="0" stop-color="#0002ff"/><stop offset="0.146" stop-color="#0200ff"/><stop offset="1" stop-color="#9800ff"/></linearGradient><linearGradient id="c167" gradientUnits="userSpaceOnUse" x1="1146" x2="1345" y1="0" y2="0"><stop offset="0" stop-color="#0001ff"/><stop offset="0.15" stop-color="#0300ff"/><stop offset="1" stop-color="#9400ff"/></linearGradient><linearGradient id="c168" gradientUnits="userSpaceOnUse" x1="1147" x2="1342" y1="0" y2="0"><stop offset="0" stop-color="#00f"/><stop offset="0.128" stop-color="#00f"/><stop offset="1" stop-color="#9000ff"/></linearGradient><linearGradient id="c169" gradientUnits="userSpaceOnUse" x1="1149" x2="1340" y1="0" y2="0"><stop offset="0" stop-color="#00f"/><stop offset="0.132" stop-color="#0100ff"/><stop offset="1" stop-color="#8d00ff"/></linearGradient><linearGradient id="c170" gradientUnits="userSpaceOnUse" x1="1151" x2="1338" y1="0" y2="0"><stop offset="0" stop-color="#00f"/><stop offset="0.135" stop-color="#0300ff"/><stop offset="1" stop-color="#8a00ff"/></linearGradient><linearGradient id="c171" gradientUnits="userSpaceOnUse" x1="1153" x2="1336" y1="0" y2="0"><stop offset="0" stop-color="#00f"/><stop offset="0.135" stop-color="#0400ff"/><stop offset="1" stop-color="#80f"/></linearGradient><linearGradient id="c172" gradientUnits="userSpaceOnUse" x1="1155" x2="1334" y1="0" y2="0"><stop offset="0" stop-color="#00f"/><stop offset="0.111" stop-color="#0100ff"/><stop offset="1" stop-color="#8500ff"/></linearGradient><linearGradient id="c173" gradientUnits="userSpaceOnUse" x1="1157" x2="1332" y1="0" y2="0"><stop offset="0" stop-color="#00f"/><stop offset="0.114" stop-color="#0200ff"/><stop offset="1" stop-color="#8200ff"/></linearGradient><linearGradient id="c174" gradientUnits="userSpaceOnUse" x1="1158" x2="1330" y1="0" y2="0"><stop offset="0" stop-color="#00f"/><stop offset="0.118" stop-color="#0300ff"/><stop offset="1" stop-color="#7f00ff"/></linearGradient><linearGradient id="c175" gradientUnits="userSpaceOnUse" x1="1160" x2="1328" y1="0" y2="0"><stop offset="0" stop-color="#00f"/><stop offset="0.118" stop-color="#0400ff"/><stop offset="1" stop-color="#7c00ff"/></linearGradient><linearGradient id="c176" gradientUnits="userSpaceOnUse" x1="1162" x2="1326" y1="0" y2="0"><stop offset="0" stop-color="#00f"/><stop offset="0.121" stop-color="#0500ff"/><stop offset="1" stop-color="#7900ff"/></linearGradient><linearGradient id="c177" gradientUnits="userSpaceOnUse" x1="1164" x2="1324" y1="0" y2="0"><stop offset="0" stop-color="#00f"/><stop offset="0.094" stop-color="#0300ff"/><stop offset="1" stop-color="#70f"/></linearGradient><linearGradient id="c178" gradientUnits="userSpaceOnUse" x1="1166" x2="1322" y1="0" y2="0"><stop offset="0" stop-color="#00f"/><stop offset="0.097" stop-color="#0400ff"/><stop offset="1" stop-color="#7400ff"/></linearGradient><linearGradient id="c179" gradientUnits="userSpaceOnUse" x1="1168" x2="1319" y1="0" y2="0"><stop offset="0" stop-color="#00f"/><stop offset="0.1" stop-color="#0500ff"/><stop offset="1" stop-color="#7100ff"/></linearGradient><linearGradient id="c180" gradientUnits="userSpaceOnUse" x1="1170" x2="1317" y1="0" y2="0"><stop offset="0" stop-color="#00f"/><stop offset="0.172" stop-color="#0e00ff"/><stop offset="1" stop-color="#6e00ff"/></linearGradient><linearGradient id="c181" gradientUnits="userSpaceOnUse" x1="1173" x2="1315" y1="0" y2="0"><stop offset="0" stop-color="#00f"/><stop offset="1" stop-color="#6b00ff"/></linearGradient><linearGradient id="c182" gradientUnits="userSpaceOnUse" x1="1175" x2="1313" y1="0" y2="0"><stop offset="0" stop-color="#00f"/><stop offset="1" stop-color="#6900ff"/></linearGradient><linearGradient id="c183" gradientUnits="userSpaceOnUse" x1="1177" x2="1311" y1="0" y2="0"><stop offset="0" stop-color="#00f"/><stop offset="1" stop-color="#60f"/></linearGradient><linearGradient id="c184" gradientUnits="userSpaceOnUse" x1="1179" x2="1309" y1="0" y2="0"><stop offset="0" stop-color="#0100ff"/><stop offset="1" stop-color="#6400ff"/></linearGradient><linearGradient id="c185" gradientUnits="userSpaceOnUse" x1="1182" x2="1307" y1="0" y2="0"><stop offset="0" stop-color="#0300ff"/><stop offset="1" stop-color="#6200ff"/></linearGradient><linearGradient id="c186" gradientUnits="userSpaceOnUse" x1="1184" x2="1305" y1="0" y2="0"><stop offset="0" stop-color="#0400ff"/><stop offset="1" stop-color="#5f00ff"/></linearGradient><linearGradient id="c187" gradientUnits="userSpaceOnUse" x1="1186" x2="1303" y1="0" y2="0"><stop offset="0" stop-color="#0500ff"/><stop offset="1" stop-color="#5d00ff"/></linearGradient><linearGradient id="c188" gradientUnits="userSpaceOnUse" x1="1189" x2="1301" y1="0" y2="0"><stop offset="0" stop-color="#0700ff"/><stop offset="1" stop-color="#5a00ff"/></linearGradient><linearGradient id="c189" gradientUnits="userSpaceOnUse" x1="1191" x2="1298" y1="0" y2="0"><stop offset="0" stop-color="#0800ff"/><stop offset="1" stop-color="#5700ff"/></linearGradient><linearGradient id="c190" gradientUnits="userSpaceOnUse" x1="1194" x2="1296" y1="0" y2="0"><stop offset="0" stop-color="#0a00ff"/><stop offset="1" stop-color="#50f"/></linearGradient><linearGradient id="c191" gradientUnits="userSpaceOnUse" x1="1196" x2="1294" y1="0" y2="0"><stop offset="0" stop-color="#0b00ff"/><stop offset="1" stop-color="#5300ff"/></linearGradient><linearGradient id="c192" gradientUnits="userSpaceOnUse" x1="1199" x2="1292" y1="0" y2="0"><stop offset="0" stop-color="#0d00ff"/><stop offset="1" stop-color="#5100ff"/></linearGradient><linearGradient id="c193" gradientUnits="userSpaceOnUse" x1="1201" x2="1290" y1="0" y2="0"><stop offset="0" stop-color="#0e00ff"/><stop offset="1" stop-color="#4f00ff"/></linearGradient><linearGradient id="c194" gradientUnits="userSpaceOnUse" x1="1204" x2="1288" y1="0" y2="0"><stop offset="0" stop-color="#1000ff"/><stop offset="1" stop-color="#4c00ff"/></linearGradient><linearGradient id="c195" gradientUnits="userSpaceOnUse" x1="1206" x2="1286" y1="0" y2="0"><stop offset="0" stop-color="#10f"/><stop offset="1" stop-color="#4a00ff"/></linearGradient><linearGradient id="c196" gradientUnits="userSpaceOnUse" x1="1209" x2="1284" y1="0" y2="0"><stop offset="0" stop-color="#1300ff"/><stop offset="1" stop-color="#4800ff"/></linearGradient><linearGradient id="c197" gradientUnits="userSpaceOnUse" x1="1212" x2="1282" y1="0" y2="0"><stop offset="0" stop-color="#1500ff"/><stop offset="1" stop-color="#4600ff"/></linearGradient><linearGradient id="c198" gradientUnits="userSpaceOnUse" x1="1214" x2="1280" y1="0" y2="0"><stop offset="0" stop-color="#1600ff"/><stop offset="1" stop-color="#40f"/></linearGradient><linearGradient id="c199" gradientUnits="userSpaceOnUse" x1="1217" x2="1277" y1="0" y2="0"><stop offset="0" stop-color="#1700ff"/><stop offset="1" stop-color="#4100ff"/></linearGradient><linearGradient id="c200" gradientUnits="userSpaceOnUse" x1="1219" x2="1275" y1="0" y2="0"><stop offset="0" stop-color="#1800ff"/><stop offset="1" stop-color="#3f00ff"/></linearGradient><linearGradient id="c201" gradientUnits="userSpaceOnUse" x1="1222" x2="1273" y1="0" y2="0"><stop offset="0" stop-color="#1a00ff"/><stop offset="1" stop-color="#3d00ff"/></linearGradient><linearGradient id="c202" gradientUnits="userSpaceOnUse" x1="1225" x2="1271" y1="0" y2="0"><stop offset="0" stop-color="#1c00ff"/><stop offset="1" stop-color="#3b00ff"/></linearGradient><linearGradient id="c203" gradientUnits="userSpaceOnUse" x1="1227" x2="1269" y1="0" y2="0"><stop offset="0" stop-color="#1d00ff"/><stop offset="1" stop-color="#3900ff"/></linearGradient><linearGradient id="c204" gradientUnits="userSpaceOnUse" x1="1230" x2="1267" y1="0" y2="0"><stop offset="0" stop-color="#1e00ff"/><stop offset="1" stop-color="#3700ff"/></linearGradient><linearGradient id="c205" gradientUnits="userSpaceOnUse" x1="1232" x2="1265" y1="0" y2="0"><stop offset="0" stop-color="#1f00ff"/><stop offset="1" stop-color="#3600ff"/></linearGradient><linearGradient id="c206" gradientUnits="userSpaceOnUse" x1="1235" x2="1263" y1="0" y2="0"><stop offset="0" stop-color="#2100ff"/><stop offset="1" stop-color="#3400ff"/></linearGradient><linearGradient id="c207" gradientUnits="userSpaceOnUse" x1="1237" x2="1261" y1="0" y2="0"><stop offset="0" stop-color="#20f"/><stop offset="1" stop-color="#3200ff"/></linearGradient><linearGradient id="c208" gradientUnits="userSpaceOnUse" x1="1240" x2="1259" y1="0" y2="0"><stop offset="0" stop-color="#2300ff"/><stop offset="1" stop-color="#3000ff"/></linearGradient><linearGradient id="c209" gradientUnits="userSpaceOnUse" x1="1243" x2="1256" y1="0" y2="0"><stop offset="0" stop-color="#2500ff"/><stop offset="1" stop-color="#2e00ff"/></linearGradient><linearGradient id="c210" gradientUnits="userSpaceOnUse" x1="1246" x2="1254" y1="0" y2="0"><stop offset="0" stop-color="#2600ff"/><stop offset="1" stop-color="#2c00ff"/></linearGradient><linearGradient id="rb" x1="0" y1="0" x2="0" y2="1"><stop offset="0" stop-color="#ff2a2a"/><stop offset="0.4" stop-color="#ff0000"/><stop offset="1" stop-color="#b00000"/></linearGradient><linearGradient id="gb" x1="0" y1="0" x2="0" y2="1"><stop offset="0" stop-color="#009000"/><stop offset="1" stop-color="#006e00"/></linearGradient><linearGradient id="bb" x1="0" y1="0" x2="0" y2="1"><stop offset="0" stop-color="#3c3cff"/><stop offset="0.25" stop-color="#0000ff"/><stop offset="0.6" stop-color="#0000e0"/><stop offset="1" stop-color="#000082"/></linearGradient><linearGradient id="m0" gradientUnits="userSpaceOnUse" x1="617.5" x2="947.5" y1="0" y2="0"><stop offset="0" stop-color="#89ffcf"/><stop offset="0.782" stop-color="#fcffca"/><stop offset="1" stop-color="#ffe1b1"/></linearGradient><linearGradient id="m1" gradientUnits="userSpaceOnUse" x1="617.5" x2="947.5" y1="0" y2="0"><stop offset="0" stop-color="#8affd1"/><stop offset="0.8" stop-color="#fffdca"/><stop offset="1" stop-color="#ffe0b2"/></linearGradient><linearGradient id="m2" gradientUnits="userSpaceOnUse" x1="617.5" x2="947.5" y1="0" y2="0"><stop offset="0" stop-color="#8bffd2"/><stop offset="0.782" stop-color="#ffffcd"/><stop offset="1" stop-color="#ffdeb2"/></linearGradient><linearGradient id="m3" gradientUnits="userSpaceOnUse" x1="617.5" x2="947.5" y1="0" y2="0"><stop offset="0" stop-color="#8cffd4"/><stop offset="0.782" stop-color="#fffdcd"/><stop offset="1" stop-color="#ffddb2"/></linearGradient><linearGradient id="m4" gradientUnits="userSpaceOnUse" x1="617.5" x2="947.5" y1="0" y2="0"><stop offset="0" stop-color="#8dffd5"/><stop offset="0.764" stop-color="#fffed0"/><stop offset="1" stop-color="#ffdbb2"/></linearGradient><linearGradient id="m5" gradientUnits="userSpaceOnUse" x1="617.5" x2="947.5" y1="0" y2="0"><stop offset="0" stop-color="#8effd7"/><stop offset="0.764" stop-color="#fffcd0"/><stop offset="1" stop-color="#ffdab3"/></linearGradient><linearGradient id="m6" gradientUnits="userSpaceOnUse" x1="617.5" x2="947.5" y1="0" y2="0"><stop offset="0" stop-color="#8fffd8"/><stop offset="0.745" stop-color="#fffed3"/><stop offset="1" stop-color="#ffd8b3"/></linearGradient><linearGradient id="m7" gradientUnits="userSpaceOnUse" x1="617.5" x2="947.5" y1="0" y2="0"><stop offset="0" stop-color="#91ffda"/><stop offset="0.745" stop-color="#fffcd4"/><stop offset="1" stop-color="#ffd7b3"/></linearGradient><linearGradient id="m8" gradientUnits="userSpaceOnUse" x1="617.5" x2="947.5" y1="0" y2="0"><stop offset="0" stop-color="#92ffdb"/><stop offset="0.727" stop-color="#fffdd6"/><stop offset="1" stop-color="#ffd6b4"/></linearGradient><linearGradient id="m9" gradientUnits="userSpaceOnUse" x1="617.5" x2="947.5" y1="0" y2="0"><stop offset="0" stop-color="#93ffdd"/><stop offset="0.709" stop-color="#ffffd9"/><stop offset="1" stop-color="#ffd4b4"/></linearGradient><linearGradient id="m10" gradientUnits="userSpaceOnUse" x1="617.5" x2="947.5" y1="0" y2="0"><stop offset="0" stop-color="#94ffdf"/><stop offset="0.709" stop-color="#fffdda"/><stop offset="1" stop-color="#ffd3b4"/></linearGradient><linearGradient id="m11" gradientUnits="userSpaceOnUse" x1="617.5" x2="947.5" y1="0" y2="0"><stop offset="0" stop-color="#95ffe0"/><stop offset="0.691" stop-color="#fffedd"/><stop offset="1" stop-color="#ffd1b4"/></linearGradient><linearGradient id="m12" gradientUnits="userSpaceOnUse" x1="617.5" x2="947.5" y1="0" y2="0"><stop offset="0" stop-color="#96ffe2"/><stop offset="0.691" stop-color="#fffcdd"/><stop offset="1" stop-color="#ffd0b5"/></linearGradient><linearGradient id="m13" gradientUnits="userSpaceOnUse" x1="617.5" x2="947.5" y1="0" y2="0"><stop offset="0" stop-color="#98ffe3"/><stop offset="0.673" stop-color="#fffee0"/><stop offset="1" stop-color="#ffceb5"/></linearGradient><linearGradient id="m14" gradientUnits="userSpaceOnUse" x1="617.5" x2="947.5" y1="0" y2="0"><stop offset="0" stop-color="#99ffe5"/><stop offset="0.655" stop-color="#ffffe3"/><stop offset="1" stop-color="#ffcdb5"/></linearGradient><linearGradient id="m15" gradientUnits="userSpaceOnUse" x1="617.5" x2="947.5" y1="0" y2="0"><stop offset="0" stop-color="#9affe7"/><stop offset="0.655" stop-color="#fffde3"/><stop offset="1" stop-color="#ffccb6"/></linearGradient><linearGradient id="m16" gradientUnits="userSpaceOnUse" x1="617.5" x2="947.5" y1="0" y2="0"><stop offset="0" stop-color="#9bffe8"/><stop offset="0.636" stop-color="#fffee6"/><stop offset="1" stop-color="#ffcab6"/></linearGradient><linearGradient id="m17" gradientUnits="userSpaceOnUse" x1="617.5" x2="947.5" y1="0" y2="0"><stop offset="0" stop-color="#9dffea"/><stop offset="0.636" stop-color="#fffde6"/><stop offset="1" stop-color="#ffc9b6"/></linearGradient><linearGradient id="m18" gradientUnits="userSpaceOnUse" x1="617.5" x2="947.5" y1="0" y2="0"><stop offset="0" stop-color="#9effec"/><stop offset="0.618" stop-color="#fffee9"/><stop offset="1" stop-color="#ffc7b6"/></linearGradient><linearGradient id="m19" gradientUnits="userSpaceOnUse" x1="617.5" x2="947.5" y1="0" y2="0"><stop offset="0" stop-color="#9fffed"/><stop offset="0.618" stop-color="#fffce9"/><stop offset="1" stop-color="#ffc6b7"/></linearGradient><linearGradient id="m20" gradientUnits="userSpaceOnUse" x1="617.5" x2="947.5" y1="0" y2="0"><stop offset="0" stop-color="#a0ffef"/><stop offset="0.6" stop-color="#fffded"/><stop offset="1" stop-color="#ffc5b7"/></linearGradient><linearGradient id="m21" gradientUnits="userSpaceOnUse" x1="617.5" x2="947.5" y1="0" y2="0"><stop offset="0" stop-color="#a2fff1"/><stop offset="0.582" stop-color="#fffff0"/><stop offset="0.982" stop-color="#ffc5b9"/><stop offset="1" stop-color="#ffc3b7"/></linearGradient><linearGradient id="m22" gradientUnits="userSpaceOnUse" x1="617.5" x2="947.5" y1="0" y2="0"><stop offset="0" stop-color="#a3fff3"/><stop offset="0.582" stop-color="#fffdf0"/><stop offset="1" stop-color="#ffc2b7"/></linearGradient><linearGradient id="m23" gradientUnits="userSpaceOnUse" x1="617.5" x2="947.5" y1="0" y2="0"><stop offset="0" stop-color="#a4fff5"/><stop offset="0.564" stop-color="#fffef3"/><stop offset="0.964" stop-color="#ffc5bc"/><stop offset="1" stop-color="#ffc1b8"/></linearGradient><linearGradient id="m24" gradientUnits="userSpaceOnUse" x1="617.5" x2="947.5" y1="0" y2="0"><stop offset="0" stop-color="#a6fff6"/><stop offset="0.564" stop-color="#fffcf3"/><stop offset="0.964" stop-color="#ffc3bc"/><stop offset="1" stop-color="#ffbfb8"/></linearGradient><linearGradient id="m25" gradientUnits="userSpaceOnUse" x1="617.5" x2="947.5" y1="0" y2="0"><stop offset="0" stop-color="#a7fff8"/><stop offset="0.545" stop-color="#fffef7"/><stop offset="0.945" stop-color="#ffc4be"/><stop offset="1" stop-color="#ffbeb8"/></linearGradient><linearGradient id="m26" gradientUnits="userSpaceOnUse" x1="617.5" x2="947.5" y1="0" y2="0"><stop offset="0" stop-color="#a8fffa"/><stop offset="0.545" stop-color="#fffcf7"/><stop offset="0.945" stop-color="#ffc3bf"/><stop offset="1" stop-color="#ffbdb8"/></linearGradient><linearGradient id="m27" gradientUnits="userSpaceOnUse" x1="617.5" x2="947.5" y1="0" y2="0"><stop offset="0" stop-color="#aafffc"/><stop offset="0.527" stop-color="#fffdfa"/><stop offset="0.927" stop-color="#ffc4c1"/><stop offset="1" stop-color="#ffbbb9"/></linearGradient><linearGradient id="m28" gradientUnits="userSpaceOnUse" x1="617.5" x2="947.5" y1="0" y2="0"><stop offset="0" stop-color="#abfffe"/><stop offset="0.509" stop-color="#fffffd"/><stop offset="0.909" stop-color="#ffc4c3"/><stop offset="1" stop-color="#ffbab9"/></linearGradient><linearGradient id="m29" gradientUnits="userSpaceOnUse" x1="617.5" x2="947.5" y1="0" y2="0"><stop offset="0" stop-color="#acfeff"/><stop offset="0.509" stop-color="#fffdfe"/><stop offset="0.909" stop-color="#ffc3c4"/><stop offset="1" stop-color="#ffb9b9"/></linearGradient><linearGradient id="m30" gradientUnits="userSpaceOnUse" x1="617.5" x2="947.5" y1="0" y2="0"><stop offset="0" stop-color="#acfdff"/><stop offset="0.509" stop-color="#fffbfe"/><stop offset="0.909" stop-color="#ffc2c4"/><stop offset="1" stop-color="#ffb7ba"/></linearGradient><linearGradient id="m31" gradientUnits="userSpaceOnUse" x1="617.5" x2="947.5" y1="0" y2="0"><stop offset="0" stop-color="#acfbff"/><stop offset="0.509" stop-color="#fff9fe"/><stop offset="0.909" stop-color="#ffc0c4"/><stop offset="1" stop-color="#ffb6ba"/></linearGradient><linearGradient id="m32" gradientUnits="userSpaceOnUse" x1="617.5" x2="947.5" y1="0" y2="0"><stop offset="0" stop-color="#acf9ff"/><stop offset="0.509" stop-color="#fff7fe"/><stop offset="0.909" stop-color="#ffbfc4"/><stop offset="1" stop-color="#ffb5ba"/></linearGradient><linearGradient id="m33" gradientUnits="userSpaceOnUse" x1="617.5" x2="947.5" y1="0" y2="0"><stop offset="0" stop-color="#acf7ff"/><stop offset="0.509" stop-color="#fff5fe"/><stop offset="0.909" stop-color="#ffbdc5"/><stop offset="1" stop-color="#ffb3ba"/></linearGradient><linearGradient id="m34" gradientUnits="userSpaceOnUse" x1="617.5" x2="947.5" y1="0" y2="0"><stop offset="0" stop-color="#adf5ff"/><stop offset="0.509" stop-color="#fff4fe"/><stop offset="0.909" stop-color="#ffbcc5"/><stop offset="1" stop-color="#ffb2bb"/></linearGradient><linearGradient id="m35" gradientUnits="userSpaceOnUse" x1="617.5" x2="947.5" y1="0" y2="0"><stop offset="0" stop-color="#adf3ff"/><stop offset="0.509" stop-color="#fff2fe"/><stop offset="0.909" stop-color="#ffbbc5"/><stop offset="1" stop-color="#ffb1bb"/></linearGradient><linearGradient id="m36" gradientUnits="userSpaceOnUse" x1="617.5" x2="947.5" y1="0" y2="0"><stop offset="0" stop-color="#adf2ff"/><stop offset="0.509" stop-color="#fff0ff"/><stop offset="0.909" stop-color="#ffb9c5"/><stop offset="1" stop-color="#ffafbb"/></linearGradient><linearGradient id="m37" gradientUnits="userSpaceOnUse" x1="617.5" x2="947.5" y1="0" y2="0"><stop offset="0" stop-color="#adf0ff"/><stop offset="0.509" stop-color="#fef"/><stop offset="0.927" stop-color="#ffb6c3"/><stop offset="1" stop-color="#ffaebb"/></linearGradient><linearGradient id="m38" gradientUnits="userSpaceOnUse" x1="617.5" x2="947.5" y1="0" y2="0"><stop offset="0" stop-color="#adeeff"/><stop offset="0.509" stop-color="#ffedff"/><stop offset="0.927" stop-color="#ffb5c4"/><stop offset="1" stop-color="#ffadbc"/></linearGradient><linearGradient id="m39" gradientUnits="userSpaceOnUse" x1="617.5" x2="947.5" y1="0" y2="0"><stop offset="0" stop-color="#adecff"/><stop offset="0.509" stop-color="#ffebff"/><stop offset="0.927" stop-color="#ffb3c4"/><stop offset="1" stop-color="#ffacbc"/></linearGradient><linearGradient id="m40" gradientUnits="userSpaceOnUse" x1="617.5" x2="947.5" y1="0" y2="0"><stop offset="0" stop-color="#adebff"/><stop offset="0.527" stop-color="#ffe6fc"/><stop offset="0.945" stop-color="#ffb0c2"/><stop offset="1" stop-color="#ffaabc"/></linearGradient><linearGradient id="m41" gradientUnits="userSpaceOnUse" x1="617.5" x2="947.5" y1="0" y2="0"><stop offset="0" stop-color="#ade9ff"/><stop offset="0.527" stop-color="#ffe4fc"/><stop offset="0.945" stop-color="#ffafc2"/><stop offset="1" stop-color="#ffa9bc"/></linearGradient><linearGradient id="m42" gradientUnits="userSpaceOnUse" x1="617.5" x2="947.5" y1="0" y2="0"><stop offset="0" stop-color="#ade7ff"/><stop offset="0.527" stop-color="#ffe3fc"/><stop offset="0.945" stop-color="#ffadc3"/><stop offset="1" stop-color="#ffa8bd"/></linearGradient><linearGradient id="m43" gradientUnits="userSpaceOnUse" x1="617.5" x2="947.5" y1="0" y2="0"><stop offset="0" stop-color="#ade5ff"/><stop offset="0.527" stop-color="#ffe1fc"/><stop offset="0.945" stop-color="#ffacc3"/><stop offset="1" stop-color="#ffa7bd"/></linearGradient><linearGradient id="m44" gradientUnits="userSpaceOnUse" x1="617.5" x2="947.5" y1="0" y2="0"><stop offset="0" stop-color="#aee4ff"/><stop offset="0.527" stop-color="#ffdffd"/><stop offset="0.945" stop-color="#ffabc3"/><stop offset="1" stop-color="#ffa5bd"/></linearGradient><linearGradient id="m45" gradientUnits="userSpaceOnUse" x1="617.5" x2="947.5" y1="0" y2="0"><stop offset="0" stop-color="#aee2ff"/><stop offset="0.527" stop-color="#ffdefd"/><stop offset="0.945" stop-color="#ffaac3"/><stop offset="1" stop-color="#ffa4bd"/></linearGradient><linearGradient id="m46" gradientUnits="userSpaceOnUse" x1="617.5" x2="947.5" y1="0" y2="0"><stop offset="0" stop-color="#aee0ff"/><stop offset="0.527" stop-color="#ffdcfd"/><stop offset="0.945" stop-color="#ffa8c4"/><stop offset="1" stop-color="#ffa3be"/></linearGradient><linearGradient id="m47" gradientUnits="userSpaceOnUse" x1="617.5" x2="947.5" y1="0" y2="0"><stop offset="0" stop-color="#aedeff"/><stop offset="0.527" stop-color="#ffdafd"/><stop offset="0.945" stop-color="#ffa7c4"/><stop offset="1" stop-color="#ffa2be"/></linearGradient><linearGradient id="m48" gradientUnits="userSpaceOnUse" x1="617.5" x2="947.5" y1="0" y2="0"><stop offset="0" stop-color="#aeddff"/><stop offset="0.527" stop-color="#ffd9fd"/><stop offset="0.945" stop-color="#ffa6c4"/><stop offset="1" stop-color="#ffa0be"/></linearGradient><linearGradient id="m49" gradientUnits="userSpaceOnUse" x1="617.5" x2="947.5" y1="0" y2="0"><stop offset="0" stop-color="#aedbff"/><stop offset="0.527" stop-color="#ffd7fd"/><stop offset="0.964" stop-color="#ffa3c2"/><stop offset="1" stop-color="#ff9fbe"/></linearGradient><linearGradient id="m50" gradientUnits="userSpaceOnUse" x1="617.5" x2="947.5" y1="0" y2="0"><stop offset="0" stop-color="#aed9ff"/><stop offset="0.527" stop-color="#ffd5fd"/><stop offset="0.964" stop-color="#ffa1c2"/><stop offset="1" stop-color="#ff9ebe"/></linearGradient><linearGradient id="m51" gradientUnits="userSpaceOnUse" x1="617.5" x2="947.5" y1="0" y2="0"><stop offset="0" stop-color="#aed8ff"/><stop offset="0.527" stop-color="#ffd4fe"/><stop offset="0.964" stop-color="#ffa0c3"/><stop offset="1" stop-color="#ff9dbf"/></linearGradient><linearGradient id="m52" gradientUnits="userSpaceOnUse" x1="617.5" x2="947.5" y1="0" y2="0"><stop offset="0" stop-color="#aed6ff"/><stop offset="0.527" stop-color="#ffd2fe"/><stop offset="0.964" stop-color="#ff9fc3"/><stop offset="1" stop-color="#ff9cbf"/></linearGradient><linearGradient id="m53" gradientUnits="userSpaceOnUse" x1="617.5" x2="947.5" y1="0" y2="0"><stop offset="0" stop-color="#aed5ff"/><stop offset="0.527" stop-color="#ffd0fe"/><stop offset="0.964" stop-color="#ff9ec3"/><stop offset="1" stop-color="#ff9abf"/></linearGradient><linearGradient id="m54" gradientUnits="userSpaceOnUse" x1="617.5" x2="947.5" y1="0" y2="0"><stop offset="0" stop-color="#afd3ff"/><stop offset="0.527" stop-color="#ffcffe"/><stop offset="0.964" stop-color="#ff9dc3"/><stop offset="1" stop-color="#ff99bf"/></linearGradient><linearGradient id="m55" gradientUnits="userSpaceOnUse" x1="617.5" x2="947.5" y1="0" y2="0"><stop offset="0" stop-color="#afd1ff"/><stop offset="0.527" stop-color="#ffcdfe"/><stop offset="0.964" stop-color="#ff9bc4"/><stop offset="1" stop-color="#ff98c0"/></linearGradient><linearGradient id="m56" gradientUnits="userSpaceOnUse" x1="617.5" x2="947.5" y1="0" y2="0"><stop offset="0" stop-color="#afd0ff"/><stop offset="0.527" stop-color="#ffccfe"/><stop offset="0.964" stop-color="#ff9ac4"/><stop offset="1" stop-color="#ff97c0"/></linearGradient><linearGradient id="m57" gradientUnits="userSpaceOnUse" x1="617.5" x2="947.5" y1="0" y2="0"><stop offset="0" stop-color="#afceff"/><stop offset="0.527" stop-color="#ffcafe"/><stop offset="0.964" stop-color="#ff99c4"/><stop offset="1" stop-color="#ff96c0"/></linearGradient><linearGradient id="m58" gradientUnits="userSpaceOnUse" x1="617.5" x2="947.5" y1="0" y2="0"><stop offset="0" stop-color="#afcdff"/><stop offset="0.527" stop-color="#ffc9ff"/><stop offset="0.964" stop-color="#ff98c4"/><stop offset="1" stop-color="#ff95c0"/></linearGradient><linearGradient id="th" x1="0" y1="0" x2="0" y2="1"><stop offset="0" stop-color="#2a2a2a"/><stop offset="0.5" stop-color="#222"/><stop offset="0.5" stop-color="#0c0c0c"/><stop offset="1" stop-color="#0a0a0a"/></linearGradient><linearGradient id="rh" x1="0" y1="0" x2="0" y2="1"><stop offset="0" stop-color="#303030"/><stop offset="1" stop-color="#1c1c1c"/></linearGradient><linearGradient id="bb1" x1="0" y1="0" x2="0" y2="1"><stop offset="0" stop-color="#a4a4a4"/><stop offset="0.06" stop-color="#969696"/><stop offset="1" stop-color="#585858"/></linearGradient><linearGradient id="bbs" x1="0" y1="0" x2="0" y2="1"><stop offset="0" stop-color="#1e1e1e"/><stop offset="1" stop-color="#333"/></linearGradient><linearGradient id="cb" x1="0" y1="0" x2="0" y2="1"><stop offset="0" stop-color="#b2b2b2"/><stop offset="1" stop-color="#6c6c6c"/></linearGradient><linearGradient id="ic" x1="0" y1="0" x2="0" y2="1"><stop offset="0" stop-color="#787878"/><stop offset="1" stop-color="#a6a6a6"/></linearGradient><linearGradient id="colg" gradientUnits="userSpaceOnUse" x1="0" y1="776" x2="0" y2="867"><stop offset="0" stop-color="#a2a2a2"/><stop offset="1" stop-color="#565656"/></linearGradient><linearGradient id="stp" x1="0" y1="0" x2="0" y2="1"><stop offset="0" stop-color="#acacac"/><stop offset="0.52" stop-color="#a2a2a2"/><stop offset="0.52" stop-color="#8a8a8a"/><stop offset="1" stop-color="#929292"/></linearGradient><filter id="ds" x="-20%" y="-20%" width="150%" height="150%"><feDropShadow dx="1.5" dy="1.5" stdDeviation="0.7" flood-color="#000" flood-opacity="0.45"/></filter></defs><rect width="1615" height="871" fill="#333"/>
<rect width="1615" height="44" fill="#232323"/>
<path d="M0 0H131Q137 0 137 6V42.5H0Z" fill="url(#tab)"/>
<path d="M86.5 0V42.5" stroke="#8c8c8c" stroke-width="1"/>
<path d="M131 -0.5Q136.5 0 136.5 6V42.5" stroke="#a0a0a0" stroke-width="1" fill="none"/>
<rect x="0" y="42.5" width="137.5" height="1.5" fill="#2a2a2a"/>
<circle cx="110.2" cy="23.1" r="14.3" fill="url(#plus)"/>
<path d="M106.5 24.5H114.5M110.5 20.5V28.5" stroke="#a0a0a0" stroke-width="1"/>
<text x="8.5" y="27.5" font-size="17" fill="#e6e6e6" textLength="69.5" lengthAdjust="spacingAndGlyphs" >History 1</text>
<path d="M824 0H1038 V36Q1038 42 1032 42H824Z" fill="url(#pan)"/>
<rect x="824" y="0" width="8.5" height="42" fill="#1fd21f"/>
<path d="M984.5 2V42" stroke="#4a4a4a" stroke-width="1.5"/>
<circle cx="955" cy="20" r="14" fill="url(#dd)"/>
<path d="M948.5 17h13l-6.5 8z" fill="#f4f4f4"/>
<circle cx="1015" cy="20" r="18.5" fill="#0000e6" stroke="#fff" stroke-width="1.3"/>
<text x="1015" y="25" font-size="13.5" fill="#fff" text-anchor="middle" textLength="21.5" lengthAdjust="spacingAndGlyphs" >223</text>
<text x="837" y="14.6" font-size="16" fill="#f0f0f0" textLength="97.5" lengthAdjust="spacingAndGlyphs" >X-Rite i1Pro 2</text>
<text x="837" y="37" font-size="16" fill="#f0f0f0" textLength="83.5" lengthAdjust="spacingAndGlyphs" >Direct View</text>
<path d="M1047 0H1241.5 V36Q1241.5 42 1235.5 42H1047Z" fill="url(#pan)"/>
<rect x="1047" y="0" width="8.5" height="42" fill="#1fd21f"/>
<circle cx="1218" cy="20" r="14" fill="url(#dd)"/>
<path d="M1211.5 17h13l-6.5 8z" fill="#f4f4f4"/>
<text x="1061" y="14.6" font-size="16" fill="#f0f0f0" textLength="95.5" lengthAdjust="spacingAndGlyphs" >Mobile Forge</text>
<path d="M1251.5 0H1466 V36Q1466 42 1460 42H1251.5Z" fill="url(#pan)"/>
<rect x="1251.5" y="0" width="8.5" height="42" fill="#e6e600"/>
<circle cx="1442" cy="20" r="14" fill="url(#dd)"/>
<path d="M1435.5 17h13l-6.5 8z" fill="#f4f4f4"/>
<text x="1264.5" y="14.6" font-size="16" fill="#f0f0f0" textLength="157.5" lengthAdjust="spacingAndGlyphs" >Direct Display Control</text>
<rect x="1471.5" y="-6" width="49.5" height="45" rx="5.5" fill="url(#btn)" stroke="#c4c4c4" stroke-width="1.4"/>
<circle cx="1496" cy="18.6" r="15" fill="url(#dd2)"/>
<rect x="1525.5" y="-6" width="49.5" height="45" rx="5.5" fill="url(#btn)" stroke="#c4c4c4" stroke-width="1.4"/>
<circle cx="1550" cy="18.6" r="15" fill="url(#dd2)"/>
<rect x="1579.5" y="-6" width="49.5" height="45" rx="5.5" fill="url(#btn)" stroke="#c4c4c4" stroke-width="1.4"/>
<circle cx="1599.2" cy="18.6" r="15" fill="url(#dd2)"/>
<g transform="translate(1496 18.6)" fill="#dcdcdc"><rect x="-1.7" y="-9.8" width="3.4" height="4.5" rx="1" transform="rotate(0)"/><rect x="-1.7" y="-9.8" width="3.4" height="4.5" rx="1" transform="rotate(45)"/><rect x="-1.7" y="-9.8" width="3.4" height="4.5" rx="1" transform="rotate(90)"/><rect x="-1.7" y="-9.8" width="3.4" height="4.5" rx="1" transform="rotate(135)"/><rect x="-1.7" y="-9.8" width="3.4" height="4.5" rx="1" transform="rotate(180)"/><rect x="-1.7" y="-9.8" width="3.4" height="4.5" rx="1" transform="rotate(225)"/><rect x="-1.7" y="-9.8" width="3.4" height="4.5" rx="1" transform="rotate(270)"/><rect x="-1.7" y="-9.8" width="3.4" height="4.5" rx="1" transform="rotate(315)"/><circle r="5.6" fill="none" stroke="#dcdcdc" stroke-width="2.8"/></g>
<text x="1549.7" y="27.3" font-size="22.5" fill="#fafafa" text-anchor="middle" font-weight="bold" >?</text>
<path d="M1603 10.2v14.8l-8-7.4z" fill="#fafafa"/>
<text x="24" y="95" font-size="33" fill="#f0f0f0" textLength="216" lengthAdjust="spacingAndGlyphs" stroke="#f0f0f0" stroke-width="0.35">Color Gamut</text>
<text x="14" y="614.5" font-size="25.5" fill="#f0f0f0" textLength="213" lengthAdjust="spacingAndGlyphs" stroke="#f0f0f0" stroke-width="0.3">Current Reading</text>
<text x="14" y="678" font-size="23" fill="#f0f0f0" textLength="100" lengthAdjust="spacingAndGlyphs" >x: 0,3092</text>
<text x="166" y="678" font-size="23" fill="#f0f0f0" textLength="100" lengthAdjust="spacingAndGlyphs" >y: 0,3206</text>
<text x="14" y="714" font-size="23" fill="#f0f0f0" textLength="94" lengthAdjust="spacingAndGlyphs" >fL: 55,33</text>
<text x="14" y="751" font-size="23" fill="#f0f0f0" textLength="155" lengthAdjust="spacingAndGlyphs" >cd/m²: 189,58</text>
<rect x="19.5" y="145.5" width="325" height="371" fill="#242424"/>
<path d="M62.5 145.5V516.5M105.5 145.5V516.5M149.5 145.5V516.5M192.5 145.5V516.5M236.5 145.5V516.5M278.5 145.5V516.5M322.5 145.5V516.5" stroke="#9a9a9a" stroke-width="1" fill="none"/>
<text x="182" y="141.5" font-size="14" fill="#d2d2d2" text-anchor="middle" textLength="77" lengthAdjust="spacingAndGlyphs" >DeltaE 2000</text>
<rect x="19.5" y="150.5" width="103" height="35" fill="url(#hb0)" stroke="#000" stroke-width="1"/>
<rect x="19.5" y="196.5" width="111" height="35" fill="url(#hb1)" stroke="#000" stroke-width="1"/>
<rect x="19.5" y="242.5" width="64" height="35" fill="url(#hb2)" stroke="#000" stroke-width="1"/>
<rect x="19.5" y="289.5" width="20" height="35" fill="url(#hb3)" stroke="#000" stroke-width="1"/>
<rect x="19.5" y="335.5" width="103" height="35" fill="url(#hb4)" stroke="#000" stroke-width="1"/>
<rect x="19.5" y="382.5" width="70" height="35" fill="url(#hb5)" stroke="#000" stroke-width="1"/>
<rect x="19.5" y="428.5" width="106" height="35" fill="url(#hb6)" stroke="#000" stroke-width="1"/>
<rect x="19.5" y="474.5" width="145" height="35" fill="url(#hb7)" stroke="#000" stroke-width="1"/>
<rect x="19.5" y="145.5" width="325" height="371" fill="none" stroke="#9a9a9a"/>
<text x="19.5" y="534.5" font-size="14" fill="#d2d2d2" text-anchor="middle" >0</text>
<text x="62.5" y="534.5" font-size="14" fill="#d2d2d2" text-anchor="middle" >2</text>
<text x="105.5" y="534.5" font-size="14" fill="#d2d2d2" text-anchor="middle" >4</text>
<text x="149.5" y="534.5" font-size="14" fill="#d2d2d2" text-anchor="middle" >6</text>
<text x="192.5" y="534.5" font-size="14" fill="#d2d2d2" text-anchor="middle" >8</text>
<text x="236.5" y="534.5" font-size="14" fill="#d2d2d2" text-anchor="middle" >10</text>
<text x="278.5" y="534.5" font-size="14" fill="#d2d2d2" text-anchor="middle" >12</text>
<text x="322.5" y="534.5" font-size="14" fill="#d2d2d2" text-anchor="middle" >14</text>
<path d="M19.5 516.5v4.5M62.5 516.5v4.5M105.5 516.5v4.5M149.5 516.5v4.5M192.5 516.5v4.5M236.5 516.5v4.5M278.5 516.5v4.5M322.5 516.5v4.5" stroke="#c8c8c8" stroke-width="2" fill="none"/>
<rect x="395.5" y="85.5" width="140" height="283" fill="#242424"/>
<text x="389.5" y="89.8" font-size="14" fill="#d2d2d2" text-anchor="end" >15</text>
<text x="389.5" y="138.5" font-size="14" fill="#d2d2d2" text-anchor="end" >10</text>
<text x="389.5" y="184.5" font-size="14" fill="#d2d2d2" text-anchor="end" >5</text>
<text x="389.5" y="232.5" font-size="14" fill="#d2d2d2" text-anchor="end" >0</text>
<text x="389.5" y="279.5" font-size="14" fill="#d2d2d2" text-anchor="end" >-5</text>
<text x="389.5" y="327.5" font-size="14" fill="#d2d2d2" text-anchor="end" >-10</text>
<text x="389.5" y="375.7" font-size="14" fill="#d2d2d2" text-anchor="end" >-15</text>
<path d="M395.5 133.5H535.5M395.5 179.5H535.5M395.5 227.5H535.5M395.5 274.5H535.5M395.5 322.5H535.5" stroke="#9a9a9a" fill="none"/>
<path d="M395.5 85.5h-5M395.5 133.5h-5M395.5 179.5h-5M395.5 227.5h-5M395.5 274.5h-5M395.5 322.5h-5M395.5 368.5h-5" stroke="#c8c8c8" stroke-width="1.6" fill="none"/>
<path d="M395.5 373.5V85.5H535.5V373.5" stroke="#a4a4a4" stroke-width="1.5" fill="none"/>
<path d="M395.5 368.5H535.5" stroke="#9a9a9a" fill="none"/>
<text x="452.5" y="79.5" font-size="14" fill="#d2d2d2" text-anchor="middle" >DeltaL</text>
<text x="465.5" y="382.5" font-size="14" fill="#d2d2d2" text-anchor="middle" textLength="37" lengthAdjust="spacingAndGlyphs" >100W</text>
<path d="M409.5 227.5H521.5" stroke="#111" fill="none"/>
<rect x="586.5" y="85.5" width="141" height="283" fill="#242424"/>
<text x="580.5" y="89.8" font-size="14" fill="#d2d2d2" text-anchor="end" >15</text>
<text x="580.5" y="138.5" font-size="14" fill="#d2d2d2" text-anchor="end" >10</text>
<text x="580.5" y="184.5" font-size="14" fill="#d2d2d2" text-anchor="end" >5</text>
<text x="580.5" y="232.5" font-size="14" fill="#d2d2d2" text-anchor="end" >0</text>
<text x="580.5" y="279.5" font-size="14" fill="#d2d2d2" text-anchor="end" >-5</text>
<text x="580.5" y="327.5" font-size="14" fill="#d2d2d2" text-anchor="end" >-10</text>
<text x="580.5" y="375.7" font-size="14" fill="#d2d2d2" text-anchor="end" >-15</text>
<path d="M586.5 133.5H727.5M586.5 179.5H727.5M586.5 227.5H727.5M586.5 274.5H727.5M586.5 322.5H727.5" stroke="#9a9a9a" fill="none"/>
<path d="M586.5 85.5h-5M586.5 133.5h-5M586.5 179.5h-5M586.5 227.5h-5M586.5 274.5h-5M586.5 322.5h-5M586.5 368.5h-5" stroke="#c8c8c8" stroke-width="1.6" fill="none"/>
<path d="M586.5 373.5V85.5H727.5V373.5" stroke="#a4a4a4" stroke-width="1.5" fill="none"/>
<path d="M586.5 368.5H727.5" stroke="#9a9a9a" fill="none"/>
<text x="644" y="79.5" font-size="14" fill="#d2d2d2" text-anchor="middle" >DeltaC</text>
<text x="657" y="382.5" font-size="14" fill="#d2d2d2" text-anchor="middle" textLength="37" lengthAdjust="spacingAndGlyphs" >100W</text>
<rect x="601.5" y="183.5" width="111" height="44" fill="url(#wb)" stroke="#000"/>
<rect x="778.5" y="85.5" width="140" height="283" fill="#242424"/>
<text x="772.5" y="89.8" font-size="14" fill="#d2d2d2" text-anchor="end" >15</text>
<text x="772.5" y="138.5" font-size="14" fill="#d2d2d2" text-anchor="end" >10</text>
<text x="772.5" y="184.5" font-size="14" fill="#d2d2d2" text-anchor="end" >5</text>
<text x="772.5" y="232.5" font-size="14" fill="#d2d2d2" text-anchor="end" >0</text>
<text x="772.5" y="279.5" font-size="14" fill="#d2d2d2" text-anchor="end" >-5</text>
<text x="772.5" y="327.5" font-size="14" fill="#d2d2d2" text-anchor="end" >-10</text>
<text x="772.5" y="375.7" font-size="14" fill="#d2d2d2" text-anchor="end" >-15</text>
<path d="M778.5 133.5H918.5M778.5 179.5H918.5M778.5 227.5H918.5M778.5 274.5H918.5M778.5 322.5H918.5" stroke="#9a9a9a" fill="none"/>
<path d="M778.5 85.5h-5M778.5 133.5h-5M778.5 179.5h-5M778.5 227.5h-5M778.5 274.5h-5M778.5 322.5h-5M778.5 368.5h-5" stroke="#c8c8c8" stroke-width="1.6" fill="none"/>
<path d="M778.5 373.5V85.5H918.5V373.5" stroke="#a4a4a4" stroke-width="1.5" fill="none"/>
<path d="M778.5 368.5H918.5" stroke="#9a9a9a" fill="none"/>
<text x="835.5" y="79.5" font-size="14" fill="#d2d2d2" text-anchor="middle" >DeltaH</text>
<text x="848.5" y="382.5" font-size="14" fill="#d2d2d2" text-anchor="middle" textLength="37" lengthAdjust="spacingAndGlyphs" >100W</text>
<path d="M792.5 227.5H904.5" stroke="#111" fill="none"/>
<rect x="364" y="398" width="574" height="146" fill="#000"/>
<rect x="381" y="404" width="60" height="60" fill="#bdbac6"/>
<rect x="381" y="464" width="60" height="59" fill="#bababa"/>
<rect x="381.5" y="404.5" width="59" height="118" fill="none" stroke="#fff" stroke-opacity="0.85"/>
<text x="411" y="537" font-size="11.5" fill="#fff" text-anchor="middle" font-weight="bold" >White</text>
<rect x="451" y="404" width="60" height="60" fill="#c81400"/>
<rect x="451" y="464" width="60" height="59" fill="#b81c1e"/>
<rect x="451.5" y="404.5" width="59" height="118" fill="none" stroke="#fff" stroke-opacity="0.85"/>
<text x="481" y="537" font-size="11.5" fill="#fff" text-anchor="middle" font-weight="bold" >Red</text>
<rect x="521" y="404" width="60" height="60" fill="#0dbd00"/>
<rect x="521" y="464" width="60" height="59" fill="#34b840"/>
<rect x="521.5" y="404.5" width="59" height="118" fill="none" stroke="#fff" stroke-opacity="0.85"/>
<text x="551" y="537" font-size="11.5" fill="#fff" text-anchor="middle" font-weight="bold" >Green</text>
<rect x="591" y="404" width="60" height="60" fill="#3a00c8"/>
<rect x="591" y="464" width="60" height="59" fill="#2929b6"/>
<rect x="591.5" y="404.5" width="59" height="118" fill="none" stroke="#fff" stroke-opacity="0.85"/>
<text x="621" y="537" font-size="11.5" fill="#fff" text-anchor="middle" font-weight="bold" >Blue</text>
<rect x="661" y="404" width="60" height="60" fill="#00b9bd"/>
<rect x="661" y="464" width="60" height="59" fill="#1fb9b6"/>
<rect x="661.5" y="404.5" width="59" height="118" fill="none" stroke="#fff" stroke-opacity="0.85"/>
<text x="691" y="537" font-size="11.5" fill="#fff" text-anchor="middle" font-weight="bold" >Cyan</text>
<rect x="731" y="404" width="60" height="60" fill="#cc00b8"/>
<rect x="731" y="464" width="60" height="59" fill="#b828b8"/>
<rect x="731.5" y="404.5" width="59" height="118" fill="none" stroke="#fff" stroke-opacity="0.85"/>
<text x="761" y="537" font-size="11.5" fill="#fff" text-anchor="middle" font-weight="bold" >Magenta</text>
<rect x="801" y="404" width="60" height="60" fill="#c8c000"/>
<rect x="801" y="464" width="60" height="59" fill="#b9ba4a"/>
<rect x="801.5" y="404.5" width="59" height="118" fill="none" stroke="#fff" stroke-opacity="0.85"/>
<text x="831" y="537" font-size="11.5" fill="#fff" text-anchor="middle" font-weight="bold" >Yellow</text>
<rect x="871" y="404" width="60" height="60" fill="#f8f6fe"/>
<rect x="871" y="464" width="60" height="59" fill="#f6f6f6"/>
<rect x="871.5" y="404.5" width="59" height="118" fill="none" stroke="#fff" stroke-opacity="0.85"/>
<text x="901" y="537" font-size="11.5" fill="#fff" text-anchor="middle" font-weight="bold" >100W</text>
<text transform="translate(376.5 446) rotate(-90)" font-size="10" font-weight="bold" fill="#fff">Actual</text>
<text transform="translate(376.5 513) rotate(-90)" font-size="10" font-weight="bold" fill="#fff">Target</text>
<rect x="944" y="56" width="671" height="501" fill="#282828"/>
<rect x="951" y="62" width="664" height="489" fill="#333"/>
<rect x="987.5" y="83.5" width="620" height="441" fill="#242424"/>
<g clip-path="url(#plotc)"><g clip-path="url(#loc)" shape-rendering="crispEdges"><rect x="1018" y="92" width="54" height="2.6" fill="url(#c0)"/><rect x="1008" y="94" width="91" height="2.6" fill="url(#c1)"/><rect x="1003" y="96" width="118" height="2.6" fill="url(#c2)"/><rect x="1000" y="98" width="141" height="2.6" fill="url(#c3)"/><rect x="997" y="100" width="164" height="2.6" fill="url(#c4)"/><rect x="995" y="102" width="185" height="2.6" fill="url(#c5)"/><rect x="994" y="104" width="205" height="2.6" fill="url(#c6)"/><rect x="992" y="106" width="226" height="2.6" fill="url(#c7)"/><rect x="991" y="108" width="246" height="2.6" fill="url(#c8)"/><rect x="990" y="110" width="265" height="2.6" fill="url(#c9)"/><rect x="990" y="112" width="284" height="2.6" fill="url(#c10)"/><rect x="989" y="114" width="304" height="2.6" fill="url(#c11)"/><rect x="989" y="116" width="323" height="2.6" fill="url(#c12)"/><rect x="988" y="118" width="342" height="2.6" fill="url(#c13)"/><rect x="988" y="120" width="361" height="2.6" fill="url(#c14)"/><rect x="988" y="122" width="380" height="2.6" fill="url(#c15)"/><rect x="988" y="124" width="399" height="2.6" fill="url(#c16)"/><rect x="988" y="126" width="417" height="2.6" fill="url(#c17)"/><rect x="988" y="128" width="436" height="2.6" fill="url(#c18)"/><rect x="988" y="130" width="455" height="2.6" fill="url(#c19)"/><rect x="988" y="132" width="474" height="2.6" fill="url(#c20)"/><rect x="988" y="134" width="493" height="2.6" fill="url(#c21)"/><rect x="988" y="136" width="511" height="2.6" fill="url(#c22)"/><rect x="989" y="138" width="529" height="2.6" fill="url(#c23)"/><rect x="989" y="140" width="548" height="2.6" fill="url(#c24)"/><rect x="989" y="142" width="567" height="2.6" fill="url(#c25)"/><rect x="989" y="144" width="586" height="2.6" fill="url(#c26)"/><rect x="990" y="146" width="603" height="2.6" fill="url(#c27)"/><rect x="990" y="148" width="617.5" height="2.6" fill="url(#c28)"/><rect x="991" y="150" width="616.5" height="2.6" fill="url(#c29)"/><rect x="991" y="152" width="616.5" height="2.6" fill="url(#c30)"/><rect x="992" y="154" width="615.5" height="2.6" fill="url(#c31)"/><rect x="992" y="156" width="615.5" height="2.6" fill="url(#c32)"/><rect x="992" y="158" width="615.5" height="2.6" fill="url(#c33)"/><rect x="993" y="160" width="614.5" height="2.6" fill="url(#c34)"/><rect x="994" y="162" width="613.5" height="2.6" fill="url(#c35)"/><rect x="994" y="164" width="613.5" height="2.6" fill="url(#c36)"/><rect x="995" y="166" width="612.5" height="2.6" fill="url(#c37)"/><rect x="995" y="168" width="612.5" height="2.6" fill="url(#c38)"/><rect x="996" y="170" width="611.5" height="2.6" fill="url(#c39)"/><rect x="996" y="172" width="611.5" height="2.6" fill="url(#c40)"/><rect x="997" y="174" width="610.5" height="2.6" fill="url(#c41)"/><rect x="998" y="176" width="609" height="2.6" fill="url(#c42)"/><rect x="998" y="178" width="607" height="2.6" fill="url(#c43)"/><rect x="999" y="180" width="604" height="2.6" fill="url(#c44)"/><rect x="1000" y="182" width="600" height="2.6" fill="url(#c45)"/><rect x="1000" y="184" width="598" height="2.6" fill="url(#c46)"/><rect x="1001" y="186" width="595" height="2.6" fill="url(#c47)"/><rect x="1002" y="188" width="592" height="2.6" fill="url(#c48)"/><rect x="1003" y="190" width="589" height="2.6" fill="url(#c49)"/><rect x="1003" y="192" width="587" height="2.6" fill="url(#c50)"/><rect x="1004" y="194" width="584" height="2.6" fill="url(#c51)"/><rect x="1005" y="196" width="581" height="2.6" fill="url(#c52)"/><rect x="1006" y="198" width="578" height="2.6" fill="url(#c53)"/><rect x="1006" y="200" width="576" height="2.6" fill="url(#c54)"/><rect x="1007" y="202" width="573" height="2.6" fill="url(#c55)"/><rect x="1008" y="204" width="569" height="2.6" fill="url(#c56)"/><rect x="1009" y="206" width="566" height="2.6" fill="url(#c57)"/><rect x="1010" y="208" width="563" height="2.6" fill="url(#c58)"/><rect x="1010" y="210" width="561" height="2.6" fill="url(#c59)"/><rect x="1011" y="212" width="558" height="2.6" fill="url(#c60)"/><rect x="1012" y="214" width="555" height="2.6" fill="url(#c61)"/><rect x="1013" y="216" width="552" height="2.6" fill="url(#c62)"/><rect x="1014" y="218" width="549" height="2.6" fill="url(#c63)"/><rect x="1015" y="220" width="546" height="2.6" fill="url(#c64)"/><rect x="1016" y="222" width="543" height="2.6" fill="url(#c65)"/><rect x="1016" y="224" width="540" height="2.6" fill="url(#c66)"/><rect x="1017" y="226" width="537" height="2.6" fill="url(#c67)"/><rect x="1018" y="228" width="534" height="2.6" fill="url(#c68)"/><rect x="1019" y="230" width="531" height="2.6" fill="url(#c69)"/><rect x="1020" y="232" width="528" height="2.6" fill="url(#c70)"/><rect x="1021" y="234" width="525" height="2.6" fill="url(#c71)"/><rect x="1022" y="236" width="522" height="2.6" fill="url(#c72)"/><rect x="1023" y="238" width="519" height="2.6" fill="url(#c73)"/><rect x="1024" y="240" width="516" height="2.6" fill="url(#c74)"/><rect x="1025" y="242" width="513" height="2.6" fill="url(#c75)"/><rect x="1026" y="244" width="509" height="2.6" fill="url(#c76)"/><rect x="1027" y="246" width="506" height="2.6" fill="url(#c77)"/><rect x="1028" y="248" width="503" height="2.6" fill="url(#c78)"/><rect x="1029" y="250" width="500" height="2.6" fill="url(#c79)"/><rect x="1030" y="252" width="497" height="2.6" fill="url(#c80)"/><rect x="1031" y="254" width="494" height="2.6" fill="url(#c81)"/><rect x="1032" y="256" width="491" height="2.6" fill="url(#c82)"/><rect x="1033" y="258" width="488" height="2.6" fill="url(#c83)"/><rect x="1034" y="260" width="485" height="2.6" fill="url(#c84)"/><rect x="1035" y="262" width="482" height="2.6" fill="url(#c85)"/><rect x="1036" y="264" width="478" height="2.6" fill="url(#c86)"/><rect x="1037" y="266" width="475" height="2.6" fill="url(#c87)"/><rect x="1038" y="268" width="472" height="2.6" fill="url(#c88)"/><rect x="1039" y="270" width="469" height="2.6" fill="url(#c89)"/><rect x="1040" y="272" width="466" height="2.6" fill="url(#c90)"/><rect x="1041" y="274" width="463" height="2.6" fill="url(#c91)"/><rect x="1042" y="276" width="460" height="2.6" fill="url(#c92)"/><rect x="1043" y="278" width="457" height="2.6" fill="url(#c93)"/><rect x="1044" y="280" width="454" height="2.6" fill="url(#c94)"/><rect x="1046" y="282" width="450" height="2.6" fill="url(#c95)"/><rect x="1047" y="284" width="447" height="2.6" fill="url(#c96)"/><rect x="1048" y="286" width="443" height="2.6" fill="url(#c97)"/><rect x="1049" y="288" width="440" height="2.6" fill="url(#c98)"/><rect x="1050" y="290" width="437" height="2.6" fill="url(#c99)"/><rect x="1051" y="292" width="434" height="2.6" fill="url(#c100)"/><rect x="1052" y="294" width="431" height="2.6" fill="url(#c101)"/><rect x="1054" y="296" width="427" height="2.6" fill="url(#c102)"/><rect x="1055" y="298" width="424" height="2.6" fill="url(#c103)"/><rect x="1056" y="300" width="421" height="2.6" fill="url(#c104)"/><rect x="1057" y="302" width="418" height="2.6" fill="url(#c105)"/><rect x="1058" y="304" width="415" height="2.6" fill="url(#c106)"/><rect x="1060" y="306" width="410" height="2.6" fill="url(#c107)"/><rect x="1061" y="308" width="407" height="2.6" fill="url(#c108)"/><rect x="1062" y="310" width="404" height="2.6" fill="url(#c109)"/><rect x="1063" y="312" width="401" height="2.6" fill="url(#c110)"/><rect x="1065" y="314" width="397" height="2.6" fill="url(#c111)"/><rect x="1066" y="316" width="394" height="2.6" fill="url(#c112)"/><rect x="1067" y="318" width="391" height="2.6" fill="url(#c113)"/><rect x="1068" y="320" width="388" height="2.6" fill="url(#c114)"/><rect x="1070" y="322" width="384" height="2.6" fill="url(#c115)"/><rect x="1071" y="324" width="381" height="2.6" fill="url(#c116)"/><rect x="1072" y="326" width="377" height="2.6" fill="url(#c117)"/><rect x="1074" y="328" width="373" height="2.6" fill="url(#c118)"/><rect x="1075" y="330" width="370" height="2.6" fill="url(#c119)"/><rect x="1076" y="332" width="367" height="2.6" fill="url(#c120)"/><rect x="1077" y="334" width="364" height="2.6" fill="url(#c121)"/><rect x="1079" y="336" width="360" height="2.6" fill="url(#c122)"/><rect x="1080" y="338" width="357" height="2.6" fill="url(#c123)"/><rect x="1081" y="340" width="354" height="2.6" fill="url(#c124)"/><rect x="1083" y="342" width="350" height="2.6" fill="url(#c125)"/><rect x="1084" y="344" width="347" height="2.6" fill="url(#c126)"/><rect x="1085" y="346" width="343" height="2.6" fill="url(#c127)"/><rect x="1087" y="348" width="339" height="2.6" fill="url(#c128)"/><rect x="1088" y="350" width="336" height="2.6" fill="url(#c129)"/><rect x="1089" y="352" width="333" height="2.6" fill="url(#c130)"/><rect x="1091" y="354" width="329" height="2.6" fill="url(#c131)"/><rect x="1092" y="356" width="326" height="2.6" fill="url(#c132)"/><rect x="1093" y="358" width="323" height="2.6" fill="url(#c133)"/><rect x="1095" y="360" width="319" height="2.6" fill="url(#c134)"/><rect x="1096" y="362" width="316" height="2.6" fill="url(#c135)"/><rect x="1097" y="364" width="313" height="2.6" fill="url(#c136)"/><rect x="1099" y="366" width="309" height="2.6" fill="url(#c137)"/><rect x="1100" y="368" width="305" height="2.6" fill="url(#c138)"/><rect x="1102" y="370" width="301" height="2.6" fill="url(#c139)"/><rect x="1103" y="372" width="298" height="2.6" fill="url(#c140)"/><rect x="1105" y="374" width="294" height="2.6" fill="url(#c141)"/><rect x="1106" y="376" width="291" height="2.6" fill="url(#c142)"/><rect x="1107" y="378" width="288" height="2.6" fill="url(#c143)"/><rect x="1109" y="380" width="284" height="2.6" fill="url(#c144)"/><rect x="1110" y="382" width="281" height="2.6" fill="url(#c145)"/><rect x="1112" y="384" width="277" height="2.6" fill="url(#c146)"/><rect x="1113" y="386" width="274" height="2.6" fill="url(#c147)"/><rect x="1115" y="388" width="269" height="2.6" fill="url(#c148)"/><rect x="1116" y="390" width="266" height="2.6" fill="url(#c149)"/><rect x="1118" y="392" width="262" height="2.6" fill="url(#c150)"/><rect x="1119" y="394" width="259" height="2.6" fill="url(#c151)"/><rect x="1121" y="396" width="255" height="2.6" fill="url(#c152)"/><rect x="1123" y="398" width="251" height="2.6" fill="url(#c153)"/><rect x="1124" y="400" width="248" height="2.6" fill="url(#c154)"/><rect x="1126" y="402" width="244" height="2.6" fill="url(#c155)"/><rect x="1127" y="404" width="241" height="2.6" fill="url(#c156)"/><rect x="1129" y="406" width="237" height="2.6" fill="url(#c157)"/><rect x="1130" y="408" width="233" height="2.6" fill="url(#c158)"/><rect x="1132" y="410" width="229" height="2.6" fill="url(#c159)"/><rect x="1134" y="412" width="225" height="2.6" fill="url(#c160)"/><rect x="1135" y="414" width="222" height="2.6" fill="url(#c161)"/><rect x="1137" y="416" width="218" height="2.6" fill="url(#c162)"/><rect x="1139" y="418" width="214" height="2.6" fill="url(#c163)"/><rect x="1140" y="420" width="211" height="2.6" fill="url(#c164)"/><rect x="1142" y="422" width="207" height="2.6" fill="url(#c165)"/><rect x="1144" y="424" width="203" height="2.6" fill="url(#c166)"/><rect x="1146" y="426" width="199" height="2.6" fill="url(#c167)"/><rect x="1147" y="428" width="195" height="2.6" fill="url(#c168)"/><rect x="1149" y="430" width="191" height="2.6" fill="url(#c169)"/><rect x="1151" y="432" width="187" height="2.6" fill="url(#c170)"/><rect x="1153" y="434" width="183" height="2.6" fill="url(#c171)"/><rect x="1155" y="436" width="179" height="2.6" fill="url(#c172)"/><rect x="1157" y="438" width="175" height="2.6" fill="url(#c173)"/><rect x="1158" y="440" width="172" height="2.6" fill="url(#c174)"/><rect x="1160" y="442" width="168" height="2.6" fill="url(#c175)"/><rect x="1162" y="444" width="164" height="2.6" fill="url(#c176)"/><rect x="1164" y="446" width="160" height="2.6" fill="url(#c177)"/><rect x="1166" y="448" width="156" height="2.6" fill="url(#c178)"/><rect x="1168" y="450" width="151" height="2.6" fill="url(#c179)"/><rect x="1170" y="452" width="147" height="2.6" fill="url(#c180)"/><rect x="1173" y="454" width="142" height="2.6" fill="url(#c181)"/><rect x="1175" y="456" width="138" height="2.6" fill="url(#c182)"/><rect x="1177" y="458" width="134" height="2.6" fill="url(#c183)"/><rect x="1179" y="460" width="130" height="2.6" fill="url(#c184)"/><rect x="1182" y="462" width="125" height="2.6" fill="url(#c185)"/><rect x="1184" y="464" width="121" height="2.6" fill="url(#c186)"/><rect x="1186" y="466" width="117" height="2.6" fill="url(#c187)"/><rect x="1189" y="468" width="112" height="2.6" fill="url(#c188)"/><rect x="1191" y="470" width="107" height="2.6" fill="url(#c189)"/><rect x="1194" y="472" width="102" height="2.6" fill="url(#c190)"/><rect x="1196" y="474" width="98" height="2.6" fill="url(#c191)"/><rect x="1199" y="476" width="93" height="2.6" fill="url(#c192)"/><rect x="1201" y="478" width="89" height="2.6" fill="url(#c193)"/><rect x="1204" y="480" width="84" height="2.6" fill="url(#c194)"/><rect x="1206" y="482" width="80" height="2.6" fill="url(#c195)"/><rect x="1209" y="484" width="75" height="2.6" fill="url(#c196)"/><rect x="1212" y="486" width="70" height="2.6" fill="url(#c197)"/><rect x="1214" y="488" width="66" height="2.6" fill="url(#c198)"/><rect x="1217" y="490" width="60" height="2.6" fill="url(#c199)"/><rect x="1219" y="492" width="56" height="2.6" fill="url(#c200)"/><rect x="1222" y="494" width="51" height="2.6" fill="url(#c201)"/><rect x="1225" y="496" width="46" height="2.6" fill="url(#c202)"/><rect x="1227" y="498" width="42" height="2.6" fill="url(#c203)"/><rect x="1230" y="500" width="37" height="2.6" fill="url(#c204)"/><rect x="1232" y="502" width="33" height="2.6" fill="url(#c205)"/><rect x="1235" y="504" width="28" height="2.6" fill="url(#c206)"/><rect x="1237" y="506" width="24" height="2.6" fill="url(#c207)"/><rect x="1240" y="508" width="19" height="2.6" fill="url(#c208)"/><rect x="1243" y="510" width="13" height="2.6" fill="url(#c209)"/><rect x="1246" y="512" width="8" height="2.6" fill="url(#c210)"/></g>
<path d="M1252.6 512.8L1252.5 512.8L1252.4 512.7L1252.3 512.8L1252.2 512.9L1252.1 512.9L1251.9 512.8L1251.7 512.8L1251.6 512.9L1251.6 513.1L1251.4 513.2L1251.3 513.2L1251.1 513.2L1250.8 513.2L1250.4 513.2L1250.1 513.2L1249.8 513.2L1249.5 513.1L1249.1 513.1L1248.5 512.9L1247.8 512.5L1246.8 511.9L1245.7 511.2L1244.5 510.4L1243.1 509.4L1241.5 508.2L1239.6 506.9L1237.5 505.3L1235.1 503.5L1232.6 501.5L1229.8 499.2L1226.7 496.8L1223.3 494.2L1219.4 491.3L1215.2 488.0L1210.5 484.4L1205.5 480.6L1200.2 476.5L1194.3 471.8L1188.0 466.6L1181.2 460.8L1174.0 454.3L1166.1 446.8L1157.3 437.8L1147.3 426.7L1136.2 413.8L1124.5 399.3L1112.2 383.1L1099.4 365.3L1086.2 345.9L1073.0 325.6L1059.9 304.6L1047.3 283.3L1035.7 262.1L1025.5 241.5L1016.6 221.9L1008.8 203.6L1002.4 186.8L997.4 171.9L993.7 158.7L991.1 147.3L989.5 137.4L988.9 128.9L989.2 121.6L990.4 115.3L992.3 109.9L995.0 105.4L998.3 101.8L1002.2 98.9L1006.6 96.8L1011.4 95.3L1016.5 94.3L1021.9 93.7L1027.5 93.3L1033.3 93.1L1039.2 93.1L1045.0 93.1L1050.9 93.1L1056.9 93.3L1063.0 93.6L1069.3 93.9L1075.7 94.3L1082.4 94.7L1089.3 95.3L1096.4 95.9L1103.8 96.5L1111.5 97.2L1119.5 98.0L1127.8 98.8L1136.5 99.6L1145.5 100.5L1154.9 101.5L1164.7 102.5L1174.9 103.6L1185.5 104.7L1196.6 105.8L1208.0 107.1L1219.9 108.3L1232.3 109.6L1245.1 111.0L1258.2 112.4L1271.8 113.9L1285.8 115.4L1300.1 116.9L1314.7 118.4L1329.6 120.0L1344.7 121.6L1359.9 123.2L1374.8 124.8L1389.4 126.4L1403.9 127.9L1418.4 129.5L1432.6 131.0L1446.2 132.5L1459.2 133.8L1471.6 135.1L1483.5 136.4L1494.7 137.6L1505.3 138.7L1515.2 139.8L1524.4 140.8L1532.9 141.7L1540.9 142.5L1548.4 143.3L1555.3 144.1L1561.8 144.8L1568.0 145.4L1573.9 146.0L1579.3 146.6L1584.4 147.2L1589.2 147.7L1593.6 148.1L1597.6 148.6L1601.2 149.0L1604.4 149.3L1607.2 149.6L1609.8 149.9L1612.2 150.1L1614.3 150.4L1616.2 150.6L1617.8 150.7L1619.2 150.9L1620.4 151.0L1621.4 151.1L1622.4 151.2L1623.4 151.3L1624.2 151.4L1625.0 151.5L1625.7 151.6L1626.5 151.7L1627.3 151.7L1628.0 151.8L1628.7 151.9L1629.3 152.0L1629.7 152.0L1630.0 152.0L1630.2 152.1L1630.5 152.1L1630.6 152.1L1630.8 152.1L1630.8 152.1L1630.8 152.1Z M1452.6 140.0L1116.5 110.9L1168.5 408.7Z" fill="#000" fill-opacity="0.4" fill-rule="evenodd"/></g>
<rect x="987.5" y="83.5" width="620" height="441" fill="none" stroke="#a4a4a4" stroke-width="1.4"/>
<text x="987.8" y="544" font-size="14" fill="#d2d2d2" text-anchor="middle" >0</text>
<text x="981.5" y="529.7" font-size="14" fill="#d2d2d2" text-anchor="end" >0</text>
<text x="1039.4" y="544" font-size="14" fill="#d2d2d2" text-anchor="middle" >0,05</text>
<text x="981.5" y="493.015" font-size="14" fill="#d2d2d2" text-anchor="end" >0,05</text>
<text x="1091" y="544" font-size="14" fill="#d2d2d2" text-anchor="middle" >0,1</text>
<text x="981.5" y="456.33" font-size="14" fill="#d2d2d2" text-anchor="end" >0,1</text>
<text x="1142.6" y="544" font-size="14" fill="#d2d2d2" text-anchor="middle" >0,15</text>
<text x="981.5" y="419.645" font-size="14" fill="#d2d2d2" text-anchor="end" >0,15</text>
<text x="1194.2" y="544" font-size="14" fill="#d2d2d2" text-anchor="middle" >0,2</text>
<text x="981.5" y="382.96" font-size="14" fill="#d2d2d2" text-anchor="end" >0,2</text>
<text x="1245.8" y="544" font-size="14" fill="#d2d2d2" text-anchor="middle" >0,25</text>
<text x="981.5" y="346.275" font-size="14" fill="#d2d2d2" text-anchor="end" >0,25</text>
<text x="1297.4" y="544" font-size="14" fill="#d2d2d2" text-anchor="middle" >0,3</text>
<text x="981.5" y="309.59" font-size="14" fill="#d2d2d2" text-anchor="end" >0,3</text>
<text x="1349" y="544" font-size="14" fill="#d2d2d2" text-anchor="middle" >0,35</text>
<text x="981.5" y="272.905" font-size="14" fill="#d2d2d2" text-anchor="end" >0,35</text>
<text x="1400.6" y="544" font-size="14" fill="#d2d2d2" text-anchor="middle" >0,4</text>
<text x="981.5" y="236.22" font-size="14" fill="#d2d2d2" text-anchor="end" >0,4</text>
<text x="1452.2" y="544" font-size="14" fill="#d2d2d2" text-anchor="middle" >0,45</text>
<text x="981.5" y="199.535" font-size="14" fill="#d2d2d2" text-anchor="end" >0,45</text>
<text x="1503.8" y="544" font-size="14" fill="#d2d2d2" text-anchor="middle" >0,5</text>
<text x="981.5" y="162.85" font-size="14" fill="#d2d2d2" text-anchor="end" >0,5</text>
<text x="1555.4" y="544" font-size="14" fill="#d2d2d2" text-anchor="middle" >0,55</text>
<text x="981.5" y="126.165" font-size="14" fill="#d2d2d2" text-anchor="end" >0,55</text>
<path d="M987.8 524.5v5M987.5 524.7h-5M1039.4 524.5v5M987.5 488.0h-5M1091.0 524.5v5M987.5 451.3h-5M1142.6 524.5v5M987.5 414.6h-5M1194.2 524.5v5M987.5 378.0h-5M1245.8 524.5v5M987.5 341.3h-5M1297.4 524.5v5M987.5 304.6h-5M1349.0 524.5v5M987.5 267.9h-5M1400.6 524.5v5M987.5 231.2h-5M1452.2 524.5v5M987.5 194.5h-5M1503.8 524.5v5M987.5 157.8h-5M1555.4 524.5v5M987.5 121.2h-5" stroke="#c8c8c8" stroke-width="1.8" fill="none"/>
<text x="1281" y="79" font-size="14" fill="#d2d2d2" text-anchor="middle" textLength="83" lengthAdjust="spacingAndGlyphs" >CIE 1976 u'v'</text>
<rect x="1360" y="495.5" width="244.5" height="25" fill="#2e2e2e"/>
<text x="1360.5" y="514" font-size="19" fill="#f4f4f4" textLength="150" lengthAdjust="spacingAndGlyphs" stroke="#f4f4f4" stroke-width="0.45">Gamut Coverage:</text>
<text x="1522" y="514" font-size="19" fill="#f4f4f4" textLength="54" lengthAdjust="spacingAndGlyphs" stroke="#f4f4f4" stroke-width="0.45">99,5%</text>
<rect x="1108.8" y="104" width="13.4" height="12" fill="none" stroke="#fff" stroke-width="1.4" stroke-opacity="0.95"/>
<rect x="1190.9" y="111.4" width="13.4" height="12" fill="none" stroke="#fff" stroke-width="1.4" stroke-opacity="0.95"/>
<rect x="1445.4" y="133.5" width="13.4" height="12" fill="none" stroke="#fff" stroke-width="1.4" stroke-opacity="0.95"/>
<rect x="1123.3" y="183.4" width="13.4" height="12" fill="none" stroke="#fff" stroke-width="1.4" stroke-opacity="0.95"/>
<rect x="1294.9" y="275" width="13.4" height="12" fill="none" stroke="#fff" stroke-width="1.4" stroke-opacity="0.95"/>
<rect x="1161.8" y="401.5" width="13.4" height="12" fill="none" stroke="#fff" stroke-width="1.4" stroke-opacity="0.95"/>
<rect x="1185" y="174.05" width="12" height="10.7" fill="none" stroke="#000" stroke-width="2" stroke-opacity="1"/>
<circle cx="1108.9" cy="102.4" r="4.2" fill="#14b414" stroke="#000" stroke-width="1.2"/>
<circle cx="1205.7" cy="111.5" r="4.2" fill="#c8c814" stroke="#000" stroke-width="1.2"/>
<circle cx="1463.3" cy="135.3" r="3.6" fill="#be0a0a" stroke="#000" stroke-width="1.2"/>
<circle cx="1128.5" cy="190.4" r="3.8" fill="#1ec8c8" stroke="#000" stroke-width="1.2"/>
<ellipse cx="1328" cy="275.8" rx="4.5" ry="3.4" fill="#b414b4" stroke="#303" stroke-width="1.2"/>
<circle cx="1181.4" cy="428.6" r="3.8" fill="#0a0ac8" stroke="#004" stroke-width="1.2"/>
<circle cx="1192.4" cy="187.6" r="3.6" fill="#ccc" stroke="#000" stroke-width="1.2"/>
<circle cx="1192.4" cy="183.3" r="3.6" fill="#fff" stroke="#000" stroke-width="1.2"/>
<rect x="335.5" y="590.5" width="253" height="161" fill="#242424"/>
<text x="329.5" y="627" font-size="13.5" fill="#d2d2d2" text-anchor="end" >5</text>
<text x="329.5" y="677" font-size="13.5" fill="#d2d2d2" text-anchor="end" >0</text>
<text x="329.5" y="728" font-size="13.5" fill="#d2d2d2" text-anchor="end" >-5</text>
<path d="M335.5 622.5H588.5M335.5 672.5H588.5M335.5 723.5H588.5" stroke="#9a9a9a" fill="none"/>
<path d="M335.5 622.5h-5M335.5 672.5h-5M335.5 723.5h-5" stroke="#ccc" fill="none"/>
<path d="M335.5 756.5V590.5H588.5V756.5" stroke="#a4a4a4" stroke-width="1.5" fill="none"/>
<path d="M335.5 751.5H588.5" stroke="#9a9a9a" fill="none"/>
<text x="452" y="585.5" font-size="13.5" fill="#d2d2d2" text-anchor="middle" textLength="81" lengthAdjust="spacingAndGlyphs" >RGB Balance</text>
<text x="461.5" y="766.5" font-size="13.5" fill="#d2d2d2" text-anchor="middle" textLength="37" lengthAdjust="spacingAndGlyphs" >100W</text>
<rect x="360" y="657.5" width="66" height="15" fill="url(#rb)" stroke="#000"/>
<rect x="427" y="672.5" width="66.5" height="11.5" fill="url(#gb)" stroke="#000"/>
<rect x="494.5" y="592.5" width="66" height="80" fill="url(#bb)" stroke="#000"/>
<g shape-rendering="crispEdges"><rect x="617.5" y="584" width="330" height="3.6" fill="url(#m0)"/><rect x="617.5" y="587" width="330" height="3.6" fill="url(#m1)"/><rect x="617.5" y="590" width="330" height="3.6" fill="url(#m2)"/><rect x="617.5" y="593" width="330" height="3.6" fill="url(#m3)"/><rect x="617.5" y="596" width="330" height="3.6" fill="url(#m4)"/><rect x="617.5" y="599" width="330" height="3.6" fill="url(#m5)"/><rect x="617.5" y="602" width="330" height="3.6" fill="url(#m6)"/><rect x="617.5" y="605" width="330" height="3.6" fill="url(#m7)"/><rect x="617.5" y="608" width="330" height="3.6" fill="url(#m8)"/><rect x="617.5" y="611" width="330" height="3.6" fill="url(#m9)"/><rect x="617.5" y="614" width="330" height="3.6" fill="url(#m10)"/><rect x="617.5" y="617" width="330" height="3.6" fill="url(#m11)"/><rect x="617.5" y="620" width="330" height="3.6" fill="url(#m12)"/><rect x="617.5" y="623" width="330" height="3.6" fill="url(#m13)"/><rect x="617.5" y="626" width="330" height="3.6" fill="url(#m14)"/><rect x="617.5" y="629" width="330" height="3.6" fill="url(#m15)"/><rect x="617.5" y="632" width="330" height="3.6" fill="url(#m16)"/><rect x="617.5" y="635" width="330" height="3.6" fill="url(#m17)"/><rect x="617.5" y="638" width="330" height="3.6" fill="url(#m18)"/><rect x="617.5" y="641" width="330" height="3.6" fill="url(#m19)"/><rect x="617.5" y="644" width="330" height="3.6" fill="url(#m20)"/><rect x="617.5" y="647" width="330" height="3.6" fill="url(#m21)"/><rect x="617.5" y="650" width="330" height="3.6" fill="url(#m22)"/><rect x="617.5" y="653" width="330" height="3.6" fill="url(#m23)"/><rect x="617.5" y="656" width="330" height="3.6" fill="url(#m24)"/><rect x="617.5" y="659" width="330" height="3.6" fill="url(#m25)"/><rect x="617.5" y="662" width="330" height="3.6" fill="url(#m26)"/><rect x="617.5" y="665" width="330" height="3.6" fill="url(#m27)"/><rect x="617.5" y="668" width="330" height="3.6" fill="url(#m28)"/><rect x="617.5" y="671" width="330" height="3.6" fill="url(#m29)"/><rect x="617.5" y="674" width="330" height="3.6" fill="url(#m30)"/><rect x="617.5" y="677" width="330" height="3.6" fill="url(#m31)"/><rect x="617.5" y="680" width="330" height="3.6" fill="url(#m32)"/><rect x="617.5" y="683" width="330" height="3.6" fill="url(#m33)"/><rect x="617.5" y="686" width="330" height="3.6" fill="url(#m34)"/><rect x="617.5" y="689" width="330" height="3.6" fill="url(#m35)"/><rect x="617.5" y="692" width="330" height="3.6" fill="url(#m36)"/><rect x="617.5" y="695" width="330" height="3.6" fill="url(#m37)"/><rect x="617.5" y="698" width="330" height="3.6" fill="url(#m38)"/><rect x="617.5" y="701" width="330" height="3.6" fill="url(#m39)"/><rect x="617.5" y="704" width="330" height="3.6" fill="url(#m40)"/><rect x="617.5" y="707" width="330" height="3.6" fill="url(#m41)"/><rect x="617.5" y="710" width="330" height="3.6" fill="url(#m42)"/><rect x="617.5" y="713" width="330" height="3.6" fill="url(#m43)"/><rect x="617.5" y="716" width="330" height="3.6" fill="url(#m44)"/><rect x="617.5" y="719" width="330" height="3.6" fill="url(#m45)"/><rect x="617.5" y="722" width="330" height="3.6" fill="url(#m46)"/><rect x="617.5" y="725" width="330" height="3.6" fill="url(#m47)"/><rect x="617.5" y="728" width="330" height="3.6" fill="url(#m48)"/><rect x="617.5" y="731" width="330" height="3.6" fill="url(#m49)"/><rect x="617.5" y="734" width="330" height="3.6" fill="url(#m50)"/><rect x="617.5" y="737" width="330" height="3.6" fill="url(#m51)"/><rect x="617.5" y="740" width="330" height="3.6" fill="url(#m52)"/><rect x="617.5" y="743" width="330" height="3.6" fill="url(#m53)"/><rect x="617.5" y="746" width="330" height="3.6" fill="url(#m54)"/><rect x="617.5" y="749" width="330" height="3.6" fill="url(#m55)"/><rect x="617.5" y="752" width="330" height="3.6" fill="url(#m56)"/><rect x="617.5" y="755" width="330" height="3.6" fill="url(#m57)"/><rect x="617.5" y="758" width="330" height="2.6" fill="url(#m58)"/></g>
<rect x="617.5" y="583.5" width="330" height="177" fill="none" stroke="#9a9a9a"/>
<text x="782.5" y="579" font-size="13.5" fill="#d2d2d2" text-anchor="middle" textLength="73" lengthAdjust="spacingAndGlyphs" >CIE 1931 xy</text>
<rect x="776" y="666" width="13" height="11" fill="#fff" stroke="#000" stroke-width="1.6"/>
<circle cx="758.5" cy="701.5" r="4" fill="#fff" stroke="#000" stroke-width="1.2"/>
<circle cx="736.5" cy="727.5" r="4" fill="#b4b4b4" stroke="#000" stroke-width="1.2"/>
<rect x="965.5" y="570.5" width="627.5" height="35.5" fill="url(#th)"/>
<rect x="965.5" y="570.5" width="13.5" height="35.5" fill="#000"/>
<text transform="translate(1053.5 594.5) scale(0.83 1)" font-size="18.02" fill="#f0f0f0">White</text>
<text transform="translate(1121.5 594.5) scale(0.83 1)" font-size="18.02" fill="#f0f0f0">Red</text>
<text transform="translate(1189 594.5) scale(0.83 1)" font-size="18.02" fill="#f0f0f0">Green</text>
<text transform="translate(1257 594.5) scale(0.83 1)" font-size="18.02" fill="#f0f0f0">Blue</text>
<text transform="translate(1315.5 594.5) scale(0.83 1)" font-size="18.02" fill="#f0f0f0">Cyan</text>
<text transform="translate(1383.5 594.5) scale(0.83 1)" font-size="18.02" fill="#f0f0f0">Magenta</text>
<text transform="translate(1452.5 594.5) scale(0.83 1)" font-size="18.02" fill="#f0f0f0">Yellow</text>
<text transform="translate(1520.5 594.5) scale(0.83 1)" font-size="18.02" fill="#f0f0f0">100W</text>
<rect x="979" y="606" width="614" height="32.5" fill="#3c3c3c"/>
<rect x="965.5" y="606" width="13.5" height="32.5" fill="url(#rh)"/>
<text transform="translate(984 629.1) scale(0.875 1)" font-size="18.02" fill="#f0f0f0">x: CIE31</text>
<text transform="translate(1053.5 629.1) scale(0.875 1)" font-size="18.02" fill="#f0f0f0">0,3059</text>
<text transform="translate(1121.5 629.1) scale(0.875 1)" font-size="18.02" fill="#f0f0f0">0,6566</text>
<text transform="translate(1189 629.1) scale(0.875 1)" font-size="18.02" fill="#f0f0f0">0,2993</text>
<text transform="translate(1257 629.1) scale(0.875 1)" font-size="18.02" fill="#f0f0f0">0,1536</text>
<text transform="translate(1315.5 629.1) scale(0.875 1)" font-size="18.02" fill="#f0f0f0">0,2206</text>
<text transform="translate(1383.5 629.1) scale(0.875 1)" font-size="18.02" fill="#f0f0f0">0,3459</text>
<text transform="translate(1452.5 629.1) scale(0.875 1)" font-size="18.02" fill="#f0f0f0">0,4435</text>
<text transform="translate(1520.5 629.1) scale(0.875 1)" font-size="18.02" fill="#f0f0f0">0,3092</text>
<rect x="979" y="638.5" width="614" height="32" fill="#7b7b7b"/>
<rect x="965.5" y="638.5" width="13.5" height="32" fill="url(#rh)"/>
<text transform="translate(984 661.1) scale(0.875 1)" font-size="18.02" fill="#f0f0f0">y: CIE31</text>
<text transform="translate(1053.5 661.1) scale(0.875 1)" font-size="18.02" fill="#f0f0f0">0,3133</text>
<text transform="translate(1121.5 661.1) scale(0.875 1)" font-size="18.02" fill="#f0f0f0">0,3348</text>
<text transform="translate(1189 661.1) scale(0.875 1)" font-size="18.02" fill="#f0f0f0">0,6441</text>
<text transform="translate(1257 661.1) scale(0.875 1)" font-size="18.02" fill="#f0f0f0">0,0467</text>
<text transform="translate(1315.5 661.1) scale(0.875 1)" font-size="18.02" fill="#f0f0f0">0,3247</text>
<text transform="translate(1383.5 661.1) scale(0.875 1)" font-size="18.02" fill="#f0f0f0">0,1566</text>
<text transform="translate(1452.5 661.1) scale(0.875 1)" font-size="18.02" fill="#f0f0f0">0,5219</text>
<text transform="translate(1520.5 661.1) scale(0.875 1)" font-size="18.02" fill="#f0f0f0">0,3206</text>
<rect x="979" y="670.5" width="614" height="32.5" fill="#3c3c3c"/>
<rect x="965.5" y="670.5" width="13.5" height="32.5" fill="url(#rh)"/>
<text transform="translate(984 693.6) scale(0.875 1)" font-size="18.02" fill="#f0f0f0">Y</text>
<text transform="translate(1053.5 693.6) scale(0.875 1)" font-size="18.02" fill="#f0f0f0">92,9170</text>
<text transform="translate(1121.5 693.6) scale(0.875 1)" font-size="18.02" fill="#f0f0f0">22,4874</text>
<text transform="translate(1189 693.6) scale(0.875 1)" font-size="18.02" fill="#f0f0f0">66,7807</text>
<text transform="translate(1257 693.6) scale(0.875 1)" font-size="18.02" fill="#f0f0f0">6,3198</text>
<text transform="translate(1315.5 693.6) scale(0.875 1)" font-size="18.02" fill="#f0f0f0">72,2406</text>
<text transform="translate(1383.5 693.6) scale(0.875 1)" font-size="18.02" fill="#f0f0f0">28,5198</text>
<text transform="translate(1452.5 693.6) scale(0.875 1)" font-size="18.02" fill="#f0f0f0">89,0262</text>
<text transform="translate(1520.5 693.6) scale(0.875 1)" font-size="18.02" fill="#f0f0f0">189,5811</text>
<rect x="979" y="703" width="614" height="32" fill="#7b7b7b"/>
<rect x="965.5" y="703" width="13.5" height="32" fill="url(#rh)"/>
<text transform="translate(984 725.6) scale(0.875 1)" font-size="18.02" fill="#f0f0f0">Target Y</text>
<text transform="translate(1053.5 725.6) scale(0.875 1)" font-size="18.02" fill="#f0f0f0">92,9170</text>
<text transform="translate(1121.5 725.6) scale(0.875 1)" font-size="18.02" fill="#f0f0f0">19,7593</text>
<text transform="translate(1189 725.6) scale(0.875 1)" font-size="18.02" fill="#f0f0f0">66,4504</text>
<text transform="translate(1257 725.6) scale(0.875 1)" font-size="18.02" fill="#f0f0f0">6,7073</text>
<text transform="translate(1315.5 725.6) scale(0.875 1)" font-size="18.02" fill="#f0f0f0">73,1576</text>
<text transform="translate(1383.5 725.6) scale(0.875 1)" font-size="18.02" fill="#f0f0f0">26,4666</text>
<text transform="translate(1452.5 725.6) scale(0.875 1)" font-size="18.02" fill="#f0f0f0">86,2097</text>
<text transform="translate(1520.5 725.6) scale(0.875 1)" font-size="18.02" fill="#f0f0f0">189,5811</text>
<rect x="979" y="735" width="614" height="32" fill="#3c3c3c"/>
<rect x="965.5" y="735" width="13.5" height="32" fill="url(#rh)"/>
<text transform="translate(984 757.6) scale(0.875 1)" font-size="18.02" fill="#f0f0f0">ΔE 2000</text>
<text transform="translate(1053.5 757.6) scale(0.875 1)" font-size="18.02" fill="#f0f0f0">6,7015</text>
<text transform="translate(1121.5 757.6) scale(0.875 1)" font-size="18.02" fill="#f0f0f0">4,9141</text>
<text transform="translate(1189 757.6) scale(0.875 1)" font-size="18.02" fill="#f0f0f0">3,2471</text>
<text transform="translate(1257 757.6) scale(0.875 1)" font-size="18.02" fill="#f0f0f0">4,7902</text>
<text transform="translate(1315.5 757.6) scale(0.875 1)" font-size="18.02" fill="#f0f0f0">0,9342</text>
<text transform="translate(1383.5 757.6) scale(0.875 1)" font-size="18.02" fill="#f0f0f0">2,9676</text>
<text transform="translate(1452.5 757.6) scale(0.875 1)" font-size="18.02" fill="#f0f0f0">5,1366</text>
<text transform="translate(1520.5 757.6) scale(0.875 1)" font-size="18.02" fill="#f0f0f0">4,7820</text>
<rect x="0" y="868.5" width="287" height="2.5" fill="#3a3a3a"/><rect x="287" y="868.5" width="1328" height="2.5" fill="#11141a"/><rect x="1039.5" y="868.5" width="72" height="2.5" fill="#3a424c"/>
<rect x="0.5" y="776" width="138.5" height="91" rx="5" fill="url(#bb1)"/>
<rect x="8.5" y="783.5" width="123.5" height="54" rx="5" fill="#c0c0c0" stroke="#000" stroke-opacity="0.3"/>
<text x="70" y="860.5" font-size="15.5" fill="#2a2a2a" text-anchor="middle" font-weight="bold" >White</text>
<rect x="142.1" y="776" width="138.5" height="91" rx="5" fill="url(#bb1)"/>
<rect x="150.1" y="783.5" width="123.5" height="54" rx="5" fill="#c00000" stroke="#000" stroke-opacity="0.3"/>
<text x="211.6" y="860.5" font-size="15.5" fill="#2a2a2a" text-anchor="middle" font-weight="bold" >Red</text>
<rect x="283.7" y="776" width="138.5" height="91" rx="5" fill="url(#bb1)"/>
<rect x="291.7" y="783.5" width="123.5" height="54" rx="5" fill="#00c000" stroke="#000" stroke-opacity="0.3"/>
<text x="353.2" y="860.5" font-size="15.5" fill="#2a2a2a" text-anchor="middle" font-weight="bold" >Green</text>
<rect x="425.3" y="776" width="138.5" height="91" rx="5" fill="url(#bb1)"/>
<rect x="433.3" y="783.5" width="123.5" height="54" rx="5" fill="#0000c0" stroke="#000" stroke-opacity="0.3"/>
<text x="494.8" y="860.5" font-size="15.5" fill="#2a2a2a" text-anchor="middle" font-weight="bold" >Blue</text>
<rect x="566.9" y="776" width="138.5" height="91" rx="5" fill="url(#bb1)"/>
<rect x="574.9" y="783.5" width="123.5" height="54" rx="5" fill="#00c0c0" stroke="#000" stroke-opacity="0.3"/>
<text x="636.4" y="860.5" font-size="15.5" fill="#2a2a2a" text-anchor="middle" font-weight="bold" >Cyan</text>
<rect x="708.5" y="776" width="138.5" height="91" rx="5" fill="url(#bb1)"/>
<rect x="716.5" y="783.5" width="123.5" height="54" rx="5" fill="#c000c0" stroke="#000" stroke-opacity="0.3"/>
<text x="778" y="860.5" font-size="15.5" fill="#2a2a2a" text-anchor="middle" font-weight="bold" >Magenta</text>
<rect x="850.1" y="776" width="138.5" height="91" rx="5" fill="url(#bb1)"/>
<rect x="858.1" y="783.5" width="123.5" height="54" rx="5" fill="#c0c000" stroke="#000" stroke-opacity="0.3"/>
<text x="919.6" y="860.5" font-size="15.5" fill="#2a2a2a" text-anchor="middle" font-weight="bold" >Yellow</text>
<rect x="991.7" y="776" width="138.5" height="91" rx="5" fill="url(#bbs)"/>
<rect x="999.7" y="783.5" width="123.5" height="54" rx="5" fill="#ffffff" stroke="#000" stroke-opacity="0.3"/>
<text x="1061.2" y="860.5" font-size="15.5" fill="#fff" text-anchor="middle" font-weight="bold" >100W</text>
<path d="M1134 782Q1134 776 1140 776H1200Q1206 776 1206 782V803H1134Z" fill="url(#colg)"/>
<path d="M1134 804.5H1206V861Q1206 867 1200 867H1140Q1134 867 1134 861Z" fill="url(#colg)"/>
<circle cx="1170.5" cy="790.5" r="11.4" fill="url(#ic)" fill-opacity="0.8"/>
<path d="M1164.2 792l6.4-6.6 6.4 6.6z" fill="#333"/>
<rect x="1149" y="813.8" width="43" height="43" rx="6" fill="url(#stp)" stroke="#2c2c2c" stroke-width="3.4"/>
<rect x="1160.2" y="826" width="20.7" height="10" fill="#1c1c1c"/><rect x="1160.2" y="836" width="20.7" height="10" fill="#000"/>
<path d="M1208 782Q1208 776 1214 776H1547V821H1208Z" fill="url(#cb)"/>
<path d="M1208 822.5H1615V866.5H1214Q1208 866.5 1208 860.5Z" fill="url(#cb)"/>
<path d="M1277.5 776V821M1345 776V821M1412.5 776V821M1480.5 776V821M1412.5 822.5V866.5" stroke="#333" stroke-width="1.3" fill="none"/>
<circle cx="1242.5" cy="798.5" r="15" fill="url(#ic)" fill-opacity="0.85"/>
<circle cx="1311" cy="798.5" r="15" fill="url(#ic)" fill-opacity="0.85"/>
<circle cx="1379" cy="798.5" r="15" fill="url(#ic)" fill-opacity="0.85"/>
<circle cx="1446.5" cy="798.5" r="15" fill="url(#ic)" fill-opacity="0.85"/>
<circle cx="1513.5" cy="798.5" r="15" fill="url(#ic)" fill-opacity="0.85"/>
<rect x="1237" y="793" width="11.3" height="11" fill="#2e2e2e"/>
<path d="M1307.3 792.6L1319.6 799.4L1307.3 806.2z" fill="#2e2e2e"/>
<path d="M1375.3 792.3h-3.6v13.6h3.6M1382.7 792.3h3.6v13.6h-3.6" stroke="#2e2e2e" stroke-width="2.8" fill="none"/>
<rect x="1376" y="797.4" width="2.2" height="2.2" fill="#2e2e2e"/><rect x="1379.8" y="797.4" width="2.2" height="2.2" fill="#2e2e2e"/>
<path d="M1446.5 798.5c-2.5-4.6-9.3-4.6-9.3 0s6.8 4.6 9.3 0s9.3-4.6 9.3 0s-6.8 4.6-9.3 0z" stroke="#2e2e2e" stroke-width="2.5" fill="none"/>
<path d="M1507 797.5a6.6 6.6 0 0 1 11.5-3.6M1520.2 799.5a6.6 6.6 0 0 1 -11.5 3.6" stroke="#2e2e2e" stroke-width="2.8" fill="none"/>
<path d="M1515 796.5l6.5 0.5l-1-7zM1512.2 800.5l-6.5-0.5l1 7z" fill="#2e2e2e"/>
<circle cx="1254.4" cy="844.7" r="14.5" fill="url(#ic)" fill-opacity="0.85"/>
<circle cx="1574" cy="844.7" r="14.5" fill="url(#ic)" fill-opacity="0.85"/>
<path d="M1254.5 837.5l-6.5 7.2l6.5 7.2M1260.5 837.5l-6.5 7.2l6.5 7.2" stroke="#2e2e2e" stroke-width="2" fill="none"/>
<path d="M1568 837.5l6.5 7.2l-6.5 7.2M1574 837.5l6.5 7.2l-6.5 7.2" stroke="#2e2e2e" stroke-width="2" fill="none"/>
<text x="1294.5" y="856.7" font-size="33" fill="#343434" textLength="75.5" lengthAdjust="spacingAndGlyphs" font-weight="bold" >Back</text>
<text x="1455" y="856.7" font-size="33" fill="#343434" textLength="77" lengthAdjust="spacingAndGlyphs" font-weight="bold" >Next</text>
<text x="1580.5" y="840.5" font-size="85" fill="#e81010" filter="url(#ds)" text-anchor="middle" font-weight="bold" font-family="DejaVu Sans, sans-serif">*</text></svg></body></html>
